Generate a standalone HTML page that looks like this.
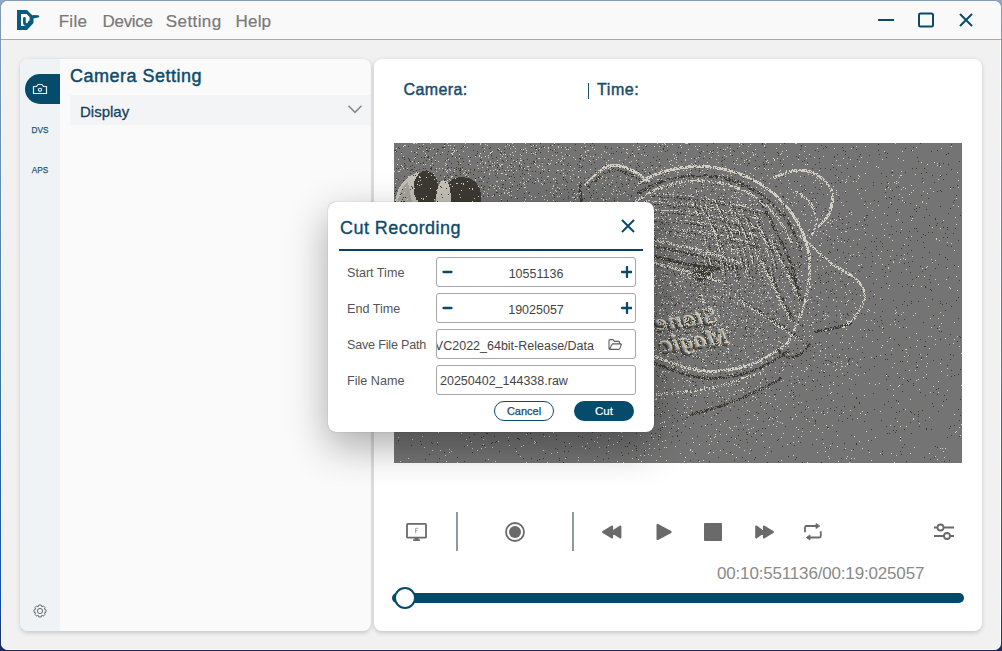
<!DOCTYPE html>
<html><head><meta charset="utf-8">
<style>
*{box-sizing:border-box;margin:0;padding:0}
html,body{width:1002px;height:651px;overflow:hidden;font-family:"Liberation Sans",sans-serif}
body{background:linear-gradient(180deg,#8da8c0 0%,#6d98c0 25%,#3a78b0 60%,#1150c0 92%,#1c2a62 99.5%);position:relative}
.abs{position:absolute}
#win{position:absolute;left:0;top:0;width:1002px;height:651px;border-radius:8px;border:1px solid rgba(30,40,60,.08);background:#f1f1f1;background-clip:padding-box;overflow:hidden;box-shadow:inset 0 0 0 1px rgba(255,255,255,.85)}
#title{position:absolute;left:0;top:0;width:1000px;height:39px;background:#f9f9f9;border-bottom:1px solid #a9a9a9}
.menu{position:absolute;top:11px;font-size:17px;color:#787878;line-height:20px;-webkit-text-stroke:0.2px #787878}
.panel{position:absolute;border-radius:8px;box-shadow:0 1.5px 4px rgba(0,0,0,.17)}
.side{position:absolute;left:0;width:40px;text-align:center;font-size:9.8px;color:#1d5673;line-height:12px;-webkit-text-stroke:0.25px #1d5673;transform:scaleX(0.84)}
.lbl{position:absolute;left:19px;font-size:12.6px;color:#555;line-height:14px}
.inp{position:absolute;left:108px;width:200px;height:30px;border:1px solid #a8a8a8;border-radius:3px;background:#fff;overflow:hidden}
.num{position:absolute;left:0;width:198px;top:9px;text-align:center;font-size:12.5px;color:#444;line-height:15px}
.btn{position:absolute;top:199px;height:20px;border-radius:10px;font-size:11px;line-height:18px;text-align:center}
</style></head><body>
<div id="win">
  <div id="title">
    <svg class="abs" style="left:15px;top:8px" width="26" height="24" viewBox="16 9 26 24">
      <path fill="#0a5a7f" fill-rule="evenodd" d="M17 10H27L33.5 16.5V23L27 30H17Z M21 14H26.6L29.6 17V22L25.8 26H21Z"/>
      <path d="M24.4 18.3V22.2Q24.4 24.7 26.7 24.7Q29 24.7 29.6 21.8" stroke="#0a5a7f" stroke-width="2.7" fill="none" stroke-linecap="round"/>
      <path fill="#0a5a7f" d="M32.3 15L38.5 15.2L39.4 16.4L38.3 17.5L33.2 18.6Z"/>
    </svg>
    <div class="menu" style="left:57.7px;letter-spacing:0.3px">File</div>
    <div class="menu" style="left:101.5px;letter-spacing:-0.3px">Device</div>
    <div class="menu" style="left:164.8px;letter-spacing:0.4px">Setting</div>
    <div class="menu" style="left:234.5px;letter-spacing:0.2px">Help</div>
    <!-- window controls -->
    <svg class="abs" style="left:870px;top:8px" width="110" height="24" viewBox="871 9 110 24">
      <path d="M878 20H894" stroke="#0b4a6a" stroke-width="2"/>
      <rect x="919" y="13.5" width="14" height="13" rx="1.5" fill="none" stroke="#0b4a6a" stroke-width="2"/>
      <path d="M960 14L972 26M972 14L960 26" stroke="#0b4a6a" stroke-width="2"/>
    </svg>
  </div>
  <!-- left panel -->
  <div class="panel" style="left:19px;top:58px;width:351px;height:572px;background:#fafafa;overflow:hidden">
    <div class="abs" style="left:0;top:0;width:40px;height:573px;background:#eff3f6">
      <div class="abs" style="left:5px;top:15px;width:35px;height:30px;background:#054b6b;border-radius:15px 0 0 15px"></div>
      <svg class="abs" style="left:12px;top:24px" width="16" height="12" viewBox="0 0 16 12">
        <path d="M1.5 3.5H4.5L6 1.5H10L11.5 3.5H14.5V10.5H1.5Z" fill="none" stroke="#e6eef2" stroke-width="1.2"/>
        <circle cx="8" cy="6.8" r="1.6" fill="none" stroke="#e6eef2" stroke-width="1.1"/>
      </svg>
      <div class="side" style="top:64.5px">DVS</div>
      <div class="side" style="top:104.5px">APS</div>
      <svg class="abs" style="left:13px;top:545px" width="14" height="14" viewBox="-7 -7 14 14"><path fill="none" stroke="#555" stroke-width="0.85" stroke-linejoin="round" d="M4.36,-1.76 L5.99,-1.16 L5.99,1.16 L4.36,1.76 L4.33,1.84 L5.06,3.41 L3.41,5.06 L1.84,4.33 L1.76,4.36 L1.16,5.99 L-1.16,5.99 L-1.76,4.36 L-1.84,4.33 L-3.41,5.06 L-5.06,3.41 L-4.33,1.84 L-4.36,1.76 L-5.99,1.16 L-5.99,-1.16 L-4.36,-1.76 L-4.33,-1.84 L-5.06,-3.41 L-3.41,-5.06 L-1.84,-4.33 L-1.76,-4.36 L-1.16,-5.99 L1.16,-5.99 L1.76,-4.36 L1.84,-4.33 L3.41,-5.06 L5.06,-3.41 L4.33,-1.84Z"/><circle r="2.6" fill="none" stroke="#555" stroke-width="0.85"/></svg>
    </div>
    <div class="abs" style="left:50px;top:6px;font-size:18px;color:#0f4a6a;line-height:22px;letter-spacing:0.5px;-webkit-text-stroke:0.45px #0f4a6a">Camera Setting</div>
    <div class="abs" style="left:50px;top:36px;width:301px;height:30px;background:#f3f4f6"></div>
    <div class="abs" style="left:60px;top:44px;font-size:15px;color:#15425e;line-height:17px;-webkit-text-stroke:0.3px #15425e">Display</div>
    <svg class="abs" style="left:327px;top:45px" width="16" height="10" viewBox="0 0 16 10"><path d="M1.5 1.8L8 8.4L14.5 1.8" fill="none" stroke="#888" stroke-width="1.5"/></svg>
  </div>
  <!-- right panel -->
  <div class="panel" style="left:373px;top:58px;width:608px;height:572px;background:#fff;overflow:hidden">
    <div class="abs" style="left:29.5px;top:22px;font-size:16px;color:#174d6e;line-height:18px;letter-spacing:0.4px;-webkit-text-stroke:0.45px #174d6e">Camera:</div>
    <div class="abs" style="left:214px;top:24px;width:1.4px;height:16px;background:#1a5274"></div>
    <div class="abs" style="left:223px;top:22px;font-size:16px;color:#174d6e;line-height:18px;letter-spacing:0.6px;-webkit-text-stroke:0.45px #174d6e">Time:</div>
    <div id="cam" class="abs" style="left:20px;top:84px;width:568px;height:320px;background:#737373"><svg width="568" height="320" viewBox="0 0 568 320" shape-rendering="crispEdges" style="display:block"><rect width="568" height="320" fill="#747474"/><path fill="#c2c0b4" d="M1 60C2 46 10 33 25 29L30 60Z"/>
<path fill="#8a8880" d="M3 60C5 50 9 42 14 38L18 60Z" opacity="0.5"/>
<ellipse fill="#3c3a32" cx="32" cy="45" rx="12.5" ry="17"/>
<path fill="#3c3a32" d="M51 60V47C52 38 60 34 68 34C80 34 87 42 87 52V60Z"/>
<path fill="#c4c2b6" d="M42 60C42 46 45 37 50 37C55 37 57 46 57 60Z"/><g font-family="Liberation Serif" font-style="italic" font-weight="bold" font-size="23" transform="translate(323 180) scale(-1.15 1) rotate(9)"><g fill="#3b392f"><text x="1.5" y="1.5">Stone</text><text x="-5.5" y="23.5">Magic</text></g><g fill="#d3d0c3"><text x="-1" y="-1">Stone</text><text x="-8" y="21">Magic</text></g><g fill="#747474" opacity="0.55"><text x="0.3" y="0.3">Stone</text><text x="-6.7" y="22.3">Magic</text></g></g><path fill="#d3d0c3" d="M19 0h2v1h-2zM22 0h1v1h-1zM36 0h1v1h-1zM53 0h1v1h-1zM71 0h1v1h-1zM86 0h1v1h-1zM118 0h1v1h-1zM131 0h1v1h-1zM160 0h1v1h-1zM190 0h1v1h-1zM263 0h1v1h-1zM270 0h1v1h-1zM291 0h3v1h-3zM345 0h1v1h-1zM371 0h1v1h-1zM401 0h2v1h-2zM501 0h1v1h-1zM29 1h1v1h-1zM86 1h1v1h-1zM91 1h1v1h-1zM113 1h1v1h-1zM268 1h1v1h-1zM271 1h1v1h-1zM278 1h1v1h-1zM347 1h1v1h-1zM356 1h1v1h-1zM386 1h1v1h-1zM10 2h2v1h-2zM50 2h1v1h-1zM54 2h1v1h-1zM56 2h1v1h-1zM60 2h1v1h-1zM93 2h1v1h-1zM115 2h1v1h-1zM139 2h1v1h-1zM142 2h1v1h-1zM158 2h1v1h-1zM239 2h1v1h-1zM251 2h1v1h-1zM286 2h1v1h-1zM370 2h1v1h-1zM9 3h1v1h-1zM70 3h1v1h-1zM111 3h1v1h-1zM119 3h1v1h-1zM137 3h1v1h-1zM164 3h1v1h-1zM191 3h1v1h-1zM245 3h1v1h-1zM260 3h1v1h-1zM265 3h1v1h-1zM273 3h1v1h-1zM301 3h1v1h-1zM305 3h1v1h-1zM345 3h1v1h-1zM354 3h1v1h-1zM370 3h1v1h-1zM411 3h1v1h-1zM462 3h1v1h-1zM471 3h1v1h-1zM557 3h1v1h-1zM73 4h1v1h-1zM150 4h1v1h-1zM154 4h1v1h-1zM164 4h1v1h-1zM167 4h1v1h-1zM171 4h1v1h-1zM176 4h1v1h-1zM187 4h1v1h-1zM198 4h1v1h-1zM223 4h1v1h-1zM243 4h1v1h-1zM287 4h1v1h-1zM323 4h1v1h-1zM333 4h1v1h-1zM522 4h1v1h-1zM2 5h1v1h-1zM24 5h1v1h-1zM39 5h1v1h-1zM50 5h1v1h-1zM56 5h1v1h-1zM59 5h1v1h-1zM90 5h1v1h-1zM104 5h1v1h-1zM116 5h1v1h-1zM121 5h1v1h-1zM131 5h1v1h-1zM145 5h1v1h-1zM154 5h1v1h-1zM229 5h1v1h-1zM336 5h1v1h-1zM382 5h1v1h-1zM423 5h1v1h-1zM440 5h1v1h-1zM457 5h1v1h-1zM547 5h1v1h-1zM32 6h1v1h-1zM36 6h1v1h-1zM105 6h1v1h-1zM127 6h1v1h-1zM129 6h1v1h-1zM142 6h1v1h-1zM160 6h1v1h-1zM172 6h1v1h-1zM174 6h1v1h-1zM200 6h1v1h-1zM232 6h2v1h-2zM244 6h2v1h-2zM294 6h1v1h-1zM303 6h1v1h-1zM329 6h1v1h-1zM331 6h1v1h-1zM361 6h1v1h-1zM58 7h1v1h-1zM60 7h1v1h-1zM62 7h1v1h-1zM132 7h1v1h-1zM193 7h2v1h-2zM392 7h1v1h-1zM518 7h1v1h-1zM1 8h1v1h-1zM17 8h1v1h-1zM29 8h1v1h-1zM60 8h1v1h-1zM69 8h1v1h-1zM90 8h1v1h-1zM98 8h1v1h-1zM107 8h1v1h-1zM121 8h1v1h-1zM154 8h1v1h-1zM191 8h1v1h-1zM210 8h1v1h-1zM264 8h1v1h-1zM267 8h1v1h-1zM309 8h1v1h-1zM316 8h1v1h-1zM336 8h1v1h-1zM353 8h1v1h-1zM388 8h1v1h-1zM410 8h1v1h-1zM490 8h1v1h-1zM508 8h1v1h-1zM22 9h1v1h-1zM48 9h1v1h-1zM59 9h1v1h-1zM96 9h2v1h-2zM118 9h1v1h-1zM132 9h1v1h-1zM141 9h1v1h-1zM167 9h1v1h-1zM191 9h1v1h-1zM212 9h1v1h-1zM232 9h1v1h-1zM292 9h1v1h-1zM318 9h1v1h-1zM323 9h1v1h-1zM348 9h1v1h-1zM358 9h1v1h-1zM7 10h1v1h-1zM31 10h1v1h-1zM42 10h1v1h-1zM57 10h2v1h-2zM86 10h1v1h-1zM96 10h1v1h-1zM137 10h1v1h-1zM139 10h1v1h-1zM233 10h1v1h-1zM238 10h1v1h-1zM315 10h1v1h-1zM349 10h1v1h-1zM387 10h1v1h-1zM58 11h1v1h-1zM65 11h1v1h-1zM106 11h1v1h-1zM109 11h1v1h-1zM111 11h1v1h-1zM116 11h1v1h-1zM126 11h1v1h-1zM141 11h1v1h-1zM171 11h1v1h-1zM207 11h1v1h-1zM215 11h1v1h-1zM247 11h1v1h-1zM279 11h1v1h-1zM336 11h1v1h-1zM359 11h1v1h-1zM361 11h1v1h-1zM386 11h1v1h-1zM405 11h1v1h-1zM415 11h1v1h-1zM32 12h1v1h-1zM85 12h1v1h-1zM94 12h1v1h-1zM119 12h1v1h-1zM127 12h1v1h-1zM158 12h1v1h-1zM162 12h1v1h-1zM175 12h1v1h-1zM187 12h1v1h-1zM192 12h1v1h-1zM240 12h1v1h-1zM250 12h1v1h-1zM252 12h1v1h-1zM281 12h1v1h-1zM291 12h1v1h-1zM324 12h1v1h-1zM330 12h1v1h-1zM359 12h1v1h-1zM9 13h1v1h-1zM31 13h1v1h-1zM74 13h1v1h-1zM81 13h1v1h-1zM85 13h1v1h-1zM91 13h1v1h-1zM108 13h1v1h-1zM168 13h1v1h-1zM196 13h1v1h-1zM199 13h1v1h-1zM240 13h1v1h-1zM310 13h1v1h-1zM332 13h1v1h-1zM370 13h1v1h-1zM393 13h1v1h-1zM429 13h1v1h-1zM21 14h1v1h-1zM38 14h1v1h-1zM61 14h1v1h-1zM87 14h1v1h-1zM94 14h1v1h-1zM111 14h1v1h-1zM179 14h1v1h-1zM188 14h1v1h-1zM204 14h1v1h-1zM207 14h1v1h-1zM282 14h1v1h-1zM304 14h1v1h-1zM317 14h1v1h-1zM356 14h1v1h-1zM420 14h1v1h-1zM467 14h1v1h-1zM20 15h1v1h-1zM65 15h1v1h-1zM106 15h1v1h-1zM126 15h1v1h-1zM144 15h2v1h-2zM150 15h1v1h-1zM168 15h1v1h-1zM170 15h1v1h-1zM190 15h1v1h-1zM218 15h1v1h-1zM280 15h1v1h-1zM297 15h1v1h-1zM302 15h1v1h-1zM343 15h1v1h-1zM379 15h1v1h-1zM383 15h1v1h-1zM412 15h1v1h-1zM449 15h1v1h-1zM504 15h1v1h-1zM4 16h1v1h-1zM35 16h1v1h-1zM54 16h1v1h-1zM164 16h1v1h-1zM181 16h1v1h-1zM202 16h1v1h-1zM231 16h1v1h-1zM282 16h1v1h-1zM291 16h1v1h-1zM322 16h1v1h-1zM352 16h1v1h-1zM380 16h1v1h-1zM389 16h1v1h-1zM404 16h1v1h-1zM456 16h1v1h-1zM488 16h1v1h-1zM41 17h1v1h-1zM52 17h1v1h-1zM75 17h1v1h-1zM103 17h1v1h-1zM112 17h1v1h-1zM119 17h1v1h-1zM126 17h2v1h-2zM157 17h1v1h-1zM167 17h1v1h-1zM195 17h1v1h-1zM214 17h1v1h-1zM225 17h1v1h-1zM242 17h1v1h-1zM277 17h1v1h-1zM291 17h1v1h-1zM342 17h1v1h-1zM350 17h1v1h-1zM355 17h1v1h-1zM373 17h1v1h-1zM380 17h1v1h-1zM442 17h1v1h-1zM509 17h1v1h-1zM18 18h1v1h-1zM44 18h1v1h-1zM75 18h1v1h-1zM88 18h1v1h-1zM96 18h1v1h-1zM122 18h1v1h-1zM141 18h1v1h-1zM166 18h1v1h-1zM196 18h1v1h-1zM237 18h1v1h-1zM275 18h1v1h-1zM301 18h1v1h-1zM372 18h1v1h-1zM465 18h1v1h-1zM24 19h1v1h-1zM91 19h1v1h-1zM100 19h1v1h-1zM103 19h1v1h-1zM125 19h1v1h-1zM162 19h1v1h-1zM212 19h1v1h-1zM235 19h1v1h-1zM248 19h1v1h-1zM265 19h1v1h-1zM282 19h1v1h-1zM313 19h1v1h-1zM324 19h1v1h-1zM350 19h1v1h-1zM374 19h1v1h-1zM473 19h1v1h-1zM527 19h1v1h-1zM540 19h1v1h-1zM22 20h1v1h-1zM38 20h1v1h-1zM51 20h1v1h-1zM66 20h1v1h-1zM86 20h1v1h-1zM91 20h1v1h-1zM98 20h1v1h-1zM117 20h1v1h-1zM125 20h1v1h-1zM140 20h1v1h-1zM148 20h1v1h-1zM154 20h1v1h-1zM156 20h1v1h-1zM228 20h1v1h-1zM297 20h1v1h-1zM340 20h1v1h-1zM453 20h1v1h-1zM543 20h1v1h-1zM3 21h1v1h-1zM29 21h1v1h-1zM31 21h1v1h-1zM52 21h1v1h-1zM76 21h1v1h-1zM105 21h1v1h-1zM107 21h2v1h-2zM127 21h1v1h-1zM141 21h1v1h-1zM155 21h1v1h-1zM169 21h1v1h-1zM186 21h1v1h-1zM212 21h1v1h-1zM214 21h1v1h-1zM216 21h10v1h-10zM276 21h1v1h-1zM298 21h1v1h-1zM300 21h1v1h-1zM309 21h1v1h-1zM343 21h1v1h-1zM346 21h1v1h-1zM388 21h1v1h-1zM398 21h1v1h-1zM411 21h1v1h-1zM413 21h1v1h-1zM438 21h1v1h-1zM533 21h1v1h-1zM7 22h1v1h-1zM36 22h1v1h-1zM51 22h1v1h-1zM83 22h1v1h-1zM100 22h1v1h-1zM106 22h1v1h-1zM115 22h1v1h-1zM145 22h1v1h-1zM213 22h5v1h-5zM219 22h1v1h-1zM222 22h2v1h-2zM225 22h3v1h-3zM229 22h1v1h-1zM278 22h1v1h-1zM284 22h1v1h-1zM294 22h3v1h-3zM299 22h1v1h-1zM301 22h2v1h-2zM305 22h1v1h-1zM308 22h8v1h-8zM444 22h1v1h-1zM446 22h1v1h-1zM543 22h1v1h-1zM8 23h1v1h-1zM98 23h1v1h-1zM106 23h1v1h-1zM120 23h1v1h-1zM133 23h2v1h-2zM143 23h1v1h-1zM148 23h1v1h-1zM176 23h1v1h-1zM209 23h2v1h-2zM212 23h3v1h-3zM216 23h17v1h-17zM286 23h3v1h-3zM291 23h11v1h-11zM303 23h4v1h-4zM308 23h2v1h-2zM311 23h6v1h-6zM319 23h4v1h-4zM331 23h1v1h-1zM461 23h1v1h-1zM482 23h1v1h-1zM546 23h1v1h-1zM88 24h1v1h-1zM93 24h1v1h-1zM113 24h1v1h-1zM117 24h1v1h-1zM127 24h1v1h-1zM144 24h1v1h-1zM208 24h5v1h-5zM215 24h2v1h-2zM225 24h2v1h-2zM228 24h6v1h-6zM253 24h1v1h-1zM257 24h1v1h-1zM262 24h1v1h-1zM270 24h1v1h-1zM280 24h3v1h-3zM285 24h3v1h-3zM289 24h1v1h-1zM291 24h2v1h-2zM294 24h6v1h-6zM302 24h8v1h-8zM311 24h4v1h-4zM316 24h2v1h-2zM319 24h1v1h-1zM321 24h1v1h-1zM323 24h4v1h-4zM328 24h1v1h-1zM361 24h1v1h-1zM484 24h1v1h-1zM9 25h1v1h-1zM13 25h1v1h-1zM42 25h1v1h-1zM45 25h1v1h-1zM48 25h1v1h-1zM84 25h1v1h-1zM130 25h1v1h-1zM180 25h1v1h-1zM208 25h2v1h-2zM211 25h2v1h-2zM214 25h1v1h-1zM230 25h1v1h-1zM232 25h3v1h-3zM236 25h1v1h-1zM276 25h2v1h-2zM279 25h2v1h-2zM282 25h3v1h-3zM286 25h8v1h-8zM316 25h1v1h-1zM319 25h1v1h-1zM321 25h3v1h-3zM325 25h8v1h-8zM360 25h1v1h-1zM364 25h1v1h-1zM370 25h1v1h-1zM378 25h1v1h-1zM6 26h1v1h-1zM51 26h1v1h-1zM55 26h1v1h-1zM60 26h1v1h-1zM68 26h1v1h-1zM101 26h1v1h-1zM134 26h1v1h-1zM148 26h1v1h-1zM150 26h1v1h-1zM169 26h1v1h-1zM196 26h1v1h-1zM206 26h2v1h-2zM210 26h1v1h-1zM216 26h1v1h-1zM233 26h2v1h-2zM236 26h4v1h-4zM250 26h1v1h-1zM258 26h1v1h-1zM267 26h1v1h-1zM272 26h14v1h-14zM296 26h1v1h-1zM313 26h1v1h-1zM323 26h6v1h-6zM330 26h3v1h-3zM334 26h2v1h-2zM361 26h1v1h-1zM371 26h1v1h-1zM374 26h1v1h-1zM398 26h1v1h-1zM400 26h3v1h-3zM405 26h2v1h-2zM408 26h5v1h-5zM53 27h1v1h-1zM56 27h1v1h-1zM71 27h1v1h-1zM74 27h1v1h-1zM96 27h1v1h-1zM99 27h1v1h-1zM103 27h1v1h-1zM111 27h1v1h-1zM114 27h1v1h-1zM117 27h1v1h-1zM122 27h1v1h-1zM155 27h1v1h-1zM163 27h2v1h-2zM167 27h1v1h-1zM175 27h1v1h-1zM178 27h1v1h-1zM186 27h1v1h-1zM204 27h5v1h-5zM235 27h3v1h-3zM239 27h2v1h-2zM268 27h1v1h-1zM270 27h5v1h-5zM276 27h5v1h-5zM289 27h1v1h-1zM292 27h1v1h-1zM308 27h1v1h-1zM329 27h4v1h-4zM335 27h4v1h-4zM386 27h1v1h-1zM392 27h1v1h-1zM395 27h1v1h-1zM397 27h4v1h-4zM402 27h1v1h-1zM404 27h7v1h-7zM412 27h1v1h-1zM414 27h3v1h-3zM425 27h1v1h-1zM498 27h1v1h-1zM0 28h1v1h-1zM4 28h2v1h-2zM42 28h1v1h-1zM52 28h1v1h-1zM60 28h1v1h-1zM184 28h1v1h-1zM191 28h1v1h-1zM206 28h1v1h-1zM237 28h6v1h-6zM251 28h1v1h-1zM266 28h2v1h-2zM270 28h6v1h-6zM281 28h1v1h-1zM333 28h6v1h-6zM340 28h1v1h-1zM342 28h1v1h-1zM351 28h1v1h-1zM385 28h1v1h-1zM392 28h1v1h-1zM395 28h3v1h-3zM399 28h5v1h-5zM407 28h7v1h-7zM415 28h1v1h-1zM417 28h1v1h-1zM419 28h1v1h-1zM507 28h1v1h-1zM22 29h1v1h-1zM34 29h1v1h-1zM53 29h1v1h-1zM70 29h1v1h-1zM90 29h1v1h-1zM119 29h1v1h-1zM191 29h1v1h-1zM202 29h1v1h-1zM204 29h1v1h-1zM206 29h1v1h-1zM239 29h6v1h-6zM264 29h3v1h-3zM268 29h2v1h-2zM271 29h1v1h-1zM283 29h2v1h-2zM296 29h1v1h-1zM306 29h1v1h-1zM336 29h1v1h-1zM338 29h3v1h-3zM343 29h3v1h-3zM391 29h2v1h-2zM396 29h2v1h-2zM402 29h1v1h-1zM413 29h4v1h-4zM418 29h2v1h-2zM563 29h1v1h-1zM39 30h1v1h-1zM69 30h1v1h-1zM95 30h1v1h-1zM103 30h1v1h-1zM107 30h2v1h-2zM134 30h1v1h-1zM169 30h1v1h-1zM239 30h1v1h-1zM241 30h3v1h-3zM245 30h1v1h-1zM254 30h1v1h-1zM260 30h3v1h-3zM265 30h3v1h-3zM274 30h1v1h-1zM310 30h1v1h-1zM336 30h1v1h-1zM340 30h3v1h-3zM344 30h5v1h-5zM356 30h1v1h-1zM386 30h2v1h-2zM389 30h1v1h-1zM391 30h1v1h-1zM394 30h1v1h-1zM417 30h1v1h-1zM419 30h5v1h-5zM471 30h1v1h-1zM72 31h1v1h-1zM95 31h1v1h-1zM111 31h2v1h-2zM179 31h1v1h-1zM200 31h3v1h-3zM244 31h4v1h-4zM258 31h8v1h-8zM270 31h1v1h-1zM283 31h1v1h-1zM293 31h1v1h-1zM295 31h1v1h-1zM328 31h1v1h-1zM345 31h3v1h-3zM349 31h2v1h-2zM384 31h2v1h-2zM387 31h3v1h-3zM391 31h1v1h-1zM414 31h1v1h-1zM419 31h2v1h-2zM422 31h1v1h-1zM521 31h1v1h-1zM37 32h1v1h-1zM40 32h1v1h-1zM71 32h1v1h-1zM136 32h1v1h-1zM169 32h1v1h-1zM171 32h1v1h-1zM199 32h3v1h-3zM204 32h1v1h-1zM218 32h1v1h-1zM240 32h1v1h-1zM244 32h1v1h-1zM246 32h2v1h-2zM256 32h2v1h-2zM259 32h1v1h-1zM261 32h2v1h-2zM325 32h1v1h-1zM329 32h1v1h-1zM333 32h1v1h-1zM337 32h1v1h-1zM346 32h2v1h-2zM352 32h2v1h-2zM359 32h1v1h-1zM373 32h1v1h-1zM381 32h8v1h-8zM418 32h1v1h-1zM423 32h3v1h-3zM464 32h1v1h-1zM498 32h1v1h-1zM506 32h2v1h-2zM546 32h1v1h-1zM14 33h1v1h-1zM25 33h1v1h-1zM50 33h1v1h-1zM57 33h2v1h-2zM74 33h1v1h-1zM153 33h2v1h-2zM176 33h1v1h-1zM184 33h1v1h-1zM198 33h3v1h-3zM208 33h1v1h-1zM226 33h1v1h-1zM246 33h1v1h-1zM248 33h2v1h-2zM253 33h5v1h-5zM259 33h1v1h-1zM313 33h1v1h-1zM348 33h6v1h-6zM355 33h1v1h-1zM379 33h1v1h-1zM381 33h2v1h-2zM384 33h2v1h-2zM391 33h1v1h-1zM406 33h1v1h-1zM423 33h5v1h-5zM454 33h1v1h-1zM465 33h1v1h-1zM19 34h1v1h-1zM25 34h2v1h-2zM32 34h1v1h-1zM57 34h1v1h-1zM86 34h1v1h-1zM184 34h1v1h-1zM197 34h2v1h-2zM212 34h1v1h-1zM232 34h1v1h-1zM247 34h3v1h-3zM251 34h3v1h-3zM255 34h3v1h-3zM276 34h1v1h-1zM283 34h1v1h-1zM324 34h1v1h-1zM333 34h1v1h-1zM349 34h1v1h-1zM351 34h5v1h-5zM368 34h1v1h-1zM379 34h1v1h-1zM382 34h1v1h-1zM422 34h1v1h-1zM425 34h2v1h-2zM428 34h1v1h-1zM443 34h1v1h-1zM505 34h1v1h-1zM16 35h1v1h-1zM19 35h1v1h-1zM42 35h1v1h-1zM61 35h1v1h-1zM87 35h1v1h-1zM115 35h1v1h-1zM129 35h1v1h-1zM143 35h1v1h-1zM159 35h1v1h-1zM161 35h1v1h-1zM176 35h1v1h-1zM196 35h3v1h-3zM204 35h1v1h-1zM207 35h1v1h-1zM249 35h1v1h-1zM252 35h4v1h-4zM258 35h1v1h-1zM289 35h1v1h-1zM298 35h1v1h-1zM304 35h1v1h-1zM311 35h1v1h-1zM353 35h5v1h-5zM359 35h1v1h-1zM376 35h1v1h-1zM380 35h2v1h-2zM423 35h1v1h-1zM426 35h2v1h-2zM429 35h1v1h-1zM464 35h1v1h-1zM2 36h1v1h-1zM40 36h1v1h-1zM55 36h1v1h-1zM81 36h1v1h-1zM134 36h1v1h-1zM159 36h1v1h-1zM192 36h1v1h-1zM195 36h2v1h-2zM226 36h1v1h-1zM237 36h1v1h-1zM248 36h6v1h-6zM263 36h2v1h-2zM267 36h1v1h-1zM292 36h1v1h-1zM303 36h2v1h-2zM307 36h2v1h-2zM328 36h1v1h-1zM356 36h2v1h-2zM359 36h1v1h-1zM366 36h1v1h-1zM427 36h1v1h-1zM429 36h2v1h-2zM452 36h1v1h-1zM544 36h1v1h-1zM26 37h1v1h-1zM53 37h1v1h-1zM56 37h1v1h-1zM81 37h1v1h-1zM107 37h1v1h-1zM109 37h1v1h-1zM144 37h1v1h-1zM150 37h1v1h-1zM178 37h1v1h-1zM194 37h2v1h-2zM199 37h1v1h-1zM211 37h1v1h-1zM218 37h1v1h-1zM232 37h1v1h-1zM249 37h7v1h-7zM271 37h1v1h-1zM287 37h1v1h-1zM294 37h1v1h-1zM296 37h7v1h-7zM304 37h2v1h-2zM308 37h3v1h-3zM313 37h1v1h-1zM317 37h1v1h-1zM341 37h1v1h-1zM359 37h4v1h-4zM386 37h1v1h-1zM394 37h1v1h-1zM421 37h1v1h-1zM425 37h1v1h-1zM429 37h1v1h-1zM448 37h1v1h-1zM564 37h1v1h-1zM24 38h1v1h-1zM47 38h3v1h-3zM73 38h1v1h-1zM89 38h1v1h-1zM102 38h2v1h-2zM132 38h1v1h-1zM141 38h1v1h-1zM144 38h1v1h-1zM161 38h1v1h-1zM193 38h1v1h-1zM246 38h4v1h-4zM252 38h1v1h-1zM254 38h2v1h-2zM282 38h2v1h-2zM285 38h1v1h-1zM287 38h1v1h-1zM291 38h1v1h-1zM294 38h1v1h-1zM297 38h2v1h-2zM303 38h4v1h-4zM308 38h1v1h-1zM310 38h1v1h-1zM314 38h2v1h-2zM321 38h1v1h-1zM325 38h2v1h-2zM349 38h1v1h-1zM359 38h6v1h-6zM430 38h3v1h-3zM452 38h1v1h-1zM459 38h1v1h-1zM462 38h1v1h-1zM502 38h1v1h-1zM43 39h1v1h-1zM53 39h1v1h-1zM116 39h1v1h-1zM126 39h1v1h-1zM130 39h1v1h-1zM185 39h1v1h-1zM192 39h3v1h-3zM217 39h1v1h-1zM244 39h1v1h-1zM247 39h1v1h-1zM278 39h1v1h-1zM282 39h1v1h-1zM285 39h1v1h-1zM287 39h2v1h-2zM290 39h1v1h-1zM296 39h1v1h-1zM308 39h1v1h-1zM315 39h1v1h-1zM318 39h1v1h-1zM323 39h4v1h-4zM328 39h2v1h-2zM354 39h1v1h-1zM361 39h3v1h-3zM365 39h2v1h-2zM419 39h1v1h-1zM432 39h2v1h-2zM451 39h1v1h-1zM500 39h1v1h-1zM504 39h1v1h-1zM529 39h1v1h-1zM1 40h1v1h-1zM62 40h2v1h-2zM67 40h1v1h-1zM69 40h1v1h-1zM129 40h1v1h-1zM147 40h1v1h-1zM191 40h1v1h-1zM193 40h1v1h-1zM208 40h1v1h-1zM244 40h3v1h-3zM262 40h1v1h-1zM275 40h1v1h-1zM277 40h2v1h-2zM281 40h1v1h-1zM285 40h2v1h-2zM298 40h1v1h-1zM319 40h1v1h-1zM323 40h1v1h-1zM325 40h2v1h-2zM329 40h1v1h-1zM332 40h1v1h-1zM334 40h1v1h-1zM345 40h2v1h-2zM363 40h5v1h-5zM375 40h1v1h-1zM395 40h1v1h-1zM426 40h1v1h-1zM428 40h1v1h-1zM432 40h1v1h-1zM494 40h1v1h-1zM502 40h1v1h-1zM14 41h1v1h-1zM23 41h1v1h-1zM27 41h1v1h-1zM46 41h1v1h-1zM56 41h1v1h-1zM69 41h1v1h-1zM118 41h1v1h-1zM130 41h1v1h-1zM148 41h1v1h-1zM168 41h1v1h-1zM183 41h1v1h-1zM190 41h2v1h-2zM201 41h1v1h-1zM215 41h1v1h-1zM273 41h1v1h-1zM276 41h2v1h-2zM279 41h1v1h-1zM281 41h1v1h-1zM291 41h1v1h-1zM309 41h1v1h-1zM327 41h3v1h-3zM331 41h1v1h-1zM334 41h2v1h-2zM342 41h1v1h-1zM365 41h3v1h-3zM369 41h1v1h-1zM432 41h3v1h-3zM25 42h1v1h-1zM54 42h1v1h-1zM96 42h1v1h-1zM101 42h1v1h-1zM159 42h1v1h-1zM171 42h1v1h-1zM191 42h1v1h-1zM234 42h1v1h-1zM243 42h1v1h-1zM268 42h2v1h-2zM273 42h1v1h-1zM275 42h1v1h-1zM277 42h1v1h-1zM286 42h1v1h-1zM336 42h3v1h-3zM366 42h4v1h-4zM406 42h1v1h-1zM434 42h2v1h-2zM517 42h1v1h-1zM51 43h1v1h-1zM58 43h1v1h-1zM84 43h1v1h-1zM99 43h1v1h-1zM104 43h1v1h-1zM159 43h1v1h-1zM221 43h1v1h-1zM265 43h2v1h-2zM270 43h1v1h-1zM272 43h1v1h-1zM276 43h1v1h-1zM279 43h1v1h-1zM289 43h1v1h-1zM313 43h1v1h-1zM319 43h1v1h-1zM329 43h1v1h-1zM335 43h4v1h-4zM340 43h3v1h-3zM368 43h3v1h-3zM427 43h1v1h-1zM434 43h2v1h-2zM439 43h1v1h-1zM11 44h1v1h-1zM87 44h1v1h-1zM130 44h2v1h-2zM163 44h1v1h-1zM184 44h1v1h-1zM210 44h1v1h-1zM234 44h1v1h-1zM241 44h1v1h-1zM263 44h1v1h-1zM266 44h3v1h-3zM274 44h1v1h-1zM284 44h1v1h-1zM309 44h1v1h-1zM340 44h1v1h-1zM343 44h3v1h-3zM357 44h1v1h-1zM362 44h1v1h-1zM369 44h1v1h-1zM371 44h3v1h-3zM394 44h1v1h-1zM494 44h1v1h-1zM509 44h1v1h-1zM564 44h1v1h-1zM17 45h1v1h-1zM20 45h1v1h-1zM36 45h1v1h-1zM75 45h1v1h-1zM78 45h1v1h-1zM100 45h1v1h-1zM105 45h1v1h-1zM115 45h1v1h-1zM158 45h1v1h-1zM165 45h1v1h-1zM261 45h5v1h-5zM267 45h2v1h-2zM296 45h1v1h-1zM322 45h1v1h-1zM341 45h5v1h-5zM367 45h1v1h-1zM371 45h1v1h-1zM374 45h1v1h-1zM435 45h1v1h-1zM437 45h1v1h-1zM511 45h1v1h-1zM536 45h1v1h-1zM556 45h1v1h-1zM78 46h1v1h-1zM94 46h1v1h-1zM109 46h1v1h-1zM123 46h1v1h-1zM179 46h1v1h-1zM194 46h1v1h-1zM202 46h1v1h-1zM219 46h1v1h-1zM253 46h1v1h-1zM259 46h4v1h-4zM264 46h1v1h-1zM267 46h1v1h-1zM272 46h1v1h-1zM313 46h1v1h-1zM321 46h1v1h-1zM325 46h1v1h-1zM329 46h2v1h-2zM334 46h1v1h-1zM343 46h3v1h-3zM372 46h2v1h-2zM375 46h2v1h-2zM397 46h1v1h-1zM411 46h1v1h-1zM437 46h2v1h-2zM463 46h1v1h-1zM491 46h1v1h-1zM496 46h1v1h-1zM507 46h1v1h-1zM42 47h1v1h-1zM67 47h1v1h-1zM102 47h1v1h-1zM112 47h1v1h-1zM161 47h1v1h-1zM222 47h1v1h-1zM239 47h1v1h-1zM258 47h1v1h-1zM260 47h1v1h-1zM280 47h1v1h-1zM302 47h1v1h-1zM307 47h1v1h-1zM330 47h1v1h-1zM347 47h5v1h-5zM355 47h1v1h-1zM370 47h1v1h-1zM374 47h3v1h-3zM436 47h3v1h-3zM442 47h1v1h-1zM471 47h1v1h-1zM519 47h1v1h-1zM90 48h1v1h-1zM117 48h1v1h-1zM132 48h1v1h-1zM162 48h1v1h-1zM211 48h1v1h-1zM219 48h1v1h-1zM225 48h1v1h-1zM255 48h1v1h-1zM259 48h2v1h-2zM302 48h1v1h-1zM304 48h1v1h-1zM307 48h1v1h-1zM350 48h1v1h-1zM352 48h2v1h-2zM365 48h1v1h-1zM375 48h4v1h-4zM401 48h3v1h-3zM436 48h1v1h-1zM451 48h1v1h-1zM529 48h1v1h-1zM539 48h1v1h-1zM10 49h1v1h-1zM110 49h1v1h-1zM114 49h2v1h-2zM156 49h1v1h-1zM186 49h1v1h-1zM230 49h1v1h-1zM254 49h3v1h-3zM258 49h1v1h-1zM274 49h1v1h-1zM279 49h1v1h-1zM289 49h1v1h-1zM302 49h1v1h-1zM340 49h1v1h-1zM342 49h1v1h-1zM344 49h1v1h-1zM352 49h1v1h-1zM355 49h2v1h-2zM367 49h1v1h-1zM376 49h3v1h-3zM380 49h1v1h-1zM399 49h1v1h-1zM403 49h1v1h-1zM417 49h1v1h-1zM442 49h1v1h-1zM517 49h1v1h-1zM89 50h1v1h-1zM93 50h1v1h-1zM110 50h1v1h-1zM113 50h1v1h-1zM159 50h1v1h-1zM167 50h1v1h-1zM180 50h1v1h-1zM183 50h1v1h-1zM185 50h1v1h-1zM217 50h1v1h-1zM229 50h1v1h-1zM252 50h5v1h-5zM260 50h2v1h-2zM265 50h1v1h-1zM269 50h1v1h-1zM321 50h1v1h-1zM347 50h1v1h-1zM353 50h3v1h-3zM357 50h1v1h-1zM370 50h1v1h-1zM378 50h4v1h-4zM386 50h1v1h-1zM393 50h1v1h-1zM402 50h1v1h-1zM405 50h3v1h-3zM438 50h2v1h-2zM465 50h1v1h-1zM533 50h1v1h-1zM65 51h1v1h-1zM182 51h1v1h-1zM189 51h1v1h-1zM208 51h1v1h-1zM218 51h1v1h-1zM223 51h1v1h-1zM226 51h1v1h-1zM245 51h1v1h-1zM252 51h1v1h-1zM269 51h1v1h-1zM271 51h2v1h-2zM275 51h2v1h-2zM278 51h2v1h-2zM283 51h1v1h-1zM297 51h1v1h-1zM303 51h1v1h-1zM316 51h1v1h-1zM341 51h1v1h-1zM348 51h1v1h-1zM354 51h1v1h-1zM356 51h3v1h-3zM379 51h4v1h-4zM406 51h1v1h-1zM408 51h1v1h-1zM433 51h1v1h-1zM438 51h1v1h-1zM442 51h1v1h-1zM505 51h1v1h-1zM515 51h1v1h-1zM5 52h2v1h-2zM44 52h1v1h-1zM54 52h1v1h-1zM99 52h1v1h-1zM105 52h1v1h-1zM115 52h1v1h-1zM117 52h1v1h-1zM135 52h1v1h-1zM151 52h1v1h-1zM158 52h1v1h-1zM233 52h1v1h-1zM251 52h1v1h-1zM256 52h1v1h-1zM263 52h1v1h-1zM286 52h2v1h-2zM291 52h1v1h-1zM294 52h1v1h-1zM296 52h1v1h-1zM329 52h1v1h-1zM338 52h1v1h-1zM358 52h3v1h-3zM380 52h4v1h-4zM402 52h1v1h-1zM407 52h2v1h-2zM438 52h1v1h-1zM444 52h1v1h-1zM32 53h1v1h-1zM84 53h1v1h-1zM87 53h1v1h-1zM93 53h1v1h-1zM98 53h1v1h-1zM137 53h1v1h-1zM148 53h1v1h-1zM163 53h1v1h-1zM165 53h1v1h-1zM247 53h1v1h-1zM279 53h1v1h-1zM295 53h1v1h-1zM297 53h3v1h-3zM311 53h1v1h-1zM337 53h1v1h-1zM346 53h1v1h-1zM357 53h1v1h-1zM360 53h1v1h-1zM368 53h1v1h-1zM381 53h4v1h-4zM407 53h2v1h-2zM410 53h1v1h-1zM437 53h3v1h-3zM491 53h1v1h-1zM4 54h1v1h-1zM49 54h1v1h-1zM66 54h1v1h-1zM121 54h1v1h-1zM141 54h1v1h-1zM178 54h3v1h-3zM183 54h1v1h-1zM223 54h1v1h-1zM241 54h1v1h-1zM245 54h1v1h-1zM247 54h4v1h-4zM257 54h1v1h-1zM307 54h1v1h-1zM312 54h1v1h-1zM326 54h1v1h-1zM338 54h1v1h-1zM340 54h1v1h-1zM342 54h1v1h-1zM359 54h1v1h-1zM361 54h3v1h-3zM372 54h1v1h-1zM382 54h1v1h-1zM384 54h1v1h-1zM400 54h1v1h-1zM407 54h1v1h-1zM409 54h1v1h-1zM412 54h1v1h-1zM437 54h1v1h-1zM508 54h1v1h-1zM27 55h1v1h-1zM29 55h1v1h-1zM80 55h1v1h-1zM198 55h1v1h-1zM207 55h1v1h-1zM215 55h1v1h-1zM245 55h1v1h-1zM247 55h2v1h-2zM265 55h1v1h-1zM314 55h1v1h-1zM328 55h1v1h-1zM334 55h1v1h-1zM344 55h1v1h-1zM355 55h1v1h-1zM362 55h1v1h-1zM385 55h2v1h-2zM392 55h1v1h-1zM410 55h1v1h-1zM412 55h1v1h-1zM437 55h3v1h-3zM467 55h1v1h-1zM562 55h1v1h-1zM13 56h1v1h-1zM29 56h1v1h-1zM40 56h1v1h-1zM107 56h1v1h-1zM131 56h1v1h-1zM137 56h1v1h-1zM150 56h1v1h-1zM181 56h1v1h-1zM209 56h1v1h-1zM212 56h1v1h-1zM235 56h1v1h-1zM242 56h1v1h-1zM244 56h3v1h-3zM265 56h1v1h-1zM270 56h1v1h-1zM272 56h1v1h-1zM297 56h1v1h-1zM309 56h1v1h-1zM312 56h1v1h-1zM314 56h2v1h-2zM318 56h2v1h-2zM345 56h1v1h-1zM384 56h3v1h-3zM394 56h1v1h-1zM412 56h2v1h-2zM420 56h1v1h-1zM437 56h3v1h-3zM153 57h1v1h-1zM159 57h1v1h-1zM209 57h1v1h-1zM241 57h1v1h-1zM244 57h1v1h-1zM252 57h1v1h-1zM254 57h2v1h-2zM301 57h1v1h-1zM306 57h1v1h-1zM320 57h2v1h-2zM324 57h1v1h-1zM355 57h2v1h-2zM360 57h1v1h-1zM365 57h2v1h-2zM381 57h1v1h-1zM385 57h3v1h-3zM414 57h2v1h-2zM438 57h2v1h-2zM508 57h1v1h-1zM5 58h1v1h-1zM78 58h1v1h-1zM130 58h1v1h-1zM176 58h1v1h-1zM196 58h1v1h-1zM223 58h1v1h-1zM241 58h3v1h-3zM250 58h1v1h-1zM252 58h1v1h-1zM258 58h1v1h-1zM260 58h3v1h-3zM265 58h2v1h-2zM274 58h1v1h-1zM287 58h1v1h-1zM296 58h1v1h-1zM318 58h1v1h-1zM321 58h1v1h-1zM326 58h4v1h-4zM336 58h1v1h-1zM343 58h1v1h-1zM365 58h1v1h-1zM386 58h2v1h-2zM389 58h1v1h-1zM414 58h1v1h-1zM439 58h1v1h-1zM528 58h1v1h-1zM45 59h1v1h-1zM47 59h1v1h-1zM99 59h1v1h-1zM134 59h1v1h-1zM164 59h1v1h-1zM189 59h1v1h-1zM239 59h1v1h-1zM241 59h1v1h-1zM250 59h1v1h-1zM259 59h1v1h-1zM267 59h2v1h-2zM270 59h1v1h-1zM273 59h1v1h-1zM279 59h1v1h-1zM282 59h1v1h-1zM294 59h1v1h-1zM298 59h1v1h-1zM306 59h1v1h-1zM312 59h1v1h-1zM321 59h1v1h-1zM330 59h1v1h-1zM336 59h1v1h-1zM343 59h1v1h-1zM347 59h1v1h-1zM366 59h1v1h-1zM383 59h1v1h-1zM387 59h2v1h-2zM393 59h1v1h-1zM397 59h1v1h-1zM400 59h1v1h-1zM415 59h1v1h-1zM417 59h1v1h-1zM422 59h1v1h-1zM437 59h3v1h-3zM447 59h1v1h-1zM496 59h1v1h-1zM510 59h1v1h-1zM528 59h1v1h-1zM26 60h1v1h-1zM28 60h1v1h-1zM96 60h1v1h-1zM107 60h1v1h-1zM156 60h1v1h-1zM170 60h1v1h-1zM196 60h1v1h-1zM210 60h1v1h-1zM217 60h1v1h-1zM224 60h1v1h-1zM229 60h1v1h-1zM238 60h3v1h-3zM254 60h1v1h-1zM265 60h1v1h-1zM276 60h1v1h-1zM280 60h1v1h-1zM288 60h1v1h-1zM291 60h1v1h-1zM293 60h1v1h-1zM299 60h1v1h-1zM315 60h1v1h-1zM327 60h1v1h-1zM339 60h1v1h-1zM363 60h1v1h-1zM367 60h2v1h-2zM389 60h1v1h-1zM402 60h1v1h-1zM415 60h1v1h-1zM417 60h1v1h-1zM436 60h2v1h-2zM476 60h1v1h-1zM532 60h1v1h-1zM14 61h1v1h-1zM99 61h1v1h-1zM166 61h1v1h-1zM200 61h1v1h-1zM228 61h1v1h-1zM240 61h1v1h-1zM275 61h1v1h-1zM285 61h1v1h-1zM287 61h1v1h-1zM289 61h1v1h-1zM293 61h1v1h-1zM297 61h3v1h-3zM302 61h1v1h-1zM311 61h1v1h-1zM317 61h2v1h-2zM322 61h1v1h-1zM331 61h1v1h-1zM333 61h1v1h-1zM336 61h1v1h-1zM338 61h1v1h-1zM340 61h1v1h-1zM342 61h1v1h-1zM344 61h2v1h-2zM349 61h1v1h-1zM351 61h2v1h-2zM357 61h1v1h-1zM359 61h1v1h-1zM362 61h1v1h-1zM368 61h2v1h-2zM372 61h1v1h-1zM376 61h1v1h-1zM387 61h1v1h-1zM389 61h1v1h-1zM414 61h1v1h-1zM417 61h2v1h-2zM436 61h3v1h-3zM470 61h1v1h-1zM38 62h1v1h-1zM69 62h1v1h-1zM74 62h1v1h-1zM102 62h1v1h-1zM114 62h1v1h-1zM176 62h1v1h-1zM215 62h1v1h-1zM232 62h1v1h-1zM237 62h1v1h-1zM244 62h1v1h-1zM268 62h1v1h-1zM280 62h1v1h-1zM283 62h1v1h-1zM298 62h2v1h-2zM303 62h1v1h-1zM306 62h1v1h-1zM311 62h1v1h-1zM313 62h1v1h-1zM322 62h2v1h-2zM336 62h1v1h-1zM342 62h2v1h-2zM345 62h4v1h-4zM351 62h1v1h-1zM356 62h1v1h-1zM369 62h2v1h-2zM372 62h2v1h-2zM377 62h1v1h-1zM391 62h2v1h-2zM398 62h1v1h-1zM416 62h1v1h-1zM418 62h1v1h-1zM436 62h3v1h-3zM449 62h1v1h-1zM484 62h1v1h-1zM522 62h1v1h-1zM559 62h1v1h-1zM97 63h1v1h-1zM102 63h1v1h-1zM178 63h1v1h-1zM208 63h1v1h-1zM234 63h1v1h-1zM248 63h1v1h-1zM251 63h1v1h-1zM260 63h1v1h-1zM306 63h2v1h-2zM312 63h1v1h-1zM323 63h1v1h-1zM337 63h1v1h-1zM348 63h4v1h-4zM371 63h2v1h-2zM374 63h1v1h-1zM381 63h1v1h-1zM391 63h3v1h-3zM410 63h1v1h-1zM417 63h1v1h-1zM419 63h1v1h-1zM436 63h3v1h-3zM564 63h1v1h-1zM68 64h1v1h-1zM90 64h1v1h-1zM95 64h1v1h-1zM97 64h1v1h-1zM103 64h1v1h-1zM120 64h1v1h-1zM174 64h1v1h-1zM186 64h1v1h-1zM218 64h1v1h-1zM231 64h1v1h-1zM233 64h1v1h-1zM235 64h1v1h-1zM237 64h1v1h-1zM271 64h1v1h-1zM300 64h1v1h-1zM310 64h1v1h-1zM312 64h1v1h-1zM316 64h4v1h-4zM323 64h1v1h-1zM335 64h1v1h-1zM353 64h2v1h-2zM374 64h1v1h-1zM392 64h3v1h-3zM417 64h2v1h-2zM435 64h4v1h-4zM473 64h1v1h-1zM32 65h1v1h-1zM84 65h1v1h-1zM136 65h1v1h-1zM235 65h1v1h-1zM256 65h1v1h-1zM294 65h1v1h-1zM307 65h1v1h-1zM312 65h1v1h-1zM314 65h1v1h-1zM324 65h1v1h-1zM337 65h1v1h-1zM357 65h1v1h-1zM375 65h1v1h-1zM379 65h1v1h-1zM385 65h1v1h-1zM389 65h1v1h-1zM392 65h4v1h-4zM418 65h1v1h-1zM420 65h1v1h-1zM435 65h3v1h-3zM27 66h1v1h-1zM123 66h1v1h-1zM130 66h1v1h-1zM159 66h1v1h-1zM242 66h2v1h-2zM261 66h2v1h-2zM264 66h1v1h-1zM286 66h1v1h-1zM308 66h1v1h-1zM312 66h1v1h-1zM315 66h1v1h-1zM320 66h2v1h-2zM323 66h2v1h-2zM327 66h1v1h-1zM336 66h1v1h-1zM342 66h1v1h-1zM347 66h1v1h-1zM356 66h1v1h-1zM362 66h2v1h-2zM375 66h2v1h-2zM394 66h3v1h-3zM419 66h1v1h-1zM437 66h1v1h-1zM73 67h1v1h-1zM76 67h1v1h-1zM89 67h1v1h-1zM170 67h1v1h-1zM244 67h1v1h-1zM262 67h1v1h-1zM267 67h8v1h-8zM276 67h3v1h-3zM280 67h4v1h-4zM295 67h1v1h-1zM301 67h1v1h-1zM308 67h2v1h-2zM314 67h1v1h-1zM316 67h2v1h-2zM325 67h1v1h-1zM328 67h2v1h-2zM331 67h1v1h-1zM335 67h2v1h-2zM338 67h1v1h-1zM348 67h1v1h-1zM359 67h1v1h-1zM364 67h3v1h-3zM376 67h1v1h-1zM378 67h1v1h-1zM386 67h1v1h-1zM394 67h1v1h-1zM396 67h1v1h-1zM434 67h1v1h-1zM437 67h1v1h-1zM478 67h1v1h-1zM58 68h1v1h-1zM115 68h1v1h-1zM139 68h1v1h-1zM177 68h1v1h-1zM181 68h1v1h-1zM190 68h1v1h-1zM217 68h1v1h-1zM285 68h1v1h-1zM292 68h1v1h-1zM294 68h2v1h-2zM301 68h2v1h-2zM325 68h2v1h-2zM329 68h1v1h-1zM334 68h1v1h-1zM344 68h2v1h-2zM348 68h1v1h-1zM368 68h1v1h-1zM376 68h3v1h-3zM389 68h1v1h-1zM395 68h1v1h-1zM397 68h1v1h-1zM407 68h1v1h-1zM419 68h1v1h-1zM429 68h1v1h-1zM435 68h2v1h-2zM56 69h1v1h-1zM151 69h1v1h-1zM187 69h1v1h-1zM241 69h1v1h-1zM256 69h1v1h-1zM266 69h2v1h-2zM269 69h1v1h-1zM280 69h1v1h-1zM288 69h1v1h-1zM299 69h2v1h-2zM302 69h2v1h-2zM309 69h1v1h-1zM314 69h1v1h-1zM326 69h1v1h-1zM331 69h2v1h-2zM337 69h2v1h-2zM340 69h2v1h-2zM360 69h1v1h-1zM374 69h1v1h-1zM379 69h1v1h-1zM395 69h4v1h-4zM420 69h1v1h-1zM435 69h1v1h-1zM457 69h1v1h-1zM505 69h1v1h-1zM3 70h1v1h-1zM22 70h1v1h-1zM57 70h1v1h-1zM114 70h1v1h-1zM127 70h1v1h-1zM153 70h1v1h-1zM168 70h1v1h-1zM171 70h1v1h-1zM207 70h1v1h-1zM248 70h1v1h-1zM256 70h1v1h-1zM261 70h1v1h-1zM268 70h1v1h-1zM295 70h1v1h-1zM297 70h1v1h-1zM302 70h1v1h-1zM305 70h3v1h-3zM310 70h1v1h-1zM325 70h1v1h-1zM337 70h1v1h-1zM341 70h1v1h-1zM344 70h1v1h-1zM354 70h1v1h-1zM360 70h1v1h-1zM378 70h2v1h-2zM382 70h1v1h-1zM386 70h1v1h-1zM396 70h4v1h-4zM420 70h2v1h-2zM434 70h3v1h-3zM455 70h1v1h-1zM490 70h1v1h-1zM111 71h1v1h-1zM149 71h1v1h-1zM185 71h1v1h-1zM188 71h1v1h-1zM221 71h1v1h-1zM229 71h1v1h-1zM236 71h1v1h-1zM251 71h1v1h-1zM258 71h1v1h-1zM274 71h1v1h-1zM303 71h2v1h-2zM309 71h1v1h-1zM314 71h1v1h-1zM345 71h2v1h-2zM348 71h2v1h-2zM365 71h1v1h-1zM379 71h1v1h-1zM381 71h1v1h-1zM397 71h3v1h-3zM409 71h1v1h-1zM411 71h1v1h-1zM420 71h1v1h-1zM433 71h3v1h-3zM457 71h1v1h-1zM47 72h1v1h-1zM120 72h1v1h-1zM173 72h1v1h-1zM197 72h1v1h-1zM274 72h1v1h-1zM288 72h1v1h-1zM293 72h1v1h-1zM303 72h1v1h-1zM312 72h1v1h-1zM315 72h1v1h-1zM317 72h2v1h-2zM328 72h1v1h-1zM338 72h1v1h-1zM341 72h1v1h-1zM360 72h2v1h-2zM380 72h1v1h-1zM398 72h3v1h-3zM417 72h1v1h-1zM428 72h1v1h-1zM432 72h2v1h-2zM435 72h1v1h-1zM60 73h1v1h-1zM204 73h1v1h-1zM267 73h1v1h-1zM271 73h1v1h-1zM291 73h1v1h-1zM295 73h1v1h-1zM315 73h1v1h-1zM321 73h1v1h-1zM326 73h1v1h-1zM332 73h1v1h-1zM356 73h1v1h-1zM362 73h1v1h-1zM374 73h1v1h-1zM380 73h1v1h-1zM382 73h2v1h-2zM386 73h1v1h-1zM398 73h3v1h-3zM433 73h2v1h-2zM452 73h1v1h-1zM73 74h1v1h-1zM128 74h2v1h-2zM136 74h1v1h-1zM147 74h1v1h-1zM232 74h1v1h-1zM262 74h1v1h-1zM264 74h1v1h-1zM283 74h1v1h-1zM291 74h1v1h-1zM307 74h1v1h-1zM312 74h3v1h-3zM319 74h1v1h-1zM323 74h2v1h-2zM326 74h2v1h-2zM331 74h2v1h-2zM337 74h1v1h-1zM342 74h1v1h-1zM346 74h1v1h-1zM349 74h1v1h-1zM358 74h4v1h-4zM363 74h1v1h-1zM367 74h1v1h-1zM384 74h1v1h-1zM394 74h1v1h-1zM399 74h3v1h-3zM421 74h1v1h-1zM431 74h3v1h-3zM470 74h1v1h-1zM481 74h1v1h-1zM561 74h1v1h-1zM92 75h1v1h-1zM133 75h1v1h-1zM154 75h1v1h-1zM196 75h1v1h-1zM215 75h2v1h-2zM221 75h1v1h-1zM258 75h4v1h-4zM264 75h1v1h-1zM268 75h1v1h-1zM276 75h1v1h-1zM282 75h1v1h-1zM298 75h1v1h-1zM304 75h1v1h-1zM314 75h1v1h-1zM328 75h2v1h-2zM333 75h1v1h-1zM339 75h1v1h-1zM341 75h1v1h-1zM344 75h1v1h-1zM351 75h1v1h-1zM360 75h2v1h-2zM363 75h2v1h-2zM378 75h1v1h-1zM384 75h2v1h-2zM394 75h1v1h-1zM399 75h2v1h-2zM402 75h1v1h-1zM404 75h1v1h-1zM423 75h1v1h-1zM430 75h4v1h-4zM446 75h1v1h-1zM518 75h1v1h-1zM93 76h1v1h-1zM105 76h1v1h-1zM159 76h1v1h-1zM168 76h1v1h-1zM196 76h1v1h-1zM200 76h1v1h-1zM223 76h1v1h-1zM225 76h2v1h-2zM258 76h1v1h-1zM269 76h1v1h-1zM275 76h2v1h-2zM282 76h1v1h-1zM307 76h1v1h-1zM314 76h3v1h-3zM328 76h1v1h-1zM334 76h1v1h-1zM342 76h2v1h-2zM352 76h1v1h-1zM366 76h1v1h-1zM383 76h1v1h-1zM400 76h4v1h-4zM422 76h2v1h-2zM426 76h1v1h-1zM430 76h1v1h-1zM432 76h1v1h-1zM440 76h1v1h-1zM504 76h1v1h-1zM16 77h1v1h-1zM163 77h1v1h-1zM204 77h1v1h-1zM286 77h2v1h-2zM291 77h3v1h-3zM304 77h1v1h-1zM320 77h1v1h-1zM333 77h1v1h-1zM337 77h2v1h-2zM341 77h1v1h-1zM344 77h1v1h-1zM376 77h1v1h-1zM384 77h1v1h-1zM401 77h1v1h-1zM403 77h1v1h-1zM411 77h1v1h-1zM417 77h1v1h-1zM421 77h1v1h-1zM423 77h1v1h-1zM428 77h1v1h-1zM430 77h2v1h-2zM436 77h1v1h-1zM442 77h1v1h-1zM502 77h1v1h-1zM517 77h1v1h-1zM549 77h1v1h-1zM11 78h1v1h-1zM97 78h1v1h-1zM228 78h1v1h-1zM271 78h1v1h-1zM282 78h1v1h-1zM296 78h1v1h-1zM298 78h2v1h-2zM303 78h1v1h-1zM311 78h1v1h-1zM315 78h1v1h-1zM318 78h1v1h-1zM332 78h1v1h-1zM338 78h2v1h-2zM342 78h1v1h-1zM344 78h1v1h-1zM352 78h1v1h-1zM362 78h2v1h-2zM368 78h1v1h-1zM375 78h1v1h-1zM396 78h1v1h-1zM401 78h4v1h-4zM428 78h3v1h-3zM438 78h1v1h-1zM465 78h1v1h-1zM41 79h1v1h-1zM46 79h1v1h-1zM86 79h1v1h-1zM95 79h1v1h-1zM159 79h1v1h-1zM197 79h1v1h-1zM200 79h1v1h-1zM235 79h1v1h-1zM241 79h1v1h-1zM277 79h1v1h-1zM303 79h3v1h-3zM307 79h3v1h-3zM324 79h1v1h-1zM344 79h1v1h-1zM353 79h1v1h-1zM356 79h1v1h-1zM375 79h1v1h-1zM385 79h3v1h-3zM402 79h2v1h-2zM405 79h1v1h-1zM416 79h1v1h-1zM427 79h1v1h-1zM429 79h1v1h-1zM433 79h2v1h-2zM122 80h1v1h-1zM125 80h1v1h-1zM130 80h1v1h-1zM160 80h1v1h-1zM189 80h1v1h-1zM239 80h1v1h-1zM287 80h1v1h-1zM295 80h1v1h-1zM305 80h1v1h-1zM310 80h1v1h-1zM312 80h1v1h-1zM314 80h1v1h-1zM316 80h1v1h-1zM339 80h1v1h-1zM344 80h1v1h-1zM346 80h1v1h-1zM349 80h2v1h-2zM353 80h1v1h-1zM357 80h1v1h-1zM386 80h1v1h-1zM388 80h1v1h-1zM403 80h1v1h-1zM405 80h1v1h-1zM422 80h1v1h-1zM426 80h3v1h-3zM436 80h1v1h-1zM493 80h1v1h-1zM13 81h1v1h-1zM154 81h1v1h-1zM166 81h2v1h-2zM207 81h1v1h-1zM222 81h1v1h-1zM242 81h1v1h-1zM250 81h1v1h-1zM253 81h1v1h-1zM260 81h1v1h-1zM306 81h2v1h-2zM311 81h1v1h-1zM316 81h1v1h-1zM318 81h1v1h-1zM321 81h1v1h-1zM332 81h1v1h-1zM352 81h1v1h-1zM357 81h1v1h-1zM363 81h1v1h-1zM369 81h1v1h-1zM382 81h1v1h-1zM386 81h1v1h-1zM388 81h1v1h-1zM399 81h1v1h-1zM403 81h3v1h-3zM421 81h2v1h-2zM425 81h1v1h-1zM427 81h1v1h-1zM452 81h1v1h-1zM487 81h1v1h-1zM562 81h1v1h-1zM30 82h1v1h-1zM66 82h1v1h-1zM163 82h1v1h-1zM182 82h1v1h-1zM234 82h1v1h-1zM252 82h1v1h-1zM282 82h1v1h-1zM298 82h1v1h-1zM301 82h1v1h-1zM317 82h1v1h-1zM320 82h1v1h-1zM322 82h1v1h-1zM326 82h1v1h-1zM328 82h1v1h-1zM333 82h1v1h-1zM346 82h1v1h-1zM354 82h1v1h-1zM358 82h1v1h-1zM363 82h1v1h-1zM387 82h1v1h-1zM389 82h1v1h-1zM400 82h1v1h-1zM403 82h3v1h-3zM420 82h1v1h-1zM424 82h3v1h-3zM431 82h1v1h-1zM468 82h1v1h-1zM91 83h1v1h-1zM138 83h1v1h-1zM174 83h1v1h-1zM178 83h1v1h-1zM221 83h1v1h-1zM245 83h1v1h-1zM253 83h1v1h-1zM263 83h1v1h-1zM279 83h1v1h-1zM284 83h1v1h-1zM306 83h1v1h-1zM317 83h1v1h-1zM324 83h1v1h-1zM326 83h2v1h-2zM330 83h1v1h-1zM338 83h1v1h-1zM354 83h1v1h-1zM357 83h3v1h-3zM364 83h1v1h-1zM366 83h1v1h-1zM388 83h1v1h-1zM390 83h1v1h-1zM405 83h2v1h-2zM421 83h1v1h-1zM424 83h2v1h-2zM437 83h1v1h-1zM49 84h1v1h-1zM144 84h1v1h-1zM163 84h1v1h-1zM253 84h1v1h-1zM258 84h3v1h-3zM263 84h2v1h-2zM275 84h1v1h-1zM294 84h1v1h-1zM298 84h1v1h-1zM301 84h1v1h-1zM307 84h1v1h-1zM310 84h1v1h-1zM317 84h2v1h-2zM329 84h2v1h-2zM334 84h2v1h-2zM343 84h1v1h-1zM347 84h1v1h-1zM360 84h3v1h-3zM365 84h1v1h-1zM389 84h1v1h-1zM391 84h1v1h-1zM398 84h1v1h-1zM405 84h1v1h-1zM424 84h1v1h-1zM538 84h1v1h-1zM58 85h1v1h-1zM116 85h1v1h-1zM142 85h1v1h-1zM147 85h1v1h-1zM151 85h1v1h-1zM166 85h1v1h-1zM171 85h1v1h-1zM196 85h1v1h-1zM218 85h1v1h-1zM221 85h1v1h-1zM248 85h1v1h-1zM258 85h1v1h-1zM270 85h1v1h-1zM278 85h1v1h-1zM280 85h2v1h-2zM295 85h1v1h-1zM319 85h1v1h-1zM325 85h1v1h-1zM336 85h1v1h-1zM348 85h1v1h-1zM355 85h1v1h-1zM358 85h1v1h-1zM364 85h2v1h-2zM375 85h1v1h-1zM391 85h1v1h-1zM398 85h1v1h-1zM405 85h3v1h-3zM420 85h2v1h-2zM442 85h1v1h-1zM470 85h1v1h-1zM546 85h1v1h-1zM128 86h1v1h-1zM186 86h1v1h-1zM211 86h1v1h-1zM250 86h1v1h-1zM284 86h1v1h-1zM288 86h1v1h-1zM290 86h1v1h-1zM293 86h1v1h-1zM317 86h1v1h-1zM319 86h1v1h-1zM323 86h1v1h-1zM331 86h1v1h-1zM335 86h1v1h-1zM337 86h1v1h-1zM339 86h2v1h-2zM343 86h1v1h-1zM348 86h2v1h-2zM355 86h1v1h-1zM366 86h1v1h-1zM383 86h1v1h-1zM390 86h1v1h-1zM406 86h3v1h-3zM415 86h1v1h-1zM419 86h2v1h-2zM461 86h1v1h-1zM463 86h1v1h-1zM490 86h1v1h-1zM507 86h1v1h-1zM81 87h1v1h-1zM118 87h1v1h-1zM202 87h1v1h-1zM267 87h1v1h-1zM286 87h1v1h-1zM289 87h1v1h-1zM293 87h1v1h-1zM295 87h1v1h-1zM299 87h2v1h-2zM303 87h1v1h-1zM307 87h1v1h-1zM312 87h1v1h-1zM316 87h1v1h-1zM319 87h2v1h-2zM323 87h1v1h-1zM331 87h2v1h-2zM338 87h1v1h-1zM341 87h4v1h-4zM348 87h1v1h-1zM367 87h1v1h-1zM392 87h1v1h-1zM406 87h2v1h-2zM414 87h1v1h-1zM432 87h1v1h-1zM82 88h1v1h-1zM189 88h1v1h-1zM210 88h1v1h-1zM260 88h1v1h-1zM273 88h1v1h-1zM289 88h1v1h-1zM291 88h1v1h-1zM305 88h2v1h-2zM308 88h1v1h-1zM314 88h1v1h-1zM318 88h4v1h-4zM336 88h1v1h-1zM345 88h1v1h-1zM367 88h2v1h-2zM388 88h1v1h-1zM392 88h1v1h-1zM403 88h1v1h-1zM407 88h3v1h-3zM420 88h1v1h-1zM423 88h1v1h-1zM426 88h1v1h-1zM451 88h2v1h-2zM42 89h1v1h-1zM90 89h1v1h-1zM113 89h1v1h-1zM148 89h1v1h-1zM175 89h1v1h-1zM181 89h1v1h-1zM204 89h1v1h-1zM226 89h1v1h-1zM242 89h1v1h-1zM272 89h1v1h-1zM274 89h1v1h-1zM281 89h1v1h-1zM292 89h1v1h-1zM305 89h2v1h-2zM310 89h2v1h-2zM320 89h1v1h-1zM332 89h1v1h-1zM336 89h2v1h-2zM341 89h1v1h-1zM345 89h1v1h-1zM348 89h3v1h-3zM355 89h2v1h-2zM358 89h1v1h-1zM365 89h1v1h-1zM367 89h2v1h-2zM391 89h1v1h-1zM407 89h3v1h-3zM418 89h2v1h-2zM447 89h1v1h-1zM115 90h1v1h-1zM147 90h1v1h-1zM161 90h1v1h-1zM173 90h1v1h-1zM220 90h1v1h-1zM252 90h1v1h-1zM257 90h1v1h-1zM265 90h1v1h-1zM272 90h1v1h-1zM280 90h1v1h-1zM287 90h1v1h-1zM289 90h2v1h-2zM304 90h1v1h-1zM308 90h1v1h-1zM314 90h3v1h-3zM320 90h2v1h-2zM337 90h1v1h-1zM345 90h1v1h-1zM350 90h1v1h-1zM353 90h1v1h-1zM355 90h3v1h-3zM365 90h1v1h-1zM368 90h2v1h-2zM386 90h1v1h-1zM407 90h1v1h-1zM409 90h2v1h-2zM417 90h3v1h-3zM429 90h1v1h-1zM121 91h1v1h-1zM165 91h1v1h-1zM229 91h1v1h-1zM268 91h1v1h-1zM281 91h1v1h-1zM297 91h1v1h-1zM309 91h1v1h-1zM311 91h1v1h-1zM318 91h1v1h-1zM321 91h3v1h-3zM327 91h1v1h-1zM338 91h1v1h-1zM345 91h1v1h-1zM350 91h1v1h-1zM355 91h1v1h-1zM357 91h1v1h-1zM359 91h2v1h-2zM366 91h1v1h-1zM378 91h1v1h-1zM393 91h1v1h-1zM397 91h1v1h-1zM408 91h3v1h-3zM417 91h2v1h-2zM432 91h1v1h-1zM471 91h1v1h-1zM76 92h1v1h-1zM212 92h1v1h-1zM225 92h1v1h-1zM260 92h1v1h-1zM283 92h1v1h-1zM285 92h2v1h-2zM293 92h1v1h-1zM298 92h1v1h-1zM300 92h1v1h-1zM314 92h1v1h-1zM320 92h1v1h-1zM322 92h1v1h-1zM326 92h4v1h-4zM333 92h2v1h-2zM338 92h1v1h-1zM351 92h1v1h-1zM357 92h1v1h-1zM360 92h3v1h-3zM367 92h1v1h-1zM369 92h1v1h-1zM375 92h1v1h-1zM377 92h1v1h-1zM393 92h1v1h-1zM396 92h1v1h-1zM403 92h1v1h-1zM406 92h1v1h-1zM408 92h3v1h-3zM413 92h1v1h-1zM418 92h1v1h-1zM422 92h1v1h-1zM478 92h1v1h-1zM490 92h1v1h-1zM61 93h1v1h-1zM69 93h1v1h-1zM161 93h1v1h-1zM213 93h1v1h-1zM246 93h1v1h-1zM255 93h1v1h-1zM271 93h1v1h-1zM279 93h1v1h-1zM289 93h1v1h-1zM292 93h1v1h-1zM295 93h1v1h-1zM316 93h1v1h-1zM321 93h1v1h-1zM333 93h1v1h-1zM336 93h1v1h-1zM338 93h1v1h-1zM351 93h1v1h-1zM357 93h1v1h-1zM366 93h1v1h-1zM370 93h1v1h-1zM394 93h1v1h-1zM405 93h2v1h-2zM408 93h1v1h-1zM410 93h2v1h-2zM435 93h1v1h-1zM443 93h1v1h-1zM517 93h1v1h-1zM29 94h1v1h-1zM181 94h1v1h-1zM196 94h1v1h-1zM201 94h1v1h-1zM209 94h1v1h-1zM227 94h1v1h-1zM239 94h1v1h-1zM245 94h1v1h-1zM285 94h1v1h-1zM298 94h1v1h-1zM310 94h1v1h-1zM314 94h1v1h-1zM322 94h1v1h-1zM333 94h2v1h-2zM351 94h1v1h-1zM354 94h1v1h-1zM358 94h1v1h-1zM363 94h1v1h-1zM368 94h1v1h-1zM377 94h1v1h-1zM379 94h1v1h-1zM394 94h1v1h-1zM406 94h1v1h-1zM409 94h3v1h-3zM415 94h1v1h-1zM495 94h1v1h-1zM66 95h1v1h-1zM141 95h1v1h-1zM166 95h1v1h-1zM178 95h1v1h-1zM188 95h1v1h-1zM202 95h1v1h-1zM206 95h1v1h-1zM239 95h1v1h-1zM242 95h1v1h-1zM264 95h1v1h-1zM266 95h1v1h-1zM268 95h2v1h-2zM271 95h2v1h-2zM292 95h1v1h-1zM302 95h1v1h-1zM320 95h1v1h-1zM322 95h1v1h-1zM333 95h1v1h-1zM339 95h1v1h-1zM341 95h2v1h-2zM345 95h1v1h-1zM352 95h1v1h-1zM358 95h1v1h-1zM369 95h2v1h-2zM391 95h1v1h-1zM393 95h4v1h-4zM407 95h1v1h-1zM409 95h3v1h-3zM416 95h1v1h-1zM427 95h1v1h-1zM443 95h1v1h-1zM512 95h1v1h-1zM542 95h1v1h-1zM151 96h1v1h-1zM174 96h1v1h-1zM190 96h1v1h-1zM217 96h1v1h-1zM242 96h2v1h-2zM251 96h1v1h-1zM263 96h1v1h-1zM306 96h1v1h-1zM310 96h2v1h-2zM318 96h1v1h-1zM325 96h1v1h-1zM330 96h1v1h-1zM337 96h1v1h-1zM339 96h2v1h-2zM342 96h3v1h-3zM346 96h1v1h-1zM356 96h1v1h-1zM369 96h2v1h-2zM375 96h1v1h-1zM395 96h1v1h-1zM397 96h1v1h-1zM409 96h3v1h-3zM465 96h1v1h-1zM542 96h1v1h-1zM35 97h1v1h-1zM58 97h1v1h-1zM90 97h1v1h-1zM139 97h1v1h-1zM141 97h1v1h-1zM224 97h1v1h-1zM247 97h1v1h-1zM260 97h1v1h-1zM263 97h2v1h-2zM266 97h1v1h-1zM269 97h1v1h-1zM296 97h1v1h-1zM322 97h1v1h-1zM324 97h1v1h-1zM346 97h3v1h-3zM351 97h1v1h-1zM363 97h1v1h-1zM370 97h2v1h-2zM375 97h1v1h-1zM378 97h1v1h-1zM382 97h1v1h-1zM395 97h1v1h-1zM409 97h4v1h-4zM459 97h1v1h-1zM498 97h1v1h-1zM545 97h1v1h-1zM12 98h1v1h-1zM40 98h1v1h-1zM134 98h1v1h-1zM180 98h1v1h-1zM249 98h1v1h-1zM261 98h2v1h-2zM264 98h2v1h-2zM267 98h3v1h-3zM272 98h3v1h-3zM288 98h1v1h-1zM311 98h1v1h-1zM313 98h1v1h-1zM326 98h1v1h-1zM344 98h1v1h-1zM351 98h3v1h-3zM355 98h1v1h-1zM371 98h2v1h-2zM376 98h1v1h-1zM378 98h1v1h-1zM396 98h2v1h-2zM410 98h4v1h-4zM444 98h1v1h-1zM447 98h1v1h-1zM23 99h1v1h-1zM36 99h1v1h-1zM88 99h1v1h-1zM127 99h1v1h-1zM149 99h1v1h-1zM246 99h1v1h-1zM265 99h3v1h-3zM270 99h1v1h-1zM275 99h1v1h-1zM277 99h1v1h-1zM311 99h1v1h-1zM323 99h1v1h-1zM334 99h1v1h-1zM353 99h1v1h-1zM359 99h1v1h-1zM371 99h1v1h-1zM373 99h1v1h-1zM378 99h1v1h-1zM396 99h3v1h-3zM402 99h1v1h-1zM412 99h3v1h-3zM450 99h1v1h-1zM553 99h1v1h-1zM121 100h1v1h-1zM214 100h1v1h-1zM232 100h1v1h-1zM259 100h1v1h-1zM268 100h2v1h-2zM273 100h1v1h-1zM276 100h2v1h-2zM290 100h1v1h-1zM308 100h1v1h-1zM311 100h1v1h-1zM323 100h1v1h-1zM352 100h1v1h-1zM358 100h1v1h-1zM360 100h1v1h-1zM369 100h1v1h-1zM371 100h1v1h-1zM376 100h1v1h-1zM379 100h1v1h-1zM381 100h1v1h-1zM403 100h1v1h-1zM411 100h3v1h-3zM415 100h2v1h-2zM427 100h1v1h-1zM439 100h1v1h-1zM557 100h1v1h-1zM27 101h1v1h-1zM146 101h2v1h-2zM188 101h1v1h-1zM197 101h1v1h-1zM216 101h1v1h-1zM233 101h1v1h-1zM274 101h2v1h-2zM277 101h1v1h-1zM279 101h2v1h-2zM282 101h2v1h-2zM303 101h1v1h-1zM310 101h1v1h-1zM318 101h1v1h-1zM321 101h3v1h-3zM328 101h1v1h-1zM335 101h1v1h-1zM337 101h1v1h-1zM339 101h1v1h-1zM345 101h1v1h-1zM348 101h1v1h-1zM359 101h2v1h-2zM364 101h1v1h-1zM372 101h1v1h-1zM378 101h1v1h-1zM383 101h1v1h-1zM411 101h3v1h-3zM415 101h1v1h-1zM510 101h1v1h-1zM40 102h1v1h-1zM105 102h1v1h-1zM112 102h1v1h-1zM114 102h1v1h-1zM128 102h1v1h-1zM169 102h1v1h-1zM202 102h1v1h-1zM206 102h1v1h-1zM211 102h1v1h-1zM246 102h1v1h-1zM248 102h1v1h-1zM257 102h1v1h-1zM261 102h2v1h-2zM266 102h1v1h-1zM279 102h2v1h-2zM284 102h1v1h-1zM288 102h2v1h-2zM291 102h1v1h-1zM309 102h1v1h-1zM323 102h2v1h-2zM326 102h1v1h-1zM333 102h1v1h-1zM336 102h1v1h-1zM341 102h1v1h-1zM353 102h2v1h-2zM365 102h1v1h-1zM373 102h2v1h-2zM376 102h2v1h-2zM385 102h1v1h-1zM403 102h1v1h-1zM411 102h3v1h-3zM416 102h3v1h-3zM425 102h2v1h-2zM133 103h1v1h-1zM222 103h1v1h-1zM241 103h1v1h-1zM283 103h2v1h-2zM286 103h2v1h-2zM292 103h2v1h-2zM295 103h1v1h-1zM301 103h1v1h-1zM326 103h1v1h-1zM374 103h1v1h-1zM379 103h2v1h-2zM397 103h1v1h-1zM412 103h1v1h-1zM414 103h1v1h-1zM416 103h1v1h-1zM419 103h1v1h-1zM456 103h1v1h-1zM81 104h1v1h-1zM149 104h1v1h-1zM200 104h1v1h-1zM216 104h1v1h-1zM234 104h1v1h-1zM285 104h1v1h-1zM287 104h1v1h-1zM290 104h1v1h-1zM292 104h2v1h-2zM295 104h2v1h-2zM298 104h1v1h-1zM302 104h1v1h-1zM312 104h1v1h-1zM324 104h1v1h-1zM334 104h1v1h-1zM350 104h2v1h-2zM354 104h1v1h-1zM379 104h1v1h-1zM381 104h1v1h-1zM408 104h1v1h-1zM412 104h3v1h-3zM418 104h3v1h-3zM439 104h1v1h-1zM65 105h1v1h-1zM176 105h1v1h-1zM180 105h1v1h-1zM183 105h1v1h-1zM213 105h1v1h-1zM215 105h1v1h-1zM230 105h1v1h-1zM273 105h1v1h-1zM282 105h1v1h-1zM295 105h1v1h-1zM297 105h3v1h-3zM301 105h3v1h-3zM324 105h1v1h-1zM327 105h2v1h-2zM332 105h1v1h-1zM337 105h1v1h-1zM343 105h2v1h-2zM348 105h1v1h-1zM355 105h1v1h-1zM360 105h1v1h-1zM366 105h1v1h-1zM371 105h2v1h-2zM377 105h1v1h-1zM379 105h1v1h-1zM402 105h1v1h-1zM407 105h1v1h-1zM413 105h2v1h-2zM420 105h2v1h-2zM219 106h1v1h-1zM245 106h1v1h-1zM267 106h1v1h-1zM269 106h1v1h-1zM276 106h1v1h-1zM282 106h2v1h-2zM296 106h1v1h-1zM298 106h1v1h-1zM301 106h2v1h-2zM304 106h4v1h-4zM313 106h1v1h-1zM323 106h1v1h-1zM325 106h1v1h-1zM327 106h1v1h-1zM333 106h1v1h-1zM337 106h4v1h-4zM342 106h1v1h-1zM349 106h1v1h-1zM351 106h1v1h-1zM355 106h1v1h-1zM358 106h1v1h-1zM361 106h1v1h-1zM373 106h1v1h-1zM391 106h1v1h-1zM407 106h1v1h-1zM412 106h3v1h-3zM419 106h1v1h-1zM421 106h1v1h-1zM28 107h1v1h-1zM132 107h1v1h-1zM142 107h1v1h-1zM156 107h1v1h-1zM213 107h1v1h-1zM231 107h1v1h-1zM250 107h1v1h-1zM256 107h1v1h-1zM258 107h1v1h-1zM273 107h1v1h-1zM290 107h1v1h-1zM301 107h1v1h-1zM304 107h1v1h-1zM309 107h1v1h-1zM312 107h1v1h-1zM314 107h1v1h-1zM325 107h1v1h-1zM337 107h1v1h-1zM343 107h1v1h-1zM345 107h1v1h-1zM347 107h1v1h-1zM361 107h1v1h-1zM365 107h1v1h-1zM372 107h1v1h-1zM376 107h1v1h-1zM380 107h1v1h-1zM382 107h1v1h-1zM391 107h1v1h-1zM413 107h3v1h-3zM422 107h2v1h-2zM498 107h1v1h-1zM560 107h1v1h-1zM3 108h1v1h-1zM82 108h1v1h-1zM166 108h1v1h-1zM211 108h1v1h-1zM215 108h1v1h-1zM255 108h1v1h-1zM262 108h1v1h-1zM275 108h1v1h-1zM293 108h1v1h-1zM305 108h1v1h-1zM307 108h1v1h-1zM313 108h1v1h-1zM320 108h2v1h-2zM325 108h1v1h-1zM329 108h1v1h-1zM337 108h1v1h-1zM341 108h1v1h-1zM349 108h1v1h-1zM364 108h1v1h-1zM371 108h1v1h-1zM373 108h1v1h-1zM382 108h2v1h-2zM413 108h3v1h-3zM422 108h1v1h-1zM426 108h1v1h-1zM487 108h1v1h-1zM5 109h1v1h-1zM18 109h1v1h-1zM66 109h1v1h-1zM258 109h1v1h-1zM267 109h1v1h-1zM280 109h1v1h-1zM282 109h1v1h-1zM293 109h1v1h-1zM299 109h1v1h-1zM306 109h1v1h-1zM309 109h1v1h-1zM311 109h6v1h-6zM318 109h1v1h-1zM328 109h1v1h-1zM330 109h1v1h-1zM343 109h2v1h-2zM349 109h1v1h-1zM355 109h1v1h-1zM361 109h1v1h-1zM373 109h1v1h-1zM381 109h1v1h-1zM383 109h1v1h-1zM413 109h3v1h-3zM423 109h2v1h-2zM464 109h1v1h-1zM73 110h1v1h-1zM150 110h1v1h-1zM160 110h1v1h-1zM179 110h1v1h-1zM203 110h1v1h-1zM219 110h1v1h-1zM259 110h1v1h-1zM262 110h1v1h-1zM284 110h1v1h-1zM303 110h3v1h-3zM312 110h1v1h-1zM316 110h1v1h-1zM320 110h1v1h-1zM329 110h1v1h-1zM337 110h1v1h-1zM339 110h2v1h-2zM343 110h1v1h-1zM361 110h1v1h-1zM365 110h1v1h-1zM377 110h1v1h-1zM389 110h1v1h-1zM413 110h2v1h-2zM416 110h1v1h-1zM424 110h4v1h-4zM17 111h1v1h-1zM133 111h1v1h-1zM162 111h1v1h-1zM174 111h1v1h-1zM210 111h1v1h-1zM214 111h1v1h-1zM216 111h1v1h-1zM226 111h1v1h-1zM241 111h1v1h-1zM271 111h1v1h-1zM274 111h1v1h-1zM280 111h1v1h-1zM295 111h1v1h-1zM309 111h1v1h-1zM311 111h2v1h-2zM314 111h3v1h-3zM318 111h2v1h-2zM321 111h2v1h-2zM324 111h1v1h-1zM328 111h1v1h-1zM350 111h1v1h-1zM369 111h1v1h-1zM374 111h1v1h-1zM384 111h1v1h-1zM416 111h1v1h-1zM426 111h1v1h-1zM459 111h1v1h-1zM510 111h1v1h-1zM1 112h1v1h-1zM35 112h1v1h-1zM51 112h1v1h-1zM198 112h1v1h-1zM218 112h1v1h-1zM228 112h1v1h-1zM238 112h1v1h-1zM294 112h1v1h-1zM309 112h1v1h-1zM317 112h1v1h-1zM320 112h1v1h-1zM322 112h1v1h-1zM324 112h4v1h-4zM343 112h1v1h-1zM350 112h1v1h-1zM356 112h1v1h-1zM362 112h1v1h-1zM364 112h1v1h-1zM374 112h1v1h-1zM377 112h1v1h-1zM382 112h2v1h-2zM385 112h1v1h-1zM414 112h1v1h-1zM426 112h1v1h-1zM428 112h1v1h-1zM456 112h1v1h-1zM465 112h1v1h-1zM484 112h1v1h-1zM82 113h1v1h-1zM200 113h2v1h-2zM217 113h1v1h-1zM225 113h1v1h-1zM238 113h1v1h-1zM242 113h1v1h-1zM244 113h1v1h-1zM270 113h1v1h-1zM272 113h1v1h-1zM284 113h1v1h-1zM300 113h1v1h-1zM303 113h1v1h-1zM311 113h1v1h-1zM322 113h1v1h-1zM324 113h1v1h-1zM328 113h2v1h-2zM345 113h1v1h-1zM356 113h3v1h-3zM360 113h1v1h-1zM364 113h1v1h-1zM371 113h1v1h-1zM374 113h1v1h-1zM379 113h1v1h-1zM385 113h1v1h-1zM404 113h1v1h-1zM411 113h1v1h-1zM416 113h1v1h-1zM425 113h1v1h-1zM430 113h1v1h-1zM496 113h1v1h-1zM518 113h1v1h-1zM1 114h1v1h-1zM95 114h1v1h-1zM171 114h1v1h-1zM208 114h1v1h-1zM233 114h2v1h-2zM238 114h1v1h-1zM245 114h1v1h-1zM256 114h1v1h-1zM261 114h1v1h-1zM286 114h1v1h-1zM303 114h1v1h-1zM310 114h1v1h-1zM314 114h1v1h-1zM326 114h1v1h-1zM328 114h1v1h-1zM330 114h1v1h-1zM334 114h2v1h-2zM357 114h1v1h-1zM363 114h1v1h-1zM399 114h1v1h-1zM414 114h3v1h-3zM428 114h2v1h-2zM431 114h1v1h-1zM445 114h1v1h-1zM131 115h1v1h-1zM232 115h1v1h-1zM236 115h1v1h-1zM247 115h1v1h-1zM267 115h1v1h-1zM291 115h1v1h-1zM315 115h1v1h-1zM326 115h1v1h-1zM330 115h2v1h-2zM338 115h1v1h-1zM346 115h1v1h-1zM358 115h1v1h-1zM363 115h1v1h-1zM378 115h1v1h-1zM385 115h1v1h-1zM395 115h1v1h-1zM414 115h3v1h-3zM431 115h3v1h-3zM486 115h1v1h-1zM509 115h1v1h-1zM6 116h1v1h-1zM27 116h1v1h-1zM100 116h1v1h-1zM115 116h1v1h-1zM138 116h1v1h-1zM212 116h2v1h-2zM228 116h1v1h-1zM238 116h1v1h-1zM253 116h1v1h-1zM257 116h1v1h-1zM269 116h1v1h-1zM281 116h1v1h-1zM284 116h1v1h-1zM286 116h1v1h-1zM290 116h1v1h-1zM303 116h1v1h-1zM315 116h1v1h-1zM325 116h1v1h-1zM332 116h1v1h-1zM335 116h1v1h-1zM337 116h3v1h-3zM346 116h1v1h-1zM351 116h2v1h-2zM363 116h1v1h-1zM368 116h1v1h-1zM377 116h2v1h-2zM384 116h2v1h-2zM414 116h2v1h-2zM423 116h1v1h-1zM432 116h1v1h-1zM441 116h1v1h-1zM455 116h1v1h-1zM506 116h1v1h-1zM511 116h1v1h-1zM537 116h1v1h-1zM25 117h1v1h-1zM50 117h1v1h-1zM64 117h1v1h-1zM212 117h1v1h-1zM233 117h2v1h-2zM246 117h1v1h-1zM252 117h1v1h-1zM259 117h1v1h-1zM261 117h1v1h-1zM304 117h1v1h-1zM308 117h1v1h-1zM310 117h1v1h-1zM315 117h1v1h-1zM327 117h1v1h-1zM329 117h1v1h-1zM332 117h1v1h-1zM335 117h1v1h-1zM338 117h2v1h-2zM341 117h2v1h-2zM349 117h1v1h-1zM351 117h1v1h-1zM357 117h2v1h-2zM366 117h1v1h-1zM373 117h1v1h-1zM379 117h1v1h-1zM386 117h2v1h-2zM412 117h1v1h-1zM416 117h1v1h-1zM426 117h1v1h-1zM434 117h2v1h-2zM541 117h1v1h-1zM18 118h1v1h-1zM26 118h1v1h-1zM38 118h1v1h-1zM68 118h1v1h-1zM206 118h1v1h-1zM235 118h1v1h-1zM247 118h1v1h-1zM289 118h1v1h-1zM310 118h1v1h-1zM315 118h1v1h-1zM321 118h1v1h-1zM326 118h1v1h-1zM335 118h1v1h-1zM338 118h1v1h-1zM343 118h1v1h-1zM346 118h1v1h-1zM358 118h1v1h-1zM365 118h1v1h-1zM367 118h1v1h-1zM377 118h1v1h-1zM385 118h1v1h-1zM387 118h1v1h-1zM415 118h1v1h-1zM434 118h1v1h-1zM499 118h1v1h-1zM159 119h1v1h-1zM207 119h1v1h-1zM218 119h1v1h-1zM225 119h1v1h-1zM260 119h3v1h-3zM268 119h1v1h-1zM276 119h1v1h-1zM316 119h1v1h-1zM322 119h1v1h-1zM342 119h3v1h-3zM346 119h2v1h-2zM351 119h1v1h-1zM358 119h1v1h-1zM369 119h1v1h-1zM379 119h1v1h-1zM387 119h2v1h-2zM435 119h3v1h-3zM450 119h1v1h-1zM499 119h1v1h-1zM505 119h1v1h-1zM538 119h1v1h-1zM108 120h1v1h-1zM186 120h2v1h-2zM210 120h1v1h-1zM220 120h2v1h-2zM260 120h1v1h-1zM262 120h3v1h-3zM266 120h1v1h-1zM274 120h2v1h-2zM279 120h1v1h-1zM283 120h1v1h-1zM288 120h1v1h-1zM303 120h1v1h-1zM312 120h1v1h-1zM316 120h1v1h-1zM326 120h1v1h-1zM328 120h1v1h-1zM332 120h1v1h-1zM340 120h1v1h-1zM344 120h2v1h-2zM358 120h1v1h-1zM366 120h4v1h-4zM383 120h1v1h-1zM388 120h1v1h-1zM394 120h2v1h-2zM410 120h1v1h-1zM414 120h3v1h-3zM436 120h3v1h-3zM452 120h1v1h-1zM481 120h1v1h-1zM48 121h1v1h-1zM187 121h1v1h-1zM201 121h1v1h-1zM223 121h1v1h-1zM262 121h1v1h-1zM264 121h1v1h-1zM267 121h4v1h-4zM277 121h1v1h-1zM282 121h1v1h-1zM295 121h1v1h-1zM311 121h1v1h-1zM316 121h1v1h-1zM324 121h1v1h-1zM333 121h1v1h-1zM342 121h1v1h-1zM347 121h1v1h-1zM364 121h1v1h-1zM369 121h1v1h-1zM371 121h1v1h-1zM380 121h1v1h-1zM389 121h1v1h-1zM405 121h1v1h-1zM415 121h1v1h-1zM437 121h1v1h-1zM441 121h1v1h-1zM467 121h1v1h-1zM488 121h1v1h-1zM25 122h1v1h-1zM110 122h1v1h-1zM130 122h1v1h-1zM151 122h1v1h-1zM154 122h1v1h-1zM231 122h1v1h-1zM240 122h1v1h-1zM266 122h3v1h-3zM273 122h2v1h-2zM278 122h1v1h-1zM287 122h1v1h-1zM318 122h1v1h-1zM326 122h1v1h-1zM329 122h1v1h-1zM335 122h2v1h-2zM351 122h2v1h-2zM355 122h1v1h-1zM365 122h1v1h-1zM368 122h1v1h-1zM380 122h1v1h-1zM387 122h1v1h-1zM390 122h1v1h-1zM402 122h1v1h-1zM414 122h1v1h-1zM416 122h1v1h-1zM436 122h1v1h-1zM438 122h3v1h-3zM464 122h2v1h-2zM100 123h1v1h-1zM267 123h2v1h-2zM270 123h1v1h-1zM273 123h1v1h-1zM275 123h2v1h-2zM331 123h1v1h-1zM340 123h1v1h-1zM348 123h1v1h-1zM352 123h1v1h-1zM360 123h1v1h-1zM364 123h1v1h-1zM369 123h2v1h-2zM375 123h1v1h-1zM390 123h1v1h-1zM399 123h1v1h-1zM414 123h3v1h-3zM423 123h1v1h-1zM428 123h1v1h-1zM432 123h1v1h-1zM440 123h1v1h-1zM442 123h3v1h-3zM533 123h1v1h-1zM564 123h1v1h-1zM5 124h1v1h-1zM99 124h1v1h-1zM133 124h1v1h-1zM144 124h1v1h-1zM185 124h1v1h-1zM193 124h1v1h-1zM217 124h1v1h-1zM224 124h1v1h-1zM236 124h2v1h-2zM270 124h2v1h-2zM275 124h2v1h-2zM278 124h1v1h-1zM281 124h2v1h-2zM296 124h1v1h-1zM302 124h1v1h-1zM340 124h1v1h-1zM369 124h2v1h-2zM376 124h1v1h-1zM388 124h2v1h-2zM414 124h2v1h-2zM441 124h2v1h-2zM444 124h1v1h-1zM446 124h1v1h-1zM494 124h1v1h-1zM532 124h1v1h-1zM235 125h1v1h-1zM245 125h1v1h-1zM251 125h2v1h-2zM277 125h3v1h-3zM281 125h1v1h-1zM283 125h1v1h-1zM285 125h1v1h-1zM289 125h1v1h-1zM303 125h1v1h-1zM306 125h1v1h-1zM329 125h1v1h-1zM333 125h1v1h-1zM337 125h1v1h-1zM352 125h1v1h-1zM354 125h1v1h-1zM368 125h1v1h-1zM387 125h1v1h-1zM392 125h1v1h-1zM414 125h2v1h-2zM429 125h1v1h-1zM444 125h4v1h-4zM452 125h1v1h-1zM494 125h1v1h-1zM528 125h1v1h-1zM553 125h1v1h-1zM124 126h1v1h-1zM171 126h1v1h-1zM199 126h1v1h-1zM207 126h1v1h-1zM222 126h1v1h-1zM224 126h1v1h-1zM241 126h1v1h-1zM248 126h1v1h-1zM280 126h3v1h-3zM284 126h1v1h-1zM286 126h1v1h-1zM288 126h2v1h-2zM302 126h1v1h-1zM315 126h1v1h-1zM327 126h1v1h-1zM333 126h1v1h-1zM340 126h1v1h-1zM352 126h1v1h-1zM364 126h1v1h-1zM370 126h1v1h-1zM376 126h1v1h-1zM381 126h1v1h-1zM414 126h1v1h-1zM416 126h1v1h-1zM423 126h1v1h-1zM444 126h2v1h-2zM448 126h2v1h-2zM512 126h1v1h-1zM44 127h1v1h-1zM82 127h1v1h-1zM209 127h1v1h-1zM229 127h2v1h-2zM263 127h1v1h-1zM267 127h1v1h-1zM283 127h3v1h-3zM288 127h1v1h-1zM290 127h1v1h-1zM292 127h3v1h-3zM300 127h1v1h-1zM308 127h1v1h-1zM328 127h2v1h-2zM341 127h1v1h-1zM351 127h1v1h-1zM353 127h1v1h-1zM372 127h1v1h-1zM404 127h1v1h-1zM416 127h1v1h-1zM447 127h3v1h-3zM0 128h1v1h-1zM133 128h1v1h-1zM153 128h1v1h-1zM251 128h1v1h-1zM255 128h1v1h-1zM270 128h1v1h-1zM287 128h1v1h-1zM289 128h1v1h-1zM291 128h3v1h-3zM295 128h1v1h-1zM312 128h1v1h-1zM325 128h1v1h-1zM334 128h1v1h-1zM339 128h1v1h-1zM351 128h1v1h-1zM353 128h1v1h-1zM367 128h2v1h-2zM370 128h3v1h-3zM381 128h1v1h-1zM390 128h1v1h-1zM393 128h1v1h-1zM407 128h1v1h-1zM415 128h2v1h-2zM421 128h1v1h-1zM448 128h2v1h-2zM451 128h2v1h-2zM66 129h1v1h-1zM173 129h1v1h-1zM178 129h1v1h-1zM182 129h1v1h-1zM223 129h1v1h-1zM229 129h1v1h-1zM238 129h1v1h-1zM276 129h1v1h-1zM287 129h1v1h-1zM296 129h1v1h-1zM298 129h1v1h-1zM310 129h1v1h-1zM319 129h1v1h-1zM328 129h2v1h-2zM351 129h1v1h-1zM365 129h1v1h-1zM377 129h1v1h-1zM394 129h1v1h-1zM415 129h1v1h-1zM447 129h1v1h-1zM451 129h2v1h-2zM454 129h1v1h-1zM478 129h1v1h-1zM66 130h1v1h-1zM68 130h1v1h-1zM71 130h1v1h-1zM137 130h1v1h-1zM140 130h1v1h-1zM221 130h1v1h-1zM229 130h1v1h-1zM287 130h1v1h-1zM289 130h2v1h-2zM294 130h4v1h-4zM302 130h1v1h-1zM304 130h1v1h-1zM317 130h1v1h-1zM320 130h1v1h-1zM336 130h2v1h-2zM349 130h1v1h-1zM371 130h1v1h-1zM373 130h1v1h-1zM388 130h1v1h-1zM403 130h1v1h-1zM414 130h3v1h-3zM440 130h1v1h-1zM451 130h2v1h-2zM455 130h2v1h-2zM461 130h1v1h-1zM55 131h1v1h-1zM165 131h1v1h-1zM185 131h1v1h-1zM212 131h1v1h-1zM218 131h2v1h-2zM223 131h1v1h-1zM253 131h1v1h-1zM267 131h1v1h-1zM286 131h1v1h-1zM293 131h1v1h-1zM300 131h1v1h-1zM302 131h1v1h-1zM305 131h2v1h-2zM317 131h1v1h-1zM328 131h1v1h-1zM341 131h1v1h-1zM352 131h1v1h-1zM365 131h1v1h-1zM373 131h2v1h-2zM377 131h1v1h-1zM392 131h2v1h-2zM414 131h1v1h-1zM416 131h1v1h-1zM447 131h1v1h-1zM453 131h5v1h-5zM132 132h1v1h-1zM255 132h1v1h-1zM261 132h1v1h-1zM272 132h1v1h-1zM284 132h1v1h-1zM293 132h1v1h-1zM303 132h1v1h-1zM310 132h1v1h-1zM317 132h1v1h-1zM341 132h1v1h-1zM353 132h1v1h-1zM368 132h1v1h-1zM372 132h2v1h-2zM394 132h2v1h-2zM407 132h2v1h-2zM414 132h1v1h-1zM454 132h5v1h-5zM42 133h1v1h-1zM64 133h1v1h-1zM259 133h3v1h-3zM268 133h1v1h-1zM270 133h1v1h-1zM273 133h1v1h-1zM289 133h1v1h-1zM296 133h1v1h-1zM300 133h1v1h-1zM306 133h1v1h-1zM313 133h1v1h-1zM315 133h1v1h-1zM317 133h1v1h-1zM337 133h1v1h-1zM341 133h1v1h-1zM343 133h1v1h-1zM350 133h1v1h-1zM367 133h1v1h-1zM373 133h3v1h-3zM377 133h1v1h-1zM387 133h1v1h-1zM392 133h4v1h-4zM398 133h1v1h-1zM403 133h1v1h-1zM416 133h1v1h-1zM457 133h2v1h-2zM493 133h1v1h-1zM524 133h1v1h-1zM530 133h1v1h-1zM562 133h1v1h-1zM135 134h1v1h-1zM148 134h1v1h-1zM167 134h1v1h-1zM183 134h1v1h-1zM200 134h2v1h-2zM227 134h1v1h-1zM254 134h1v1h-1zM257 134h1v1h-1zM275 134h1v1h-1zM287 134h1v1h-1zM294 134h1v1h-1zM305 134h1v1h-1zM307 134h1v1h-1zM309 134h1v1h-1zM311 134h1v1h-1zM313 134h3v1h-3zM317 134h1v1h-1zM322 134h1v1h-1zM328 134h1v1h-1zM330 134h1v1h-1zM334 134h1v1h-1zM351 134h1v1h-1zM356 134h1v1h-1zM370 134h1v1h-1zM375 134h2v1h-2zM378 134h1v1h-1zM395 134h1v1h-1zM402 134h1v1h-1zM415 134h1v1h-1zM437 134h1v1h-1zM459 134h2v1h-2zM472 134h1v1h-1zM184 135h1v1h-1zM193 135h1v1h-1zM228 135h1v1h-1zM238 135h1v1h-1zM250 135h1v1h-1zM257 135h1v1h-1zM260 135h1v1h-1zM282 135h2v1h-2zM291 135h1v1h-1zM295 135h2v1h-2zM299 135h1v1h-1zM313 135h2v1h-2zM316 135h1v1h-1zM318 135h1v1h-1zM320 135h1v1h-1zM354 135h1v1h-1zM357 135h1v1h-1zM374 135h1v1h-1zM376 135h1v1h-1zM388 135h1v1h-1zM394 135h1v1h-1zM414 135h1v1h-1zM416 135h1v1h-1zM446 135h1v1h-1zM460 135h1v1h-1zM462 135h1v1h-1zM93 136h1v1h-1zM159 136h1v1h-1zM189 136h1v1h-1zM240 136h1v1h-1zM266 136h1v1h-1zM289 136h1v1h-1zM300 136h1v1h-1zM315 136h1v1h-1zM318 136h2v1h-2zM324 136h1v1h-1zM330 136h1v1h-1zM360 136h1v1h-1zM366 136h1v1h-1zM375 136h1v1h-1zM378 136h1v1h-1zM383 136h1v1h-1zM395 136h1v1h-1zM397 136h1v1h-1zM404 136h1v1h-1zM413 136h4v1h-4zM461 136h3v1h-3zM482 136h1v1h-1zM541 136h1v1h-1zM552 136h1v1h-1zM93 137h1v1h-1zM153 137h1v1h-1zM176 137h1v1h-1zM189 137h1v1h-1zM198 137h2v1h-2zM246 137h1v1h-1zM262 137h1v1h-1zM266 137h1v1h-1zM268 137h1v1h-1zM309 137h1v1h-1zM318 137h5v1h-5zM324 137h3v1h-3zM340 137h1v1h-1zM342 137h2v1h-2zM368 137h1v1h-1zM371 137h1v1h-1zM376 137h1v1h-1zM378 137h1v1h-1zM396 137h1v1h-1zM398 137h1v1h-1zM405 137h1v1h-1zM411 137h1v1h-1zM414 137h1v1h-1zM440 137h1v1h-1zM464 137h1v1h-1zM128 138h1v1h-1zM216 138h1v1h-1zM225 138h1v1h-1zM238 138h1v1h-1zM256 138h1v1h-1zM262 138h1v1h-1zM276 138h1v1h-1zM285 138h2v1h-2zM288 138h1v1h-1zM301 138h2v1h-2zM321 138h2v1h-2zM324 138h1v1h-1zM326 138h1v1h-1zM328 138h1v1h-1zM342 138h1v1h-1zM345 138h1v1h-1zM354 138h1v1h-1zM356 138h1v1h-1zM360 138h1v1h-1zM377 138h2v1h-2zM383 138h1v1h-1zM395 138h1v1h-1zM408 138h1v1h-1zM413 138h2v1h-2zM421 138h1v1h-1zM463 138h3v1h-3zM115 139h1v1h-1zM118 139h1v1h-1zM135 139h1v1h-1zM165 139h1v1h-1zM196 139h1v1h-1zM208 139h1v1h-1zM215 139h1v1h-1zM218 139h2v1h-2zM245 139h1v1h-1zM276 139h1v1h-1zM282 139h2v1h-2zM306 139h1v1h-1zM309 139h1v1h-1zM313 139h1v1h-1zM325 139h1v1h-1zM376 139h1v1h-1zM381 139h1v1h-1zM388 139h1v1h-1zM391 139h1v1h-1zM403 139h1v1h-1zM415 139h1v1h-1zM459 139h1v1h-1zM463 139h1v1h-1zM465 139h2v1h-2zM73 140h1v1h-1zM155 140h1v1h-1zM187 140h1v1h-1zM262 140h1v1h-1zM269 140h1v1h-1zM275 140h2v1h-2zM298 140h1v1h-1zM315 140h1v1h-1zM344 140h1v1h-1zM364 140h1v1h-1zM370 140h1v1h-1zM373 140h1v1h-1zM378 140h2v1h-2zM396 140h2v1h-2zM413 140h1v1h-1zM415 140h1v1h-1zM429 140h1v1h-1zM454 140h1v1h-1zM465 140h2v1h-2zM162 141h1v1h-1zM181 141h1v1h-1zM191 141h1v1h-1zM196 141h1v1h-1zM203 141h1v1h-1zM231 141h1v1h-1zM243 141h1v1h-1zM253 141h1v1h-1zM283 141h1v1h-1zM303 141h1v1h-1zM329 141h3v1h-3zM337 141h2v1h-2zM351 141h1v1h-1zM353 141h1v1h-1zM374 141h1v1h-1zM377 141h1v1h-1zM379 141h1v1h-1zM398 141h1v1h-1zM413 141h1v1h-1zM415 141h1v1h-1zM418 141h1v1h-1zM441 141h1v1h-1zM453 141h1v1h-1zM465 141h3v1h-3zM544 141h1v1h-1zM12 142h1v1h-1zM156 142h1v1h-1zM166 142h1v1h-1zM212 142h1v1h-1zM248 142h1v1h-1zM260 142h1v1h-1zM264 142h3v1h-3zM276 142h2v1h-2zM286 142h1v1h-1zM309 142h1v1h-1zM335 142h1v1h-1zM346 142h1v1h-1zM377 142h2v1h-2zM398 142h2v1h-2zM466 142h2v1h-2zM495 142h1v1h-1zM519 142h1v1h-1zM216 143h1v1h-1zM243 143h1v1h-1zM260 143h1v1h-1zM286 143h1v1h-1zM290 143h1v1h-1zM320 143h1v1h-1zM357 143h1v1h-1zM379 143h1v1h-1zM384 143h1v1h-1zM390 143h1v1h-1zM400 143h1v1h-1zM406 143h1v1h-1zM412 143h1v1h-1zM415 143h2v1h-2zM467 143h1v1h-1zM527 143h1v1h-1zM62 144h1v1h-1zM102 144h1v1h-1zM196 144h1v1h-1zM234 144h1v1h-1zM236 144h1v1h-1zM258 144h1v1h-1zM267 144h1v1h-1zM280 144h1v1h-1zM291 144h1v1h-1zM299 144h1v1h-1zM306 144h1v1h-1zM328 144h1v1h-1zM332 144h1v1h-1zM353 144h1v1h-1zM366 144h1v1h-1zM377 144h1v1h-1zM379 144h2v1h-2zM399 144h3v1h-3zM415 144h2v1h-2zM447 144h1v1h-1zM468 144h2v1h-2zM555 144h1v1h-1zM202 145h1v1h-1zM242 145h1v1h-1zM264 145h1v1h-1zM287 145h1v1h-1zM313 145h1v1h-1zM335 145h1v1h-1zM348 145h1v1h-1zM368 145h1v1h-1zM371 145h1v1h-1zM379 145h1v1h-1zM381 145h1v1h-1zM399 145h2v1h-2zM412 145h1v1h-1zM420 145h1v1h-1zM469 145h1v1h-1zM494 145h1v1h-1zM556 145h1v1h-1zM107 146h1v1h-1zM184 146h1v1h-1zM253 146h1v1h-1zM282 146h1v1h-1zM307 146h1v1h-1zM322 146h1v1h-1zM326 146h1v1h-1zM328 146h2v1h-2zM336 146h1v1h-1zM344 146h1v1h-1zM346 146h1v1h-1zM351 146h1v1h-1zM365 146h1v1h-1zM376 146h1v1h-1zM380 146h1v1h-1zM387 146h1v1h-1zM389 146h1v1h-1zM398 146h1v1h-1zM402 146h1v1h-1zM413 146h1v1h-1zM468 146h3v1h-3zM149 147h1v1h-1zM216 147h1v1h-1zM252 147h1v1h-1zM273 147h1v1h-1zM279 147h1v1h-1zM313 147h1v1h-1zM343 147h1v1h-1zM360 147h1v1h-1zM381 147h1v1h-1zM400 147h3v1h-3zM407 147h1v1h-1zM412 147h1v1h-1zM414 147h1v1h-1zM442 147h1v1h-1zM455 147h1v1h-1zM469 147h2v1h-2zM563 147h1v1h-1zM109 148h1v1h-1zM276 148h1v1h-1zM290 148h1v1h-1zM302 148h1v1h-1zM323 148h1v1h-1zM326 148h1v1h-1zM332 148h1v1h-1zM343 148h1v1h-1zM365 148h1v1h-1zM382 148h1v1h-1zM390 148h1v1h-1zM413 148h1v1h-1zM432 148h1v1h-1zM469 148h2v1h-2zM101 149h1v1h-1zM199 149h1v1h-1zM234 149h1v1h-1zM256 149h1v1h-1zM265 149h1v1h-1zM267 149h1v1h-1zM335 149h1v1h-1zM355 149h1v1h-1zM357 149h1v1h-1zM360 149h1v1h-1zM371 149h1v1h-1zM373 149h2v1h-2zM381 149h3v1h-3zM399 149h1v1h-1zM414 149h1v1h-1zM437 149h1v1h-1zM451 149h1v1h-1zM456 149h1v1h-1zM469 149h1v1h-1zM22 150h1v1h-1zM41 150h1v1h-1zM187 150h1v1h-1zM204 150h1v1h-1zM214 150h1v1h-1zM224 150h2v1h-2zM237 150h1v1h-1zM254 150h1v1h-1zM259 150h1v1h-1zM261 150h1v1h-1zM266 150h1v1h-1zM291 150h1v1h-1zM296 150h1v1h-1zM304 150h1v1h-1zM335 150h1v1h-1zM341 150h1v1h-1zM346 150h1v1h-1zM359 150h1v1h-1zM374 150h1v1h-1zM385 150h1v1h-1zM393 150h1v1h-1zM411 150h2v1h-2zM470 150h1v1h-1zM212 151h1v1h-1zM218 151h1v1h-1zM227 151h1v1h-1zM253 151h2v1h-2zM294 151h1v1h-1zM307 151h1v1h-1zM313 151h1v1h-1zM329 151h1v1h-1zM332 151h1v1h-1zM335 151h1v1h-1zM341 151h1v1h-1zM363 151h1v1h-1zM367 151h1v1h-1zM400 151h1v1h-1zM412 151h2v1h-2zM452 151h1v1h-1zM470 151h1v1h-1zM480 151h1v1h-1zM16 152h1v1h-1zM94 152h1v1h-1zM155 152h1v1h-1zM186 152h1v1h-1zM220 152h1v1h-1zM232 152h2v1h-2zM254 152h1v1h-1zM284 152h1v1h-1zM305 152h4v1h-4zM319 152h1v1h-1zM332 152h1v1h-1zM341 152h1v1h-1zM347 152h1v1h-1zM373 152h1v1h-1zM382 152h1v1h-1zM384 152h2v1h-2zM402 152h2v1h-2zM410 152h2v1h-2zM466 152h1v1h-1zM469 152h1v1h-1zM471 152h1v1h-1zM117 153h1v1h-1zM152 153h1v1h-1zM169 153h1v1h-1zM186 153h1v1h-1zM198 153h1v1h-1zM213 153h1v1h-1zM259 153h1v1h-1zM280 153h1v1h-1zM308 153h1v1h-1zM311 153h1v1h-1zM316 153h1v1h-1zM320 153h2v1h-2zM323 153h1v1h-1zM326 153h1v1h-1zM340 153h1v1h-1zM353 153h1v1h-1zM364 153h1v1h-1zM382 153h2v1h-2zM392 153h1v1h-1zM394 153h1v1h-1zM403 153h1v1h-1zM405 153h1v1h-1zM413 153h1v1h-1zM422 153h2v1h-2zM470 153h1v1h-1zM74 154h1v1h-1zM163 154h1v1h-1zM189 154h1v1h-1zM205 154h1v1h-1zM220 154h1v1h-1zM228 154h1v1h-1zM250 154h1v1h-1zM278 154h1v1h-1zM282 154h1v1h-1zM292 154h2v1h-2zM302 154h1v1h-1zM319 154h1v1h-1zM324 154h1v1h-1zM334 154h1v1h-1zM341 154h1v1h-1zM344 154h1v1h-1zM348 154h1v1h-1zM357 154h1v1h-1zM366 154h1v1h-1zM371 154h2v1h-2zM375 154h1v1h-1zM377 154h1v1h-1zM383 154h3v1h-3zM395 154h1v1h-1zM404 154h1v1h-1zM471 154h1v1h-1zM138 155h1v1h-1zM177 155h1v1h-1zM210 155h1v1h-1zM243 155h1v1h-1zM250 155h1v1h-1zM259 155h1v1h-1zM285 155h1v1h-1zM304 155h1v1h-1zM308 155h1v1h-1zM320 155h1v1h-1zM325 155h1v1h-1zM329 155h1v1h-1zM349 155h1v1h-1zM376 155h1v1h-1zM385 155h1v1h-1zM404 155h1v1h-1zM410 155h1v1h-1zM425 155h1v1h-1zM470 155h1v1h-1zM486 155h1v1h-1zM531 155h1v1h-1zM92 156h1v1h-1zM107 156h1v1h-1zM114 156h1v1h-1zM125 156h1v1h-1zM150 156h1v1h-1zM220 156h1v1h-1zM226 156h1v1h-1zM246 156h1v1h-1zM250 156h1v1h-1zM268 156h1v1h-1zM278 156h1v1h-1zM306 156h1v1h-1zM308 156h2v1h-2zM321 156h1v1h-1zM337 156h1v1h-1zM346 156h1v1h-1zM369 156h1v1h-1zM391 156h1v1h-1zM410 156h2v1h-2zM414 156h1v1h-1zM416 156h1v1h-1zM428 156h1v1h-1zM439 156h1v1h-1zM470 156h2v1h-2zM219 157h2v1h-2zM233 157h1v1h-1zM239 157h1v1h-1zM241 157h1v1h-1zM247 157h1v1h-1zM257 157h1v1h-1zM268 157h1v1h-1zM283 157h1v1h-1zM310 157h1v1h-1zM329 157h1v1h-1zM339 157h1v1h-1zM344 157h2v1h-2zM348 157h1v1h-1zM367 157h1v1h-1zM384 157h4v1h-4zM391 157h1v1h-1zM406 157h1v1h-1zM410 157h2v1h-2zM413 157h1v1h-1zM439 157h1v1h-1zM454 157h1v1h-1zM469 157h2v1h-2zM181 158h1v1h-1zM237 158h1v1h-1zM259 158h1v1h-1zM274 158h1v1h-1zM304 158h1v1h-1zM306 158h1v1h-1zM308 158h2v1h-2zM314 158h1v1h-1zM319 158h1v1h-1zM322 158h1v1h-1zM331 158h1v1h-1zM348 158h1v1h-1zM354 158h1v1h-1zM358 158h1v1h-1zM363 158h1v1h-1zM388 158h1v1h-1zM397 158h1v1h-1zM410 158h3v1h-3zM442 158h1v1h-1zM447 158h1v1h-1zM453 158h1v1h-1zM468 158h1v1h-1zM27 159h1v1h-1zM123 159h1v1h-1zM142 159h1v1h-1zM176 159h1v1h-1zM212 159h1v1h-1zM267 159h1v1h-1zM270 159h1v1h-1zM277 159h1v1h-1zM288 159h1v1h-1zM296 159h2v1h-2zM308 159h4v1h-4zM328 159h1v1h-1zM340 159h1v1h-1zM343 159h1v1h-1zM348 159h1v1h-1zM350 159h1v1h-1zM359 159h1v1h-1zM365 159h1v1h-1zM379 159h1v1h-1zM386 159h1v1h-1zM395 159h1v1h-1zM404 159h1v1h-1zM410 159h2v1h-2zM417 159h1v1h-1zM468 159h1v1h-1zM60 160h1v1h-1zM92 160h1v1h-1zM174 160h1v1h-1zM184 160h1v1h-1zM203 160h1v1h-1zM221 160h1v1h-1zM226 160h1v1h-1zM238 160h1v1h-1zM249 160h1v1h-1zM269 160h1v1h-1zM272 160h2v1h-2zM278 160h1v1h-1zM283 160h1v1h-1zM289 160h1v1h-1zM336 160h1v1h-1zM343 160h1v1h-1zM347 160h1v1h-1zM349 160h1v1h-1zM352 160h1v1h-1zM368 160h1v1h-1zM386 160h1v1h-1zM410 160h1v1h-1zM460 160h1v1h-1zM469 160h1v1h-1zM176 161h1v1h-1zM298 161h1v1h-1zM301 161h1v1h-1zM309 161h1v1h-1zM343 161h1v1h-1zM349 161h2v1h-2zM384 161h1v1h-1zM386 161h2v1h-2zM389 161h1v1h-1zM405 161h1v1h-1zM409 161h2v1h-2zM424 161h1v1h-1zM452 161h1v1h-1zM469 161h1v1h-1zM18 162h1v1h-1zM59 162h1v1h-1zM225 162h1v1h-1zM227 162h1v1h-1zM245 162h1v1h-1zM288 162h1v1h-1zM294 162h1v1h-1zM350 162h1v1h-1zM356 162h1v1h-1zM385 162h1v1h-1zM388 162h1v1h-1zM400 162h1v1h-1zM409 162h1v1h-1zM425 162h1v1h-1zM466 162h1v1h-1zM53 163h1v1h-1zM169 163h1v1h-1zM225 163h1v1h-1zM230 163h1v1h-1zM260 163h1v1h-1zM264 163h1v1h-1zM277 163h1v1h-1zM288 163h1v1h-1zM292 163h1v1h-1zM314 163h2v1h-2zM320 163h2v1h-2zM337 163h1v1h-1zM350 163h1v1h-1zM353 163h1v1h-1zM355 163h1v1h-1zM388 163h1v1h-1zM390 163h1v1h-1zM396 163h1v1h-1zM408 163h2v1h-2zM466 163h1v1h-1zM468 163h1v1h-1zM534 163h1v1h-1zM78 164h1v1h-1zM155 164h1v1h-1zM192 164h1v1h-1zM231 164h1v1h-1zM253 164h1v1h-1zM259 164h1v1h-1zM296 164h1v1h-1zM317 164h1v1h-1zM328 164h1v1h-1zM333 164h1v1h-1zM355 164h1v1h-1zM364 164h1v1h-1zM388 164h1v1h-1zM390 164h2v1h-2zM410 164h1v1h-1zM419 164h1v1h-1zM461 164h1v1h-1zM468 164h1v1h-1zM21 165h1v1h-1zM180 165h1v1h-1zM230 165h1v1h-1zM268 165h1v1h-1zM278 165h1v1h-1zM302 165h1v1h-1zM340 165h1v1h-1zM342 165h1v1h-1zM357 165h2v1h-2zM370 165h1v1h-1zM376 165h1v1h-1zM385 165h1v1h-1zM389 165h1v1h-1zM405 165h1v1h-1zM408 165h1v1h-1zM415 165h1v1h-1zM465 165h1v1h-1zM71 166h1v1h-1zM88 166h1v1h-1zM173 166h1v1h-1zM187 166h1v1h-1zM231 166h1v1h-1zM240 166h1v1h-1zM256 166h2v1h-2zM259 166h1v1h-1zM266 166h1v1h-1zM304 166h1v1h-1zM308 166h1v1h-1zM323 166h1v1h-1zM335 166h1v1h-1zM357 166h3v1h-3zM383 166h1v1h-1zM391 166h1v1h-1zM409 166h1v1h-1zM462 166h1v1h-1zM466 166h1v1h-1zM474 166h1v1h-1zM35 167h1v1h-1zM156 167h1v1h-1zM217 167h1v1h-1zM246 167h2v1h-2zM265 167h2v1h-2zM269 167h1v1h-1zM285 167h1v1h-1zM292 167h1v1h-1zM301 167h1v1h-1zM312 167h1v1h-1zM314 167h1v1h-1zM316 167h1v1h-1zM320 167h1v1h-1zM329 167h1v1h-1zM360 167h2v1h-2zM363 167h1v1h-1zM378 167h1v1h-1zM390 167h2v1h-2zM399 167h2v1h-2zM408 167h1v1h-1zM441 167h1v1h-1zM445 167h1v1h-1zM464 167h2v1h-2zM475 167h1v1h-1zM501 167h1v1h-1zM43 168h1v1h-1zM58 168h1v1h-1zM101 168h1v1h-1zM185 168h1v1h-1zM193 168h1v1h-1zM205 168h1v1h-1zM213 168h1v1h-1zM246 168h1v1h-1zM248 168h1v1h-1zM260 168h1v1h-1zM280 168h1v1h-1zM282 168h1v1h-1zM284 168h1v1h-1zM314 168h1v1h-1zM323 168h1v1h-1zM348 168h1v1h-1zM363 168h1v1h-1zM377 168h1v1h-1zM380 168h1v1h-1zM407 168h2v1h-2zM424 168h1v1h-1zM465 168h1v1h-1zM473 168h1v1h-1zM45 169h1v1h-1zM56 169h1v1h-1zM69 169h1v1h-1zM186 169h1v1h-1zM227 169h1v1h-1zM240 169h1v1h-1zM246 169h1v1h-1zM249 169h1v1h-1zM278 169h1v1h-1zM284 169h1v1h-1zM286 169h1v1h-1zM319 169h1v1h-1zM337 169h1v1h-1zM359 169h1v1h-1zM362 169h1v1h-1zM364 169h1v1h-1zM366 169h1v1h-1zM369 169h1v1h-1zM393 169h1v1h-1zM399 169h1v1h-1zM407 169h2v1h-2zM415 169h1v1h-1zM463 169h1v1h-1zM480 169h1v1h-1zM502 169h1v1h-1zM509 169h1v1h-1zM546 169h1v1h-1zM23 170h1v1h-1zM59 170h1v1h-1zM67 170h1v1h-1zM186 170h1v1h-1zM197 170h1v1h-1zM265 170h2v1h-2zM278 170h1v1h-1zM282 170h1v1h-1zM297 170h1v1h-1zM306 170h1v1h-1zM310 170h1v1h-1zM316 170h1v1h-1zM319 170h1v1h-1zM323 170h1v1h-1zM333 170h1v1h-1zM364 170h2v1h-2zM392 170h1v1h-1zM394 170h1v1h-1zM405 170h1v1h-1zM431 170h1v1h-1zM446 170h1v1h-1zM462 170h3v1h-3zM501 170h1v1h-1zM521 170h1v1h-1zM122 171h1v1h-1zM236 171h1v1h-1zM269 171h1v1h-1zM277 171h1v1h-1zM299 171h1v1h-1zM301 171h2v1h-2zM311 171h1v1h-1zM329 171h1v1h-1zM339 171h1v1h-1zM347 171h1v1h-1zM361 171h1v1h-1zM366 171h3v1h-3zM393 171h1v1h-1zM405 171h1v1h-1zM407 171h2v1h-2zM459 171h1v1h-1zM461 171h1v1h-1zM507 171h1v1h-1zM35 172h1v1h-1zM68 172h1v1h-1zM135 172h1v1h-1zM168 172h1v1h-1zM241 172h1v1h-1zM274 172h1v1h-1zM278 172h1v1h-1zM280 172h1v1h-1zM305 172h1v1h-1zM321 172h1v1h-1zM324 172h2v1h-2zM337 172h1v1h-1zM342 172h1v1h-1zM353 172h1v1h-1zM366 172h1v1h-1zM368 172h1v1h-1zM371 172h1v1h-1zM376 172h1v1h-1zM381 172h1v1h-1zM392 172h1v1h-1zM400 172h2v1h-2zM405 172h1v1h-1zM407 172h1v1h-1zM429 172h1v1h-1zM431 172h1v1h-1zM433 172h1v1h-1zM447 172h1v1h-1zM460 172h1v1h-1zM519 172h1v1h-1zM549 172h1v1h-1zM87 173h1v1h-1zM201 173h1v1h-1zM227 173h1v1h-1zM253 173h1v1h-1zM275 173h2v1h-2zM314 173h1v1h-1zM324 173h1v1h-1zM329 173h1v1h-1zM394 173h1v1h-1zM402 173h1v1h-1zM404 173h1v1h-1zM406 173h1v1h-1zM417 173h1v1h-1zM434 173h1v1h-1zM461 173h2v1h-2zM29 174h1v1h-1zM159 174h1v1h-1zM163 174h1v1h-1zM196 174h1v1h-1zM267 174h1v1h-1zM290 174h1v1h-1zM301 174h1v1h-1zM306 174h1v1h-1zM309 174h1v1h-1zM320 174h1v1h-1zM325 174h1v1h-1zM336 174h1v1h-1zM369 174h1v1h-1zM374 174h1v1h-1zM394 174h1v1h-1zM404 174h4v1h-4zM446 174h1v1h-1zM459 174h2v1h-2zM187 175h1v1h-1zM217 175h1v1h-1zM256 175h1v1h-1zM277 175h2v1h-2zM285 175h1v1h-1zM292 175h1v1h-1zM294 175h1v1h-1zM308 175h1v1h-1zM312 175h2v1h-2zM315 175h1v1h-1zM345 175h1v1h-1zM355 175h1v1h-1zM371 175h1v1h-1zM383 175h1v1h-1zM385 175h1v1h-1zM394 175h1v1h-1zM431 175h1v1h-1zM460 175h2v1h-2zM536 175h1v1h-1zM544 175h1v1h-1zM10 176h1v1h-1zM112 176h1v1h-1zM188 176h1v1h-1zM246 176h1v1h-1zM254 176h1v1h-1zM256 176h1v1h-1zM260 176h1v1h-1zM277 176h1v1h-1zM281 176h1v1h-1zM283 176h1v1h-1zM285 176h1v1h-1zM294 176h1v1h-1zM306 176h1v1h-1zM315 176h1v1h-1zM335 176h1v1h-1zM352 176h1v1h-1zM361 176h1v1h-1zM374 176h1v1h-1zM382 176h1v1h-1zM394 176h2v1h-2zM404 176h1v1h-1zM420 176h1v1h-1zM423 176h1v1h-1zM430 176h1v1h-1zM447 176h1v1h-1zM458 176h1v1h-1zM460 176h1v1h-1zM19 177h1v1h-1zM148 177h1v1h-1zM196 177h1v1h-1zM198 177h2v1h-2zM223 177h1v1h-1zM239 177h1v1h-1zM250 177h1v1h-1zM256 177h1v1h-1zM258 177h1v1h-1zM264 177h1v1h-1zM267 177h1v1h-1zM286 177h1v1h-1zM293 177h2v1h-2zM301 177h1v1h-1zM340 177h1v1h-1zM347 177h1v1h-1zM349 177h1v1h-1zM352 177h1v1h-1zM376 177h1v1h-1zM378 177h1v1h-1zM380 177h1v1h-1zM385 177h1v1h-1zM397 177h1v1h-1zM404 177h1v1h-1zM409 177h1v1h-1zM413 177h1v1h-1zM452 177h1v1h-1zM457 177h1v1h-1zM472 177h1v1h-1zM477 177h1v1h-1zM34 178h1v1h-1zM48 178h1v1h-1zM74 178h1v1h-1zM168 178h1v1h-1zM202 178h1v1h-1zM225 178h1v1h-1zM236 178h1v1h-1zM245 178h1v1h-1zM255 178h1v1h-1zM257 178h1v1h-1zM263 178h1v1h-1zM270 178h1v1h-1zM278 178h1v1h-1zM284 178h1v1h-1zM298 178h1v1h-1zM308 178h1v1h-1zM316 178h3v1h-3zM320 178h1v1h-1zM331 178h1v1h-1zM338 178h1v1h-1zM341 178h1v1h-1zM352 178h1v1h-1zM369 178h1v1h-1zM376 178h3v1h-3zM396 178h1v1h-1zM453 178h5v1h-5zM500 178h1v1h-1zM138 179h1v1h-1zM218 179h1v1h-1zM247 179h1v1h-1zM249 179h1v1h-1zM251 179h1v1h-1zM266 179h1v1h-1zM277 179h1v1h-1zM279 179h1v1h-1zM290 179h1v1h-1zM296 179h1v1h-1zM313 179h1v1h-1zM322 179h1v1h-1zM348 179h1v1h-1zM360 179h1v1h-1zM366 179h1v1h-1zM368 179h1v1h-1zM372 179h1v1h-1zM381 179h1v1h-1zM400 179h1v1h-1zM418 179h2v1h-2zM453 179h1v1h-1zM456 179h1v1h-1zM560 179h1v1h-1zM6 180h1v1h-1zM181 180h1v1h-1zM216 180h1v1h-1zM242 180h1v1h-1zM269 180h1v1h-1zM273 180h1v1h-1zM281 180h1v1h-1zM286 180h1v1h-1zM308 180h1v1h-1zM314 180h1v1h-1zM328 180h1v1h-1zM337 180h1v1h-1zM340 180h1v1h-1zM379 180h1v1h-1zM381 180h1v1h-1zM384 180h1v1h-1zM402 180h1v1h-1zM453 180h3v1h-3zM480 180h1v1h-1zM547 180h1v1h-1zM1 181h1v1h-1zM67 181h1v1h-1zM114 181h1v1h-1zM120 181h1v1h-1zM170 181h1v1h-1zM220 181h1v1h-1zM226 181h1v1h-1zM266 181h1v1h-1zM269 181h1v1h-1zM285 181h1v1h-1zM290 181h1v1h-1zM294 181h1v1h-1zM298 181h1v1h-1zM301 181h1v1h-1zM318 181h1v1h-1zM321 181h1v1h-1zM324 181h1v1h-1zM327 181h1v1h-1zM343 181h1v1h-1zM358 181h1v1h-1zM380 181h1v1h-1zM393 181h1v1h-1zM403 181h2v1h-2zM410 181h1v1h-1zM417 181h1v1h-1zM449 181h1v1h-1zM452 181h1v1h-1zM454 181h1v1h-1zM496 181h1v1h-1zM501 181h1v1h-1zM98 182h1v1h-1zM133 182h1v1h-1zM177 182h1v1h-1zM228 182h1v1h-1zM239 182h1v1h-1zM275 182h1v1h-1zM284 182h1v1h-1zM288 182h1v1h-1zM290 182h1v1h-1zM294 182h1v1h-1zM307 182h1v1h-1zM320 182h2v1h-2zM326 182h1v1h-1zM340 182h1v1h-1zM352 182h1v1h-1zM367 182h1v1h-1zM381 182h1v1h-1zM384 182h1v1h-1zM401 182h2v1h-2zM415 182h1v1h-1zM417 182h1v1h-1zM116 183h1v1h-1zM136 183h1v1h-1zM154 183h1v1h-1zM185 183h1v1h-1zM210 183h1v1h-1zM247 183h1v1h-1zM257 183h1v1h-1zM270 183h1v1h-1zM288 183h1v1h-1zM304 183h1v1h-1zM316 183h1v1h-1zM332 183h2v1h-2zM383 183h2v1h-2zM387 183h2v1h-2zM392 183h1v1h-1zM400 183h1v1h-1zM431 183h1v1h-1zM449 183h2v1h-2zM452 183h1v1h-1zM545 183h1v1h-1zM134 184h1v1h-1zM215 184h1v1h-1zM226 184h1v1h-1zM292 184h1v1h-1zM306 184h1v1h-1zM309 184h1v1h-1zM315 184h2v1h-2zM323 184h1v1h-1zM332 184h1v1h-1zM334 184h1v1h-1zM343 184h1v1h-1zM347 184h1v1h-1zM361 184h1v1h-1zM365 184h1v1h-1zM384 184h2v1h-2zM387 184h2v1h-2zM391 184h1v1h-1zM401 184h1v1h-1zM448 184h3v1h-3zM488 184h1v1h-1zM505 184h1v1h-1zM512 184h1v1h-1zM537 184h1v1h-1zM7 185h1v1h-1zM127 185h1v1h-1zM147 185h1v1h-1zM169 185h1v1h-1zM197 185h1v1h-1zM207 185h1v1h-1zM250 185h1v1h-1zM257 185h1v1h-1zM260 185h1v1h-1zM263 185h2v1h-2zM266 185h1v1h-1zM269 185h1v1h-1zM288 185h1v1h-1zM308 185h1v1h-1zM354 185h1v1h-1zM363 185h1v1h-1zM387 185h1v1h-1zM389 185h2v1h-2zM400 185h2v1h-2zM419 185h1v1h-1zM19 186h1v1h-1zM50 186h1v1h-1zM123 186h1v1h-1zM206 186h1v1h-1zM251 186h1v1h-1zM273 186h1v1h-1zM283 186h1v1h-1zM289 186h1v1h-1zM299 186h1v1h-1zM308 186h1v1h-1zM315 186h1v1h-1zM317 186h1v1h-1zM330 186h1v1h-1zM363 186h1v1h-1zM388 186h1v1h-1zM399 186h2v1h-2zM409 186h1v1h-1zM437 186h1v1h-1zM452 186h1v1h-1zM466 186h1v1h-1zM470 186h1v1h-1zM545 186h1v1h-1zM60 187h1v1h-1zM123 187h1v1h-1zM188 187h1v1h-1zM251 187h1v1h-1zM262 187h1v1h-1zM276 187h1v1h-1zM283 187h1v1h-1zM291 187h1v1h-1zM295 187h1v1h-1zM301 187h1v1h-1zM332 187h2v1h-2zM353 187h1v1h-1zM362 187h1v1h-1zM381 187h1v1h-1zM391 187h1v1h-1zM399 187h3v1h-3zM431 187h2v1h-2zM65 188h1v1h-1zM169 188h1v1h-1zM252 188h1v1h-1zM268 188h1v1h-1zM274 188h1v1h-1zM278 188h1v1h-1zM282 188h1v1h-1zM285 188h1v1h-1zM290 188h1v1h-1zM298 188h1v1h-1zM309 188h1v1h-1zM315 188h1v1h-1zM336 188h1v1h-1zM361 188h1v1h-1zM365 188h1v1h-1zM373 188h1v1h-1zM410 188h1v1h-1zM415 188h1v1h-1zM139 189h1v1h-1zM167 189h1v1h-1zM209 189h1v1h-1zM226 189h1v1h-1zM268 189h1v1h-1zM276 189h1v1h-1zM303 189h1v1h-1zM308 189h1v1h-1zM320 189h1v1h-1zM333 189h1v1h-1zM335 189h1v1h-1zM341 189h1v1h-1zM392 189h1v1h-1zM394 189h2v1h-2zM488 189h1v1h-1zM84 190h1v1h-1zM184 190h1v1h-1zM203 190h1v1h-1zM234 190h1v1h-1zM262 190h1v1h-1zM277 190h2v1h-2zM311 190h1v1h-1zM320 190h1v1h-1zM331 190h1v1h-1zM355 190h1v1h-1zM360 190h1v1h-1zM369 190h1v1h-1zM394 190h1v1h-1zM435 190h1v1h-1zM522 190h1v1h-1zM108 191h1v1h-1zM162 191h1v1h-1zM166 191h1v1h-1zM231 191h2v1h-2zM242 191h1v1h-1zM264 191h1v1h-1zM267 191h1v1h-1zM288 191h1v1h-1zM290 191h1v1h-1zM294 191h1v1h-1zM296 191h1v1h-1zM321 191h1v1h-1zM340 191h1v1h-1zM352 191h1v1h-1zM395 191h1v1h-1zM397 191h2v1h-2zM472 191h1v1h-1zM24 192h1v1h-1zM185 192h1v1h-1zM230 192h2v1h-2zM233 192h1v1h-1zM265 192h1v1h-1zM270 192h1v1h-1zM275 192h1v1h-1zM280 192h2v1h-2zM284 192h1v1h-1zM296 192h1v1h-1zM303 192h1v1h-1zM324 192h1v1h-1zM363 192h1v1h-1zM396 192h1v1h-1zM398 192h1v1h-1zM416 192h1v1h-1zM448 192h1v1h-1zM113 193h1v1h-1zM135 193h1v1h-1zM156 193h1v1h-1zM217 193h1v1h-1zM226 193h1v1h-1zM231 193h1v1h-1zM234 193h1v1h-1zM293 193h1v1h-1zM297 193h2v1h-2zM324 193h1v1h-1zM326 193h2v1h-2zM335 193h1v1h-1zM396 193h2v1h-2zM399 193h1v1h-1zM402 193h1v1h-1zM410 193h1v1h-1zM415 193h1v1h-1zM418 193h1v1h-1zM458 193h1v1h-1zM472 193h1v1h-1zM534 193h1v1h-1zM537 193h1v1h-1zM563 193h1v1h-1zM177 194h1v1h-1zM216 194h1v1h-1zM233 194h1v1h-1zM246 194h1v1h-1zM251 194h1v1h-1zM259 194h1v1h-1zM288 194h1v1h-1zM301 194h1v1h-1zM311 194h1v1h-1zM314 194h1v1h-1zM364 194h1v1h-1zM384 194h1v1h-1zM401 194h1v1h-1zM404 194h1v1h-1zM515 194h1v1h-1zM43 195h1v1h-1zM180 195h1v1h-1zM184 195h1v1h-1zM206 195h1v1h-1zM224 195h1v1h-1zM234 195h2v1h-2zM237 195h1v1h-1zM261 195h1v1h-1zM274 195h2v1h-2zM284 195h1v1h-1zM287 195h1v1h-1zM313 195h1v1h-1zM339 195h1v1h-1zM346 195h1v1h-1zM348 195h1v1h-1zM352 195h1v1h-1zM394 195h3v1h-3zM401 195h1v1h-1zM418 195h1v1h-1zM496 195h1v1h-1zM551 195h1v1h-1zM114 196h2v1h-2zM117 196h1v1h-1zM213 196h1v1h-1zM234 196h5v1h-5zM258 196h2v1h-2zM266 196h1v1h-1zM285 196h1v1h-1zM289 196h1v1h-1zM300 196h1v1h-1zM308 196h1v1h-1zM318 196h1v1h-1zM324 196h1v1h-1zM358 196h1v1h-1zM371 196h2v1h-2zM380 196h1v1h-1zM394 196h1v1h-1zM396 196h1v1h-1zM409 196h1v1h-1zM541 196h1v1h-1zM560 196h1v1h-1zM184 197h1v1h-1zM191 197h1v1h-1zM209 197h1v1h-1zM212 197h1v1h-1zM236 197h1v1h-1zM238 197h1v1h-1zM262 197h1v1h-1zM273 197h1v1h-1zM278 197h1v1h-1zM296 197h1v1h-1zM300 197h1v1h-1zM304 197h1v1h-1zM310 197h2v1h-2zM323 197h1v1h-1zM351 197h1v1h-1zM367 197h1v1h-1zM394 197h1v1h-1zM396 197h1v1h-1zM400 197h1v1h-1zM404 197h1v1h-1zM406 197h2v1h-2zM523 197h1v1h-1zM137 198h1v1h-1zM161 198h1v1h-1zM183 198h1v1h-1zM194 198h1v1h-1zM233 198h1v1h-1zM237 198h1v1h-1zM239 198h2v1h-2zM242 198h1v1h-1zM253 198h1v1h-1zM257 198h1v1h-1zM266 198h1v1h-1zM293 198h3v1h-3zM298 198h1v1h-1zM303 198h1v1h-1zM306 198h1v1h-1zM322 198h1v1h-1zM333 198h1v1h-1zM361 198h1v1h-1zM365 198h1v1h-1zM384 198h2v1h-2zM393 198h2v1h-2zM432 198h1v1h-1zM460 198h1v1h-1zM478 198h1v1h-1zM493 198h1v1h-1zM135 199h1v1h-1zM210 199h1v1h-1zM234 199h1v1h-1zM239 199h3v1h-3zM281 199h1v1h-1zM324 199h1v1h-1zM330 199h2v1h-2zM358 199h1v1h-1zM386 199h1v1h-1zM392 199h2v1h-2zM395 199h1v1h-1zM446 199h1v1h-1zM448 199h1v1h-1zM113 200h1v1h-1zM189 200h1v1h-1zM192 200h1v1h-1zM208 200h1v1h-1zM237 200h1v1h-1zM239 200h1v1h-1zM241 200h3v1h-3zM265 200h2v1h-2zM276 200h1v1h-1zM279 200h1v1h-1zM285 200h1v1h-1zM289 200h1v1h-1zM292 200h1v1h-1zM300 200h1v1h-1zM312 200h1v1h-1zM323 200h1v1h-1zM326 200h1v1h-1zM335 200h1v1h-1zM388 200h1v1h-1zM391 200h4v1h-4zM455 200h1v1h-1zM559 200h1v1h-1zM63 201h1v1h-1zM69 201h1v1h-1zM173 201h1v1h-1zM178 201h1v1h-1zM220 201h1v1h-1zM224 201h1v1h-1zM242 201h2v1h-2zM279 201h1v1h-1zM281 201h1v1h-1zM283 201h1v1h-1zM294 201h1v1h-1zM310 201h1v1h-1zM325 201h1v1h-1zM334 201h1v1h-1zM338 201h1v1h-1zM376 201h1v1h-1zM391 201h1v1h-1zM393 201h1v1h-1zM423 201h1v1h-1zM426 201h1v1h-1zM541 201h1v1h-1zM39 202h1v1h-1zM128 202h1v1h-1zM184 202h1v1h-1zM196 202h1v1h-1zM242 202h1v1h-1zM244 202h1v1h-1zM250 202h1v1h-1zM254 202h1v1h-1zM276 202h1v1h-1zM281 202h1v1h-1zM283 202h1v1h-1zM292 202h1v1h-1zM324 202h2v1h-2zM327 202h1v1h-1zM350 202h1v1h-1zM359 202h1v1h-1zM373 202h1v1h-1zM378 202h1v1h-1zM383 202h1v1h-1zM389 202h1v1h-1zM409 202h1v1h-1zM411 202h1v1h-1zM488 202h1v1h-1zM12 203h1v1h-1zM205 203h1v1h-1zM219 203h1v1h-1zM221 203h1v1h-1zM233 203h1v1h-1zM243 203h4v1h-4zM260 203h1v1h-1zM266 203h1v1h-1zM282 203h1v1h-1zM286 203h1v1h-1zM288 203h1v1h-1zM316 203h1v1h-1zM387 203h3v1h-3zM391 203h1v1h-1zM394 203h1v1h-1zM522 203h1v1h-1zM565 203h1v1h-1zM43 204h1v1h-1zM48 204h1v1h-1zM140 204h1v1h-1zM247 204h2v1h-2zM253 204h1v1h-1zM315 204h1v1h-1zM349 204h1v1h-1zM368 204h1v1h-1zM386 204h1v1h-1zM420 204h1v1h-1zM457 204h1v1h-1zM468 204h1v1h-1zM487 204h1v1h-1zM84 205h1v1h-1zM99 205h1v1h-1zM166 205h1v1h-1zM196 205h1v1h-1zM211 205h1v1h-1zM246 205h3v1h-3zM333 205h2v1h-2zM345 205h1v1h-1zM350 205h1v1h-1zM365 205h1v1h-1zM384 205h1v1h-1zM386 205h3v1h-3zM431 205h1v1h-1zM498 205h1v1h-1zM535 205h1v1h-1zM144 206h1v1h-1zM207 206h1v1h-1zM211 206h1v1h-1zM247 206h3v1h-3zM262 206h1v1h-1zM274 206h1v1h-1zM317 206h1v1h-1zM334 206h1v1h-1zM361 206h1v1h-1zM373 206h1v1h-1zM382 206h1v1h-1zM388 206h1v1h-1zM441 206h1v1h-1zM463 206h1v1h-1zM511 206h2v1h-2zM190 207h1v1h-1zM249 207h1v1h-1zM251 207h1v1h-1zM253 207h1v1h-1zM260 207h1v1h-1zM265 207h1v1h-1zM305 207h1v1h-1zM314 207h1v1h-1zM317 207h1v1h-1zM320 207h1v1h-1zM381 207h1v1h-1zM406 207h1v1h-1zM426 207h1v1h-1zM497 207h1v1h-1zM32 208h1v1h-1zM107 208h1v1h-1zM113 208h1v1h-1zM209 208h1v1h-1zM235 208h1v1h-1zM250 208h1v1h-1zM252 208h3v1h-3zM282 208h1v1h-1zM291 208h1v1h-1zM302 208h1v1h-1zM312 208h1v1h-1zM326 208h1v1h-1zM332 208h1v1h-1zM334 208h1v1h-1zM363 208h2v1h-2zM379 208h1v1h-1zM381 208h1v1h-1zM383 208h1v1h-1zM426 208h1v1h-1zM122 209h1v1h-1zM157 209h1v1h-1zM180 209h1v1h-1zM252 209h6v1h-6zM266 209h2v1h-2zM284 209h1v1h-1zM298 209h1v1h-1zM307 209h1v1h-1zM334 209h1v1h-1zM351 209h1v1h-1zM379 209h4v1h-4zM512 209h1v1h-1zM53 210h1v1h-1zM181 210h1v1h-1zM207 210h1v1h-1zM253 210h2v1h-2zM257 210h1v1h-1zM265 210h1v1h-1zM274 210h1v1h-1zM278 210h1v1h-1zM287 210h1v1h-1zM294 210h2v1h-2zM301 210h1v1h-1zM329 210h2v1h-2zM368 210h1v1h-1zM376 210h2v1h-2zM379 210h1v1h-1zM393 210h1v1h-1zM398 210h1v1h-1zM567 210h1v1h-1zM83 211h1v1h-1zM110 211h1v1h-1zM183 211h1v1h-1zM196 211h1v1h-1zM256 211h2v1h-2zM259 211h1v1h-1zM273 211h1v1h-1zM280 211h1v1h-1zM311 211h1v1h-1zM341 211h1v1h-1zM343 211h1v1h-1zM351 211h1v1h-1zM374 211h3v1h-3zM378 211h1v1h-1zM394 211h1v1h-1zM431 211h1v1h-1zM436 211h1v1h-1zM445 211h1v1h-1zM526 211h1v1h-1zM172 212h1v1h-1zM233 212h1v1h-1zM256 212h1v1h-1zM258 212h2v1h-2zM261 212h2v1h-2zM266 212h1v1h-1zM290 212h1v1h-1zM298 212h1v1h-1zM329 212h1v1h-1zM373 212h4v1h-4zM419 212h1v1h-1zM425 212h1v1h-1zM451 212h1v1h-1zM486 212h1v1h-1zM514 212h1v1h-1zM127 213h1v1h-1zM142 213h1v1h-1zM189 213h1v1h-1zM259 213h2v1h-2zM263 213h2v1h-2zM273 213h2v1h-2zM299 213h1v1h-1zM302 213h1v1h-1zM312 213h1v1h-1zM314 213h1v1h-1zM354 213h1v1h-1zM371 213h3v1h-3zM375 213h1v1h-1zM510 213h1v1h-1zM532 213h1v1h-1zM20 214h1v1h-1zM176 214h1v1h-1zM243 214h1v1h-1zM249 214h1v1h-1zM256 214h1v1h-1zM261 214h4v1h-4zM266 214h2v1h-2zM305 214h1v1h-1zM353 214h1v1h-1zM362 214h1v1h-1zM364 214h1v1h-1zM369 214h5v1h-5zM378 214h1v1h-1zM431 214h1v1h-1zM452 214h1v1h-1zM477 214h1v1h-1zM8 215h1v1h-1zM33 215h1v1h-1zM92 215h1v1h-1zM96 215h1v1h-1zM150 215h1v1h-1zM198 215h1v1h-1zM243 215h1v1h-1zM246 215h1v1h-1zM262 215h2v1h-2zM267 215h2v1h-2zM336 215h1v1h-1zM367 215h2v1h-2zM371 215h1v1h-1zM378 215h1v1h-1zM90 216h1v1h-1zM144 216h1v1h-1zM193 216h1v1h-1zM196 216h1v1h-1zM224 216h1v1h-1zM260 216h1v1h-1zM265 216h3v1h-3zM269 216h1v1h-1zM271 216h2v1h-2zM308 216h2v1h-2zM348 216h1v1h-1zM356 216h1v1h-1zM358 216h1v1h-1zM365 216h1v1h-1zM367 216h2v1h-2zM399 216h1v1h-1zM466 216h1v1h-1zM527 216h1v1h-1zM20 217h1v1h-1zM42 217h2v1h-2zM141 217h1v1h-1zM149 217h1v1h-1zM195 217h1v1h-1zM267 217h2v1h-2zM270 217h4v1h-4zM322 217h2v1h-2zM343 217h1v1h-1zM364 217h1v1h-1zM366 217h2v1h-2zM420 217h1v1h-1zM18 218h1v1h-1zM58 218h1v1h-1zM108 218h1v1h-1zM270 218h4v1h-4zM276 218h2v1h-2zM283 218h1v1h-1zM308 218h1v1h-1zM317 218h1v1h-1zM326 218h1v1h-1zM329 218h1v1h-1zM331 218h1v1h-1zM340 218h1v1h-1zM361 218h1v1h-1zM363 218h1v1h-1zM365 218h3v1h-3zM372 218h1v1h-1zM378 218h1v1h-1zM389 218h1v1h-1zM447 218h1v1h-1zM458 218h1v1h-1zM513 218h1v1h-1zM78 219h1v1h-1zM181 219h1v1h-1zM194 219h1v1h-1zM211 219h1v1h-1zM274 219h2v1h-2zM278 219h1v1h-1zM280 219h1v1h-1zM286 219h1v1h-1zM310 219h1v1h-1zM326 219h1v1h-1zM331 219h1v1h-1zM358 219h2v1h-2zM362 219h3v1h-3zM368 219h1v1h-1zM440 219h1v1h-1zM443 219h1v1h-1zM149 220h1v1h-1zM201 220h1v1h-1zM275 220h1v1h-1zM278 220h2v1h-2zM281 220h3v1h-3zM320 220h1v1h-1zM355 220h1v1h-1zM357 220h1v1h-1zM359 220h4v1h-4zM367 220h1v1h-1zM390 220h1v1h-1zM447 220h1v1h-1zM453 220h1v1h-1zM500 220h1v1h-1zM533 220h1v1h-1zM546 220h1v1h-1zM36 221h1v1h-1zM75 221h1v1h-1zM194 221h1v1h-1zM239 221h1v1h-1zM278 221h1v1h-1zM280 221h1v1h-1zM282 221h1v1h-1zM284 221h1v1h-1zM286 221h1v1h-1zM336 221h1v1h-1zM349 221h1v1h-1zM353 221h3v1h-3zM357 221h1v1h-1zM396 221h1v1h-1zM431 221h1v1h-1zM433 221h2v1h-2zM442 221h1v1h-1zM453 221h1v1h-1zM462 221h1v1h-1zM174 222h1v1h-1zM234 222h1v1h-1zM257 222h1v1h-1zM277 222h1v1h-1zM282 222h1v1h-1zM284 222h1v1h-1zM287 222h2v1h-2zM295 222h1v1h-1zM311 222h2v1h-2zM334 222h1v1h-1zM345 222h2v1h-2zM349 222h4v1h-4zM354 222h2v1h-2zM357 222h2v1h-2zM375 222h1v1h-1zM415 222h1v1h-1zM463 222h1v1h-1zM523 222h1v1h-1zM70 223h1v1h-1zM102 223h1v1h-1zM260 223h1v1h-1zM273 223h1v1h-1zM279 223h1v1h-1zM286 223h2v1h-2zM289 223h2v1h-2zM292 223h1v1h-1zM344 223h1v1h-1zM347 223h1v1h-1zM349 223h3v1h-3zM372 223h1v1h-1zM439 223h1v1h-1zM447 223h2v1h-2zM451 223h1v1h-1zM532 223h1v1h-1zM278 224h1v1h-1zM287 224h2v1h-2zM290 224h2v1h-2zM294 224h3v1h-3zM300 224h1v1h-1zM302 224h1v1h-1zM338 224h2v1h-2zM341 224h2v1h-2zM345 224h4v1h-4zM350 224h3v1h-3zM356 224h2v1h-2zM381 224h1v1h-1zM388 224h1v1h-1zM403 224h1v1h-1zM412 224h1v1h-1zM498 224h1v1h-1zM88 225h1v1h-1zM199 225h1v1h-1zM223 225h1v1h-1zM254 225h1v1h-1zM290 225h2v1h-2zM293 225h2v1h-2zM296 225h1v1h-1zM298 225h2v1h-2zM301 225h2v1h-2zM332 225h1v1h-1zM334 225h1v1h-1zM336 225h4v1h-4zM341 225h7v1h-7zM368 225h1v1h-1zM413 225h1v1h-1zM553 225h1v1h-1zM152 226h1v1h-1zM200 226h1v1h-1zM227 226h1v1h-1zM243 226h1v1h-1zM252 226h1v1h-1zM283 226h1v1h-1zM288 226h1v1h-1zM294 226h3v1h-3zM299 226h1v1h-1zM301 226h5v1h-5zM309 226h2v1h-2zM324 226h1v1h-1zM326 226h2v1h-2zM329 226h2v1h-2zM332 226h5v1h-5zM338 226h6v1h-6zM345 226h1v1h-1zM368 226h2v1h-2zM389 226h1v1h-1zM412 226h1v1h-1zM442 226h1v1h-1zM446 226h1v1h-1zM63 227h1v1h-1zM248 227h1v1h-1zM289 227h1v1h-1zM292 227h1v1h-1zM299 227h3v1h-3zM303 227h1v1h-1zM306 227h6v1h-6zM313 227h3v1h-3zM317 227h6v1h-6zM324 227h2v1h-2zM327 227h2v1h-2zM330 227h2v1h-2zM334 227h5v1h-5zM347 227h1v1h-1zM388 227h1v1h-1zM407 227h1v1h-1zM427 227h1v1h-1zM441 227h1v1h-1zM515 227h1v1h-1zM521 227h1v1h-1zM27 228h1v1h-1zM37 228h1v1h-1zM85 228h1v1h-1zM189 228h1v1h-1zM198 228h1v1h-1zM240 228h1v1h-1zM268 228h2v1h-2zM271 228h1v1h-1zM275 228h1v1h-1zM303 228h5v1h-5zM309 228h3v1h-3zM313 228h6v1h-6zM321 228h2v1h-2zM324 228h2v1h-2zM332 228h1v1h-1zM334 228h1v1h-1zM369 228h1v1h-1zM410 228h1v1h-1zM430 228h1v1h-1zM547 228h1v1h-1zM89 229h1v1h-1zM115 229h1v1h-1zM268 229h1v1h-1zM274 229h1v1h-1zM294 229h1v1h-1zM304 229h1v1h-1zM312 229h2v1h-2zM315 229h3v1h-3zM319 229h4v1h-4zM365 229h2v1h-2zM381 229h1v1h-1zM398 229h1v1h-1zM32 230h1v1h-1zM142 230h1v1h-1zM144 230h1v1h-1zM175 230h1v1h-1zM207 230h1v1h-1zM258 230h1v1h-1zM291 230h1v1h-1zM309 230h1v1h-1zM338 230h1v1h-1zM361 230h1v1h-1zM364 230h1v1h-1zM366 230h1v1h-1zM385 230h1v1h-1zM448 230h1v1h-1zM470 230h1v1h-1zM503 230h1v1h-1zM254 231h1v1h-1zM267 231h1v1h-1zM312 231h1v1h-1zM318 231h1v1h-1zM335 231h1v1h-1zM338 231h1v1h-1zM359 231h2v1h-2zM366 231h1v1h-1zM371 231h1v1h-1zM461 231h1v1h-1zM532 231h1v1h-1zM17 232h1v1h-1zM91 232h1v1h-1zM94 232h1v1h-1zM166 232h1v1h-1zM186 232h1v1h-1zM339 232h1v1h-1zM354 232h1v1h-1zM356 232h1v1h-1zM359 232h2v1h-2zM464 232h1v1h-1zM492 232h1v1h-1zM553 232h1v1h-1zM104 233h1v1h-1zM120 233h1v1h-1zM128 233h1v1h-1zM196 233h1v1h-1zM242 233h1v1h-1zM266 233h1v1h-1zM309 233h1v1h-1zM352 233h2v1h-2zM356 233h1v1h-1zM397 233h1v1h-1zM403 233h1v1h-1zM120 234h1v1h-1zM172 234h1v1h-1zM200 234h1v1h-1zM248 234h1v1h-1zM347 234h5v1h-5zM356 234h1v1h-1zM529 234h1v1h-1zM85 235h1v1h-1zM173 235h1v1h-1zM210 235h1v1h-1zM239 235h1v1h-1zM279 235h1v1h-1zM288 235h1v1h-1zM296 235h1v1h-1zM314 235h1v1h-1zM324 235h1v1h-1zM347 235h3v1h-3zM353 235h1v1h-1zM455 235h1v1h-1zM509 235h1v1h-1zM66 236h1v1h-1zM78 236h1v1h-1zM199 236h1v1h-1zM238 236h1v1h-1zM307 236h1v1h-1zM344 236h1v1h-1zM368 236h1v1h-1zM419 236h1v1h-1zM457 236h1v1h-1zM524 236h1v1h-1zM68 237h1v1h-1zM225 237h1v1h-1zM235 237h1v1h-1zM270 237h1v1h-1zM284 237h1v1h-1zM292 237h2v1h-2zM313 237h1v1h-1zM339 237h1v1h-1zM342 237h1v1h-1zM373 237h1v1h-1zM380 237h1v1h-1zM389 237h1v1h-1zM404 237h1v1h-1zM522 237h1v1h-1zM45 238h1v1h-1zM59 238h1v1h-1zM62 238h1v1h-1zM100 238h1v1h-1zM132 238h1v1h-1zM155 238h1v1h-1zM192 238h1v1h-1zM225 238h1v1h-1zM290 238h1v1h-1zM295 238h1v1h-1zM336 238h1v1h-1zM338 238h1v1h-1zM340 238h1v1h-1zM342 238h1v1h-1zM344 238h2v1h-2zM387 238h1v1h-1zM544 238h1v1h-1zM26 239h1v1h-1zM205 239h1v1h-1zM221 239h1v1h-1zM225 239h1v1h-1zM254 239h1v1h-1zM271 239h1v1h-1zM279 239h1v1h-1zM296 239h1v1h-1zM318 239h1v1h-1zM332 239h1v1h-1zM338 239h1v1h-1zM352 239h1v1h-1zM366 239h1v1h-1zM405 239h1v1h-1zM411 239h1v1h-1zM439 239h1v1h-1zM159 240h1v1h-1zM240 240h1v1h-1zM330 240h1v1h-1zM334 240h1v1h-1zM337 240h1v1h-1zM352 240h1v1h-1zM366 240h1v1h-1zM397 240h1v1h-1zM448 240h1v1h-1zM475 240h1v1h-1zM485 240h1v1h-1zM94 241h1v1h-1zM132 241h1v1h-1zM204 241h1v1h-1zM213 241h1v1h-1zM327 241h1v1h-1zM329 241h1v1h-1zM332 241h1v1h-1zM335 241h1v1h-1zM340 241h1v1h-1zM343 241h1v1h-1zM439 241h1v1h-1zM481 241h1v1h-1zM19 242h1v1h-1zM117 242h1v1h-1zM248 242h1v1h-1zM254 242h1v1h-1zM262 242h1v1h-1zM295 242h1v1h-1zM299 242h1v1h-1zM323 242h1v1h-1zM330 242h1v1h-1zM337 242h1v1h-1zM435 242h1v1h-1zM496 242h1v1h-1zM505 242h1v1h-1zM567 242h1v1h-1zM197 243h1v1h-1zM221 243h1v1h-1zM249 243h1v1h-1zM263 243h1v1h-1zM289 243h1v1h-1zM310 243h1v1h-1zM318 243h2v1h-2zM321 243h1v1h-1zM324 243h1v1h-1zM327 243h1v1h-1zM334 243h1v1h-1zM363 243h1v1h-1zM366 243h1v1h-1zM399 243h1v1h-1zM428 243h1v1h-1zM504 243h1v1h-1zM539 243h1v1h-1zM118 244h1v1h-1zM137 244h1v1h-1zM270 244h1v1h-1zM310 244h1v1h-1zM312 244h2v1h-2zM315 244h1v1h-1zM319 244h1v1h-1zM322 244h1v1h-1zM354 244h1v1h-1zM72 245h1v1h-1zM280 245h1v1h-1zM301 245h1v1h-1zM306 245h1v1h-1zM310 245h1v1h-1zM315 245h1v1h-1zM318 245h3v1h-3zM348 245h1v1h-1zM361 245h1v1h-1zM372 245h1v1h-1zM375 245h1v1h-1zM435 245h1v1h-1zM63 246h1v1h-1zM159 246h1v1h-1zM191 246h1v1h-1zM209 246h1v1h-1zM306 246h3v1h-3zM310 246h1v1h-1zM315 246h1v1h-1zM349 246h1v1h-1zM366 246h1v1h-1zM412 246h1v1h-1zM499 246h1v1h-1zM525 246h1v1h-1zM44 247h1v1h-1zM49 247h1v1h-1zM146 247h1v1h-1zM162 247h1v1h-1zM200 247h1v1h-1zM291 247h3v1h-3zM296 247h1v1h-1zM301 247h1v1h-1zM303 247h1v1h-1zM306 247h2v1h-2zM311 247h1v1h-1zM333 247h1v1h-1zM344 247h1v1h-1zM346 247h2v1h-2zM386 247h1v1h-1zM553 247h1v1h-1zM3 248h1v1h-1zM157 248h1v1h-1zM207 248h1v1h-1zM216 248h1v1h-1zM231 248h1v1h-1zM264 248h1v1h-1zM283 248h2v1h-2zM286 248h1v1h-1zM289 248h1v1h-1zM291 248h3v1h-3zM296 248h1v1h-1zM300 248h3v1h-3zM319 248h1v1h-1zM325 248h1v1h-1zM341 248h1v1h-1zM355 248h1v1h-1zM168 249h1v1h-1zM212 249h1v1h-1zM270 249h1v1h-1zM272 249h2v1h-2zM278 249h1v1h-1zM281 249h1v1h-1zM290 249h1v1h-1zM292 249h1v1h-1zM296 249h2v1h-2zM349 249h1v1h-1zM371 249h1v1h-1zM395 249h1v1h-1zM437 249h1v1h-1zM536 249h1v1h-1zM544 249h1v1h-1zM20 250h1v1h-1zM254 250h1v1h-1zM258 250h1v1h-1zM262 250h1v1h-1zM264 250h1v1h-1zM266 250h1v1h-1zM268 250h1v1h-1zM270 250h1v1h-1zM277 250h1v1h-1zM283 250h2v1h-2zM288 250h1v1h-1zM306 250h1v1h-1zM314 250h1v1h-1zM322 250h1v1h-1zM335 250h1v1h-1zM357 250h1v1h-1zM436 250h1v1h-1zM458 250h1v1h-1zM55 251h1v1h-1zM81 251h1v1h-1zM216 251h1v1h-1zM246 251h2v1h-2zM250 251h1v1h-1zM253 251h1v1h-1zM256 251h2v1h-2zM259 251h1v1h-1zM262 251h1v1h-1zM267 251h1v1h-1zM272 251h2v1h-2zM278 251h1v1h-1zM339 251h2v1h-2zM115 252h1v1h-1zM177 252h1v1h-1zM194 252h1v1h-1zM226 252h1v1h-1zM248 252h3v1h-3zM252 252h4v1h-4zM262 252h1v1h-1zM264 252h2v1h-2zM267 252h1v1h-1zM300 252h1v1h-1zM302 252h1v1h-1zM322 252h1v1h-1zM335 252h1v1h-1zM371 252h1v1h-1zM470 252h1v1h-1zM499 252h1v1h-1zM99 253h1v1h-1zM127 253h1v1h-1zM156 253h1v1h-1zM167 253h1v1h-1zM180 253h1v1h-1zM246 253h1v1h-1zM248 253h2v1h-2zM252 253h2v1h-2zM313 253h1v1h-1zM358 253h2v1h-2zM375 253h1v1h-1zM380 253h1v1h-1zM391 253h1v1h-1zM398 253h1v1h-1zM48 254h1v1h-1zM83 254h1v1h-1zM187 254h1v1h-1zM258 254h1v1h-1zM284 254h1v1h-1zM325 254h1v1h-1zM328 254h1v1h-1zM361 254h1v1h-1zM56 255h1v1h-1zM95 255h1v1h-1zM262 255h1v1h-1zM267 255h1v1h-1zM270 255h1v1h-1zM334 255h1v1h-1zM34 256h1v1h-1zM49 256h1v1h-1zM147 256h1v1h-1zM261 256h2v1h-2zM289 256h1v1h-1zM293 256h1v1h-1zM362 256h1v1h-1zM381 256h1v1h-1zM516 256h1v1h-1zM12 257h1v1h-1zM47 257h1v1h-1zM223 257h1v1h-1zM332 257h1v1h-1zM358 257h1v1h-1zM439 257h1v1h-1zM18 258h1v1h-1zM193 258h1v1h-1zM198 258h1v1h-1zM241 258h1v1h-1zM256 258h1v1h-1zM301 258h1v1h-1zM324 258h1v1h-1zM46 259h1v1h-1zM243 259h1v1h-1zM252 259h1v1h-1zM339 259h1v1h-1zM352 259h1v1h-1zM372 259h1v1h-1zM404 259h1v1h-1zM407 259h1v1h-1zM118 260h1v1h-1zM188 260h1v1h-1zM199 260h1v1h-1zM208 260h1v1h-1zM229 260h1v1h-1zM291 260h1v1h-1zM313 260h1v1h-1zM376 260h1v1h-1zM504 260h1v1h-1zM111 261h1v1h-1zM140 261h1v1h-1zM148 261h1v1h-1zM167 261h1v1h-1zM215 261h1v1h-1zM392 261h1v1h-1zM399 261h1v1h-1zM57 262h1v1h-1zM71 262h1v1h-1zM109 262h1v1h-1zM290 262h1v1h-1zM548 262h1v1h-1zM1 263h1v1h-1zM179 263h1v1h-1zM298 263h1v1h-1zM317 263h1v1h-1zM333 263h1v1h-1zM348 263h1v1h-1zM367 263h1v1h-1zM383 263h1v1h-1zM412 263h1v1h-1zM2 264h1v1h-1zM123 264h1v1h-1zM249 264h1v1h-1zM264 264h1v1h-1zM293 264h1v1h-1zM314 264h1v1h-1zM336 264h1v1h-1zM414 264h1v1h-1zM424 264h1v1h-1zM84 265h1v1h-1zM124 265h1v1h-1zM433 265h1v1h-1zM116 266h1v1h-1zM121 266h1v1h-1zM151 266h1v1h-1zM254 266h1v1h-1zM370 266h1v1h-1zM386 266h1v1h-1zM511 266h1v1h-1zM274 267h1v1h-1zM283 267h1v1h-1zM297 267h1v1h-1zM319 267h1v1h-1zM353 267h1v1h-1zM456 267h1v1h-1zM12 268h1v1h-1zM72 268h1v1h-1zM101 268h1v1h-1zM107 268h1v1h-1zM256 268h1v1h-1zM355 268h1v1h-1zM468 268h1v1h-1zM486 268h1v1h-1zM193 269h1v1h-1zM202 269h1v1h-1zM218 269h1v1h-1zM290 269h1v1h-1zM292 269h1v1h-1zM422 269h1v1h-1zM427 269h1v1h-1zM433 269h1v1h-1zM449 269h1v1h-1zM11 270h1v1h-1zM58 270h1v1h-1zM72 270h1v1h-1zM74 270h1v1h-1zM267 270h1v1h-1zM310 270h1v1h-1zM466 270h1v1h-1zM94 271h1v1h-1zM131 271h1v1h-1zM256 271h1v1h-1zM322 271h1v1h-1zM401 271h1v1h-1zM430 271h1v1h-1zM471 271h1v1h-1zM560 271h1v1h-1zM6 272h1v1h-1zM122 272h1v1h-1zM287 272h1v1h-1zM294 272h1v1h-1zM360 272h1v1h-1zM445 272h1v1h-1zM383 273h1v1h-1zM402 273h1v1h-1zM22 274h1v1h-1zM68 274h1v1h-1zM71 274h1v1h-1zM185 274h1v1h-1zM237 274h1v1h-1zM257 274h1v1h-1zM275 274h1v1h-1zM317 274h1v1h-1zM363 274h1v1h-1zM376 274h1v1h-1zM382 274h1v1h-1zM418 274h1v1h-1zM535 274h1v1h-1zM378 275h1v1h-1zM398 275h1v1h-1zM463 275h1v1h-1zM519 275h1v1h-1zM101 276h1v1h-1zM256 276h1v1h-1zM258 276h1v1h-1zM353 276h1v1h-1zM355 276h1v1h-1zM363 276h1v1h-1zM375 276h1v1h-1zM398 276h1v1h-1zM412 276h1v1h-1zM519 276h1v1h-1zM145 277h1v1h-1zM291 277h1v1h-1zM321 277h1v1h-1zM83 278h1v1h-1zM87 278h1v1h-1zM140 278h1v1h-1zM240 278h1v1h-1zM242 278h1v1h-1zM247 278h1v1h-1zM259 278h1v1h-1zM270 278h1v1h-1zM330 278h1v1h-1zM383 278h1v1h-1zM415 278h1v1h-1zM503 278h1v1h-1zM22 279h1v1h-1zM72 279h1v1h-1zM217 279h1v1h-1zM219 279h1v1h-1zM268 279h1v1h-1zM270 279h1v1h-1zM386 279h1v1h-1zM2 280h1v1h-1zM137 280h1v1h-1zM154 280h1v1h-1zM236 280h1v1h-1zM256 280h1v1h-1zM266 280h1v1h-1zM289 280h1v1h-1zM388 280h1v1h-1zM525 280h1v1h-1zM13 281h1v1h-1zM100 281h1v1h-1zM240 281h1v1h-1zM326 281h1v1h-1zM353 281h1v1h-1zM379 281h1v1h-1zM567 281h1v1h-1zM103 282h1v1h-1zM189 282h1v1h-1zM212 282h1v1h-1zM279 282h1v1h-1zM311 282h1v1h-1zM349 282h1v1h-1zM374 282h1v1h-1zM420 282h1v1h-1zM432 282h1v1h-1zM438 282h1v1h-1zM496 282h1v1h-1zM79 283h1v1h-1zM88 283h1v1h-1zM204 283h1v1h-1zM233 283h1v1h-1zM269 283h1v1h-1zM271 283h1v1h-1zM340 283h1v1h-1zM342 283h1v1h-1zM382 283h1v1h-1zM506 283h1v1h-1zM512 283h1v1h-1zM1 284h1v1h-1zM296 284h1v1h-1zM335 284h1v1h-1zM359 284h1v1h-1zM402 284h1v1h-1zM565 284h1v1h-1zM220 285h1v1h-1zM284 285h1v1h-1zM336 285h1v1h-1zM357 285h1v1h-1zM424 285h1v1h-1zM434 285h1v1h-1zM134 286h1v1h-1zM187 286h1v1h-1zM226 286h1v1h-1zM236 286h1v1h-1zM322 286h1v1h-1zM354 286h1v1h-1zM404 286h1v1h-1zM56 287h1v1h-1zM141 287h1v1h-1zM338 287h1v1h-1zM408 288h1v1h-1zM416 288h1v1h-1zM472 288h1v1h-1zM562 288h1v1h-1zM44 289h1v1h-1zM159 289h1v1h-1zM227 289h1v1h-1zM275 289h1v1h-1zM355 289h1v1h-1zM428 289h1v1h-1zM561 289h1v1h-1zM67 290h1v1h-1zM361 290h1v1h-1zM368 290h1v1h-1zM389 290h1v1h-1zM132 291h1v1h-1zM321 291h1v1h-1zM326 291h1v1h-1zM332 291h1v1h-1zM377 291h1v1h-1zM224 292h1v1h-1zM246 292h1v1h-1zM257 292h1v1h-1zM265 292h1v1h-1zM314 292h1v1h-1zM443 292h1v1h-1zM566 292h1v1h-1zM28 293h1v1h-1zM150 293h1v1h-1zM155 293h1v1h-1zM228 293h1v1h-1zM321 293h1v1h-1zM399 293h1v1h-1zM407 293h1v1h-1zM460 293h1v1h-1zM4 294h1v1h-1zM114 294h1v1h-1zM203 294h1v1h-1zM320 294h1v1h-1zM387 294h1v1h-1zM481 294h1v1h-1zM506 294h1v1h-1zM215 295h1v1h-1zM259 295h1v1h-1zM298 295h1v1h-1zM316 295h1v1h-1zM341 295h1v1h-1zM18 296h1v1h-1zM72 296h1v1h-1zM89 296h1v1h-1zM422 296h1v1h-1zM271 297h1v1h-1zM474 297h1v1h-1zM506 297h1v1h-1zM104 298h1v1h-1zM140 298h1v1h-1zM200 298h1v1h-1zM268 298h1v1h-1zM317 298h1v1h-1zM362 298h1v1h-1zM369 298h1v1h-1zM404 298h1v1h-1zM465 298h1v1h-1zM43 299h1v1h-1zM77 299h1v1h-1zM141 299h1v1h-1zM203 299h1v1h-1zM223 299h1v1h-1zM299 299h1v1h-1zM323 299h1v1h-1zM399 299h1v1h-1zM140 300h1v1h-1zM175 300h1v1h-1zM193 300h1v1h-1zM249 300h1v1h-1zM429 300h1v1h-1zM89 301h1v1h-1zM219 301h1v1h-1zM255 301h1v1h-1zM264 301h1v1h-1zM305 301h1v1h-1zM315 301h1v1h-1zM340 301h1v1h-1zM393 301h1v1h-1zM73 302h1v1h-1zM115 302h1v1h-1zM129 302h1v1h-1zM214 302h1v1h-1zM342 302h1v1h-1zM436 302h1v1h-1zM127 303h1v1h-1zM188 303h1v1h-1zM281 303h1v1h-1zM443 303h1v1h-1zM30 304h1v1h-1zM91 304h1v1h-1zM98 304h1v1h-1zM205 304h1v1h-1zM270 304h1v1h-1zM272 304h1v1h-1zM345 304h1v1h-1zM375 304h1v1h-1zM431 304h1v1h-1zM520 304h1v1h-1zM78 305h1v1h-1zM87 305h1v1h-1zM191 305h1v1h-1zM255 305h1v1h-1zM260 305h1v1h-1zM435 305h1v1h-1zM451 305h1v1h-1zM468 305h1v1h-1zM546 305h1v1h-1zM548 305h1v1h-1zM551 305h1v1h-1zM55 306h1v1h-1zM296 306h1v1h-1zM356 306h1v1h-1zM38 307h1v1h-1zM46 307h1v1h-1zM83 307h1v1h-1zM149 307h1v1h-1zM238 307h1v1h-1zM251 307h1v1h-1zM296 307h1v1h-1zM326 307h1v1h-1zM350 307h1v1h-1zM457 307h1v1h-1zM57 308h1v1h-1zM122 308h1v1h-1zM214 308h1v1h-1zM298 308h1v1h-1zM431 308h1v1h-1zM549 308h1v1h-1zM55 309h1v1h-1zM163 309h1v1h-1zM315 309h1v1h-1zM319 309h1v1h-1zM373 309h1v1h-1zM423 309h1v1h-1zM475 309h1v1h-1zM157 310h1v1h-1zM286 310h1v1h-1zM314 310h1v1h-1zM332 310h1v1h-1zM355 310h1v1h-1zM486 310h1v1h-1zM497 310h1v1h-1zM516 310h1v1h-1zM535 310h1v1h-1zM254 311h1v1h-1zM338 311h1v1h-1zM51 312h1v1h-1zM246 312h1v1h-1zM250 312h1v1h-1zM257 312h1v1h-1zM371 312h1v1h-1zM399 312h1v1h-1zM502 312h1v1h-1zM126 313h1v1h-1zM266 313h1v1h-1zM434 313h1v1h-1zM453 313h1v1h-1zM541 313h1v1h-1zM184 314h1v1h-1zM291 314h1v1h-1zM342 314h1v1h-1zM550 314h1v1h-1zM14 315h1v1h-1zM171 315h1v1h-1zM238 315h1v1h-1zM435 315h1v1h-1zM452 315h1v1h-1zM457 315h1v1h-1zM460 315h1v1h-1zM94 316h1v1h-1zM244 316h1v1h-1zM543 316h1v1h-1zM184 317h1v1h-1zM200 317h1v1h-1zM262 317h1v1h-1zM272 317h1v1h-1zM309 317h1v1h-1zM387 317h1v1h-1zM477 317h1v1h-1zM6 318h1v1h-1zM52 318h1v1h-1zM101 318h1v1h-1zM223 318h1v1h-1zM247 318h1v1h-1zM290 318h1v1h-1zM305 318h1v1h-1zM354 318h1v1h-1zM444 318h1v1h-1zM63 319h1v1h-1zM132 319h1v1h-1zM153 319h1v1h-1zM229 319h1v1h-1zM413 319h1v1h-1zM455 319h1v1h-1zM500 319h1v1h-1z"/><path fill="#3b392f" d="M146 0h1v1h-1zM198 0h1v1h-1zM243 0h1v1h-1zM319 0h1v1h-1zM368 0h1v1h-1zM390 0h1v1h-1zM526 0h1v1h-1zM50 1h1v1h-1zM79 1h1v1h-1zM112 1h1v1h-1zM136 1h1v1h-1zM160 1h1v1h-1zM164 1h1v1h-1zM181 1h1v1h-1zM295 1h1v1h-1zM349 1h1v1h-1zM368 1h1v1h-1zM484 1h1v1h-1zM557 1h1v1h-1zM116 2h1v1h-1zM140 2h1v1h-1zM156 2h1v1h-1zM196 2h1v1h-1zM200 2h1v1h-1zM266 2h1v1h-1zM313 2h1v1h-1zM335 2h1v1h-1zM407 2h1v1h-1zM427 2h1v1h-1zM14 3h1v1h-1zM25 3h1v1h-1zM28 3h1v1h-1zM69 3h1v1h-1zM149 3h1v1h-1zM211 3h1v1h-1zM252 3h1v1h-1zM270 3h1v1h-1zM407 3h1v1h-1zM431 3h1v1h-1zM4 4h1v1h-1zM32 4h1v1h-1zM48 4h3v1h-3zM60 4h1v1h-1zM88 4h1v1h-1zM96 4h1v1h-1zM137 4h1v1h-1zM147 4h1v1h-1zM168 4h1v1h-1zM173 4h1v1h-1zM211 4h1v1h-1zM225 4h1v1h-1zM284 4h1v1h-1zM305 4h1v1h-1zM371 4h1v1h-1zM432 4h1v1h-1zM448 4h1v1h-1zM459 4h1v1h-1zM519 4h1v1h-1zM5 5h1v1h-1zM35 5h1v1h-1zM67 5h1v1h-1zM95 5h1v1h-1zM115 5h1v1h-1zM141 5h2v1h-2zM190 5h1v1h-1zM213 5h1v1h-1zM217 5h1v1h-1zM269 5h1v1h-1zM343 5h1v1h-1zM429 5h1v1h-1zM511 5h1v1h-1zM23 6h1v1h-1zM40 6h1v1h-1zM43 6h2v1h-2zM103 6h1v1h-1zM110 6h1v1h-1zM126 6h1v1h-1zM156 6h1v1h-1zM161 6h1v1h-1zM249 6h1v1h-1zM269 6h1v1h-1zM326 6h1v1h-1zM406 6h1v1h-1zM462 6h1v1h-1zM0 7h2v1h-2zM32 7h2v1h-2zM79 7h1v1h-1zM104 7h1v1h-1zM144 7h1v1h-1zM158 7h1v1h-1zM181 7h1v1h-1zM273 7h1v1h-1zM319 7h1v1h-1zM329 7h1v1h-1zM339 7h1v1h-1zM421 7h1v1h-1zM449 7h1v1h-1zM484 7h1v1h-1zM517 7h1v1h-1zM543 7h1v1h-1zM2 8h1v1h-1zM34 8h1v1h-1zM43 8h1v1h-1zM54 8h1v1h-1zM58 8h1v1h-1zM63 8h1v1h-1zM83 8h1v1h-1zM89 8h1v1h-1zM96 8h1v1h-1zM129 8h1v1h-1zM222 8h1v1h-1zM238 8h1v1h-1zM271 8h1v1h-1zM307 8h1v1h-1zM313 8h1v1h-1zM317 8h1v1h-1zM340 8h1v1h-1zM352 8h1v1h-1zM359 8h1v1h-1zM424 8h1v1h-1zM451 8h1v1h-1zM537 8h1v1h-1zM7 9h1v1h-1zM20 9h1v1h-1zM106 9h1v1h-1zM110 9h1v1h-1zM137 9h1v1h-1zM146 9h1v1h-1zM161 9h1v1h-1zM163 9h1v1h-1zM227 9h1v1h-1zM250 9h1v1h-1zM283 9h1v1h-1zM286 9h1v1h-1zM305 9h1v1h-1zM370 9h1v1h-1zM383 9h1v1h-1zM491 9h1v1h-1zM83 10h1v1h-1zM97 10h1v1h-1zM107 10h1v1h-1zM142 10h1v1h-1zM194 10h1v1h-1zM217 10h1v1h-1zM219 10h1v1h-1zM244 10h1v1h-1zM286 10h1v1h-1zM306 10h1v1h-1zM318 10h1v1h-1zM384 10h1v1h-1zM493 10h1v1h-1zM554 10h1v1h-1zM23 11h1v1h-1zM46 11h1v1h-1zM53 11h1v1h-1zM127 11h1v1h-1zM138 11h1v1h-1zM172 11h1v1h-1zM186 11h1v1h-1zM201 11h1v1h-1zM238 11h1v1h-1zM284 11h1v1h-1zM443 11h1v1h-1zM451 11h1v1h-1zM466 11h1v1h-1zM485 11h1v1h-1zM552 11h1v1h-1zM31 12h1v1h-1zM40 12h1v1h-1zM81 12h2v1h-2zM97 12h1v1h-1zM173 12h1v1h-1zM236 12h1v1h-1zM253 12h1v1h-1zM338 12h1v1h-1zM384 12h1v1h-1zM475 12h1v1h-1zM21 13h1v1h-1zM34 13h1v1h-1zM58 13h1v1h-1zM65 13h1v1h-1zM113 13h1v1h-1zM191 13h1v1h-1zM263 13h1v1h-1zM305 13h1v1h-1zM363 13h1v1h-1zM402 13h1v1h-1zM416 13h1v1h-1zM440 13h1v1h-1zM465 13h1v1h-1zM8 14h1v1h-1zM10 14h1v1h-1zM27 14h1v1h-1zM30 14h1v1h-1zM33 14h2v1h-2zM62 14h1v1h-1zM76 14h1v1h-1zM102 14h1v1h-1zM234 14h1v1h-1zM259 14h1v1h-1zM328 14h1v1h-1zM404 14h1v1h-1zM440 14h1v1h-1zM454 14h1v1h-1zM492 14h1v1h-1zM523 14h1v1h-1zM14 15h1v1h-1zM21 15h1v1h-1zM53 15h1v1h-1zM66 15h1v1h-1zM68 15h1v1h-1zM98 15h1v1h-1zM117 15h1v1h-1zM142 15h1v1h-1zM185 15h2v1h-2zM283 15h1v1h-1zM300 15h1v1h-1zM309 15h1v1h-1zM315 15h1v1h-1zM347 15h1v1h-1zM425 15h1v1h-1zM10 16h1v1h-1zM15 16h1v1h-1zM37 16h1v1h-1zM86 16h1v1h-1zM123 16h1v1h-1zM133 16h1v1h-1zM154 16h1v1h-1zM186 16h1v1h-1zM199 16h1v1h-1zM210 16h1v1h-1zM244 16h1v1h-1zM265 16h1v1h-1zM273 16h1v1h-1zM330 16h1v1h-1zM371 16h1v1h-1zM463 16h1v1h-1zM15 17h1v1h-1zM32 17h1v1h-1zM51 17h1v1h-1zM87 17h1v1h-1zM108 17h1v1h-1zM113 17h1v1h-1zM129 17h1v1h-1zM169 17h1v1h-1zM189 17h1v1h-1zM262 17h1v1h-1zM328 17h1v1h-1zM353 17h1v1h-1zM361 17h1v1h-1zM386 17h1v1h-1zM410 17h1v1h-1zM16 18h1v1h-1zM20 18h1v1h-1zM24 18h1v1h-1zM37 18h1v1h-1zM41 18h1v1h-1zM55 18h1v1h-1zM63 18h1v1h-1zM69 18h1v1h-1zM94 18h1v1h-1zM103 18h1v1h-1zM109 18h1v1h-1zM120 18h1v1h-1zM139 18h2v1h-2zM143 18h1v1h-1zM185 18h1v1h-1zM195 18h1v1h-1zM287 18h1v1h-1zM304 18h1v1h-1zM327 18h1v1h-1zM339 18h1v1h-1zM408 18h1v1h-1zM524 18h1v1h-1zM565 18h1v1h-1zM29 19h1v1h-1zM64 19h1v1h-1zM83 19h1v1h-1zM99 19h1v1h-1zM140 19h1v1h-1zM148 19h1v1h-1zM164 19h1v1h-1zM200 19h1v1h-1zM229 19h1v1h-1zM256 19h1v1h-1zM369 19h1v1h-1zM413 19h1v1h-1zM425 19h1v1h-1zM10 20h1v1h-1zM26 20h1v1h-1zM29 20h1v1h-1zM57 20h1v1h-1zM130 20h1v1h-1zM137 20h1v1h-1zM139 20h1v1h-1zM174 20h1v1h-1zM243 20h1v1h-1zM301 20h1v1h-1zM350 20h1v1h-1zM354 20h2v1h-2zM386 20h1v1h-1zM438 20h1v1h-1zM545 20h1v1h-1zM549 20h1v1h-1zM64 21h1v1h-1zM66 21h1v1h-1zM74 21h1v1h-1zM89 21h1v1h-1zM103 21h1v1h-1zM116 21h2v1h-2zM153 21h1v1h-1zM161 21h1v1h-1zM167 21h1v1h-1zM183 21h1v1h-1zM197 21h1v1h-1zM299 21h1v1h-1zM308 21h1v1h-1zM328 21h1v1h-1zM369 21h2v1h-2zM372 21h1v1h-1zM377 21h1v1h-1zM389 21h1v1h-1zM421 21h1v1h-1zM554 21h1v1h-1zM11 22h1v1h-1zM18 22h1v1h-1zM39 22h1v1h-1zM53 22h1v1h-1zM95 22h2v1h-2zM101 22h1v1h-1zM104 22h1v1h-1zM125 22h1v1h-1zM173 22h1v1h-1zM176 22h1v1h-1zM185 22h1v1h-1zM211 22h1v1h-1zM236 22h1v1h-1zM244 22h1v1h-1zM257 22h2v1h-2zM266 22h1v1h-1zM353 22h1v1h-1zM545 22h1v1h-1zM6 23h1v1h-1zM10 23h1v1h-1zM16 23h1v1h-1zM108 23h1v1h-1zM119 23h1v1h-1zM125 23h1v1h-1zM188 23h1v1h-1zM208 23h1v1h-1zM245 23h1v1h-1zM265 23h1v1h-1zM290 23h1v1h-1zM328 23h1v1h-1zM361 23h1v1h-1zM365 23h1v1h-1zM370 23h1v1h-1zM388 23h1v1h-1zM459 23h1v1h-1zM20 24h1v1h-1zM37 24h1v1h-1zM54 24h1v1h-1zM57 24h1v1h-1zM62 24h1v1h-1zM68 24h1v1h-1zM103 24h1v1h-1zM126 24h1v1h-1zM129 24h1v1h-1zM136 24h1v1h-1zM185 24h1v1h-1zM187 24h1v1h-1zM217 24h1v1h-1zM224 24h1v1h-1zM242 24h1v1h-1zM252 24h1v1h-1zM300 24h1v1h-1zM310 24h1v1h-1zM439 24h1v1h-1zM2 25h1v1h-1zM4 25h1v1h-1zM11 25h1v1h-1zM29 25h1v1h-1zM31 25h1v1h-1zM36 25h2v1h-2zM53 25h1v1h-1zM60 25h1v1h-1zM64 25h1v1h-1zM66 25h1v1h-1zM108 25h1v1h-1zM117 25h1v1h-1zM129 25h1v1h-1zM201 25h1v1h-1zM219 25h1v1h-1zM231 25h1v1h-1zM305 25h1v1h-1zM340 25h1v1h-1zM362 25h1v1h-1zM418 25h1v1h-1zM426 25h1v1h-1zM431 25h1v1h-1zM453 25h1v1h-1zM518 25h1v1h-1zM522 25h1v1h-1zM530 25h1v1h-1zM13 26h1v1h-1zM17 26h2v1h-2zM25 26h1v1h-1zM37 26h1v1h-1zM41 26h1v1h-1zM62 26h1v1h-1zM66 26h1v1h-1zM71 26h1v1h-1zM76 26h1v1h-1zM80 26h1v1h-1zM94 26h1v1h-1zM105 26h1v1h-1zM125 26h1v1h-1zM154 26h1v1h-1zM218 26h1v1h-1zM221 26h1v1h-1zM224 26h1v1h-1zM235 26h1v1h-1zM242 26h1v1h-1zM301 26h1v1h-1zM336 26h1v1h-1zM370 26h1v1h-1zM436 26h1v1h-1zM442 26h1v1h-1zM557 26h1v1h-1zM16 27h1v1h-1zM22 27h1v1h-1zM32 27h1v1h-1zM49 27h1v1h-1zM65 27h2v1h-2zM80 27h1v1h-1zM92 27h1v1h-1zM120 27h1v1h-1zM128 27h1v1h-1zM132 27h2v1h-2zM171 27h1v1h-1zM184 27h1v1h-1zM214 27h2v1h-2zM223 27h2v1h-2zM226 27h2v1h-2zM238 27h1v1h-1zM248 27h1v1h-1zM261 27h1v1h-1zM297 27h1v1h-1zM305 27h1v1h-1zM313 27h1v1h-1zM19 28h1v1h-1zM28 28h2v1h-2zM84 28h1v1h-1zM87 28h1v1h-1zM101 28h1v1h-1zM110 28h1v1h-1zM115 28h1v1h-1zM119 28h1v1h-1zM138 28h1v1h-1zM141 28h1v1h-1zM149 28h1v1h-1zM154 28h1v1h-1zM175 28h1v1h-1zM192 28h1v1h-1zM201 28h1v1h-1zM215 28h1v1h-1zM218 28h1v1h-1zM220 28h1v1h-1zM226 28h1v1h-1zM228 28h2v1h-2zM231 28h2v1h-2zM244 28h1v1h-1zM305 28h1v1h-1zM23 29h1v1h-1zM59 29h1v1h-1zM66 29h1v1h-1zM72 29h1v1h-1zM76 29h1v1h-1zM146 29h1v1h-1zM162 29h1v1h-1zM209 29h1v1h-1zM213 29h1v1h-1zM215 29h1v1h-1zM228 29h1v1h-1zM231 29h2v1h-2zM255 29h1v1h-1zM267 29h1v1h-1zM273 29h1v1h-1zM320 29h1v1h-1zM342 29h1v1h-1zM350 29h1v1h-1zM447 29h1v1h-1zM497 29h2v1h-2zM511 29h1v1h-1zM532 29h1v1h-1zM16 30h1v1h-1zM74 30h1v1h-1zM102 30h1v1h-1zM128 30h1v1h-1zM146 30h1v1h-1zM166 30h1v1h-1zM173 30h1v1h-1zM210 30h2v1h-2zM230 30h2v1h-2zM235 30h2v1h-2zM250 30h1v1h-1zM255 30h2v1h-2zM367 30h1v1h-1zM380 30h1v1h-1zM487 30h1v1h-1zM527 30h1v1h-1zM30 31h1v1h-1zM56 31h1v1h-1zM66 31h1v1h-1zM79 31h1v1h-1zM119 31h1v1h-1zM130 31h1v1h-1zM197 31h1v1h-1zM231 31h1v1h-1zM233 31h1v1h-1zM237 31h3v1h-3zM294 31h1v1h-1zM297 31h1v1h-1zM310 31h3v1h-3zM341 31h1v1h-1zM418 31h1v1h-1zM552 31h1v1h-1zM19 32h1v1h-1zM21 32h1v1h-1zM34 32h1v1h-1zM46 32h1v1h-1zM53 32h1v1h-1zM61 32h2v1h-2zM101 32h1v1h-1zM113 32h1v1h-1zM205 32h1v1h-1zM234 32h1v1h-1zM258 32h1v1h-1zM267 32h1v1h-1zM287 32h1v1h-1zM289 32h1v1h-1zM291 32h1v1h-1zM294 32h2v1h-2zM297 32h4v1h-4zM306 32h1v1h-1zM309 32h3v1h-3zM313 32h1v1h-1zM317 32h1v1h-1zM320 32h3v1h-3zM349 32h1v1h-1zM441 32h1v1h-1zM538 32h1v1h-1zM547 32h1v1h-1zM10 33h1v1h-1zM23 33h1v1h-1zM72 33h1v1h-1zM90 33h1v1h-1zM115 33h1v1h-1zM117 33h1v1h-1zM126 33h1v1h-1zM204 33h1v1h-1zM206 33h1v1h-1zM223 33h1v1h-1zM237 33h3v1h-3zM270 33h1v1h-1zM284 33h1v1h-1zM287 33h4v1h-4zM292 33h1v1h-1zM294 33h2v1h-2zM298 33h2v1h-2zM302 33h5v1h-5zM308 33h1v1h-1zM315 33h3v1h-3zM319 33h1v1h-1zM321 33h3v1h-3zM326 33h1v1h-1zM329 33h1v1h-1zM389 33h1v1h-1zM410 33h1v1h-1zM456 33h1v1h-1zM492 33h1v1h-1zM546 33h1v1h-1zM51 34h1v1h-1zM54 34h1v1h-1zM84 34h1v1h-1zM89 34h1v1h-1zM103 34h1v1h-1zM120 34h1v1h-1zM147 34h1v1h-1zM169 34h1v1h-1zM181 34h1v1h-1zM186 34h1v1h-1zM194 34h1v1h-1zM202 34h1v1h-1zM204 34h2v1h-2zM242 34h1v1h-1zM280 34h3v1h-3zM285 34h4v1h-4zM290 34h1v1h-1zM299 34h1v1h-1zM315 34h4v1h-4zM322 34h2v1h-2zM327 34h1v1h-1zM330 34h3v1h-3zM335 34h1v1h-1zM338 34h1v1h-1zM360 34h1v1h-1zM444 34h1v1h-1zM2 35h1v1h-1zM81 35h1v1h-1zM94 35h1v1h-1zM139 35h1v1h-1zM190 35h1v1h-1zM202 35h1v1h-1zM205 35h1v1h-1zM210 35h1v1h-1zM214 35h1v1h-1zM242 35h1v1h-1zM245 35h1v1h-1zM266 35h1v1h-1zM273 35h3v1h-3zM277 35h1v1h-1zM279 35h1v1h-1zM281 35h1v1h-1zM284 35h1v1h-1zM295 35h1v1h-1zM310 35h1v1h-1zM322 35h1v1h-1zM330 35h1v1h-1zM334 35h2v1h-2zM349 35h1v1h-1zM528 35h1v1h-1zM4 36h1v1h-1zM32 36h1v1h-1zM50 36h2v1h-2zM59 36h1v1h-1zM136 36h1v1h-1zM153 36h1v1h-1zM169 36h1v1h-1zM171 36h1v1h-1zM203 36h1v1h-1zM234 36h1v1h-1zM244 36h1v1h-1zM272 36h1v1h-1zM275 36h1v1h-1zM278 36h1v1h-1zM331 36h2v1h-2zM335 36h2v1h-2zM338 36h1v1h-1zM340 36h1v1h-1zM384 36h1v1h-1zM460 36h1v1h-1zM549 36h1v1h-1zM9 37h1v1h-1zM31 37h1v1h-1zM38 37h1v1h-1zM50 37h1v1h-1zM62 37h1v1h-1zM71 37h1v1h-1zM111 37h1v1h-1zM128 37h1v1h-1zM141 37h1v1h-1zM147 37h1v1h-1zM162 37h1v1h-1zM201 37h2v1h-2zM235 37h1v1h-1zM245 37h1v1h-1zM247 37h1v1h-1zM265 37h1v1h-1zM267 37h2v1h-2zM280 37h1v1h-1zM327 37h1v1h-1zM332 37h5v1h-5zM338 37h1v1h-1zM344 37h1v1h-1zM357 37h2v1h-2zM369 37h1v1h-1zM444 37h1v1h-1zM45 38h1v1h-1zM85 38h1v1h-1zM87 38h1v1h-1zM120 38h1v1h-1zM133 38h2v1h-2zM172 38h1v1h-1zM177 38h1v1h-1zM198 38h1v1h-1zM200 38h3v1h-3zM257 38h1v1h-1zM266 38h6v1h-6zM277 38h1v1h-1zM311 38h1v1h-1zM335 38h1v1h-1zM338 38h2v1h-2zM341 38h1v1h-1zM343 38h2v1h-2zM346 38h1v1h-1zM371 38h1v1h-1zM400 38h1v1h-1zM403 38h1v1h-1zM528 38h1v1h-1zM32 39h1v1h-1zM36 39h1v1h-1zM40 39h1v1h-1zM51 39h1v1h-1zM72 39h1v1h-1zM78 39h1v1h-1zM93 39h1v1h-1zM131 39h1v1h-1zM138 39h1v1h-1zM156 39h1v1h-1zM162 39h1v1h-1zM173 39h1v1h-1zM186 39h1v1h-1zM190 39h1v1h-1zM197 39h1v1h-1zM222 39h1v1h-1zM245 39h1v1h-1zM249 39h1v1h-1zM253 39h1v1h-1zM263 39h6v1h-6zM305 39h1v1h-1zM340 39h2v1h-2zM343 39h1v1h-1zM346 39h1v1h-1zM441 39h1v1h-1zM446 39h1v1h-1zM479 39h1v1h-1zM493 39h1v1h-1zM540 39h1v1h-1zM31 40h1v1h-1zM38 40h1v1h-1zM81 40h1v1h-1zM140 40h1v1h-1zM150 40h1v1h-1zM163 40h1v1h-1zM187 40h1v1h-1zM227 40h1v1h-1zM234 40h1v1h-1zM240 40h1v1h-1zM248 40h1v1h-1zM250 40h1v1h-1zM252 40h1v1h-1zM260 40h2v1h-2zM263 40h4v1h-4zM307 40h1v1h-1zM336 40h1v1h-1zM347 40h3v1h-3zM387 40h1v1h-1zM437 40h1v1h-1zM487 40h1v1h-1zM37 41h1v1h-1zM71 41h1v1h-1zM108 41h2v1h-2zM125 41h1v1h-1zM186 41h1v1h-1zM192 41h1v1h-1zM196 41h1v1h-1zM213 41h1v1h-1zM218 41h1v1h-1zM228 41h1v1h-1zM232 41h1v1h-1zM246 41h1v1h-1zM258 41h1v1h-1zM262 41h1v1h-1zM319 41h1v1h-1zM322 41h1v1h-1zM337 41h1v1h-1zM344 41h2v1h-2zM347 41h3v1h-3zM427 41h1v1h-1zM42 42h1v1h-1zM87 42h1v1h-1zM98 42h1v1h-1zM123 42h1v1h-1zM185 42h2v1h-2zM194 42h1v1h-1zM241 42h1v1h-1zM254 42h4v1h-4zM263 42h1v1h-1zM280 42h1v1h-1zM307 42h1v1h-1zM312 42h1v1h-1zM317 42h1v1h-1zM325 42h1v1h-1zM347 42h1v1h-1zM350 42h1v1h-1zM352 42h2v1h-2zM355 42h1v1h-1zM370 42h1v1h-1zM410 42h1v1h-1zM479 42h1v1h-1zM563 42h1v1h-1zM17 43h1v1h-1zM29 43h1v1h-1zM46 43h1v1h-1zM90 43h1v1h-1zM118 43h1v1h-1zM127 43h1v1h-1zM161 43h1v1h-1zM172 43h1v1h-1zM185 43h1v1h-1zM187 43h1v1h-1zM193 43h3v1h-3zM210 43h1v1h-1zM216 43h1v1h-1zM228 43h1v1h-1zM254 43h2v1h-2zM258 43h2v1h-2zM273 43h1v1h-1zM280 43h1v1h-1zM290 43h1v1h-1zM347 43h3v1h-3zM351 43h1v1h-1zM353 43h1v1h-1zM355 43h1v1h-1zM381 43h2v1h-2zM407 43h1v1h-1zM493 43h1v1h-1zM504 43h1v1h-1zM1 44h1v1h-1zM18 44h1v1h-1zM47 44h1v1h-1zM64 44h1v1h-1zM89 44h1v1h-1zM95 44h1v1h-1zM108 44h1v1h-1zM116 44h1v1h-1zM185 44h2v1h-2zM195 44h1v1h-1zM224 44h1v1h-1zM242 44h1v1h-1zM251 44h1v1h-1zM265 44h1v1h-1zM273 44h1v1h-1zM353 44h1v1h-1zM393 44h1v1h-1zM421 44h1v1h-1zM492 44h1v1h-1zM502 44h1v1h-1zM556 44h1v1h-1zM559 44h1v1h-1zM18 45h1v1h-1zM52 45h1v1h-1zM102 45h1v1h-1zM111 45h1v1h-1zM125 45h1v1h-1zM208 45h1v1h-1zM251 45h1v1h-1zM253 45h1v1h-1zM255 45h2v1h-2zM286 45h1v1h-1zM301 45h2v1h-2zM308 45h1v1h-1zM354 45h4v1h-4zM359 45h1v1h-1zM467 45h1v1h-1zM8 46h1v1h-1zM16 46h1v1h-1zM29 46h1v1h-1zM72 46h1v1h-1zM77 46h1v1h-1zM89 46h1v1h-1zM163 46h1v1h-1zM170 46h1v1h-1zM173 46h1v1h-1zM177 46h1v1h-1zM185 46h1v1h-1zM192 46h1v1h-1zM238 46h1v1h-1zM248 46h3v1h-3zM252 46h1v1h-1zM318 46h1v1h-1zM355 46h3v1h-3zM359 46h2v1h-2zM374 46h1v1h-1zM410 46h1v1h-1zM425 46h1v1h-1zM2 47h1v1h-1zM28 47h1v1h-1zM61 47h1v1h-1zM116 47h1v1h-1zM123 47h1v1h-1zM152 47h1v1h-1zM165 47h1v1h-1zM180 47h1v1h-1zM185 47h2v1h-2zM199 47h1v1h-1zM211 47h1v1h-1zM226 47h1v1h-1zM244 47h1v1h-1zM246 47h2v1h-2zM250 47h2v1h-2zM254 47h1v1h-1zM265 47h1v1h-1zM337 47h1v1h-1zM340 47h1v1h-1zM358 47h2v1h-2zM361 47h1v1h-1zM411 47h1v1h-1zM498 47h1v1h-1zM546 47h1v1h-1zM1 48h1v1h-1zM35 48h1v1h-1zM63 48h1v1h-1zM65 48h1v1h-1zM74 48h1v1h-1zM184 48h4v1h-4zM231 48h1v1h-1zM245 48h1v1h-1zM249 48h1v1h-1zM256 48h1v1h-1zM258 48h1v1h-1zM317 48h1v1h-1zM319 48h1v1h-1zM341 48h1v1h-1zM359 48h1v1h-1zM363 48h2v1h-2zM408 48h1v1h-1zM543 48h1v1h-1zM547 48h1v1h-1zM32 49h1v1h-1zM38 49h1v1h-1zM66 49h1v1h-1zM73 49h1v1h-1zM102 49h2v1h-2zM116 49h1v1h-1zM135 49h1v1h-1zM174 49h1v1h-1zM179 49h1v1h-1zM185 49h1v1h-1zM187 49h1v1h-1zM195 49h1v1h-1zM202 49h1v1h-1zM222 49h1v1h-1zM243 49h5v1h-5zM284 49h1v1h-1zM303 49h1v1h-1zM361 49h1v1h-1zM365 49h1v1h-1zM405 49h1v1h-1zM451 49h1v1h-1zM491 49h1v1h-1zM0 50h1v1h-1zM7 50h1v1h-1zM36 50h1v1h-1zM63 50h1v1h-1zM86 50h1v1h-1zM107 50h1v1h-1zM130 50h1v1h-1zM134 50h1v1h-1zM144 50h1v1h-1zM162 50h1v1h-1zM166 50h1v1h-1zM187 50h1v1h-1zM199 50h1v1h-1zM243 50h1v1h-1zM245 50h3v1h-3zM263 50h1v1h-1zM273 50h1v1h-1zM289 50h1v1h-1zM327 50h1v1h-1zM331 50h1v1h-1zM356 50h1v1h-1zM358 50h1v1h-1zM363 50h3v1h-3zM367 50h1v1h-1zM415 50h1v1h-1zM419 50h1v1h-1zM423 50h1v1h-1zM6 51h1v1h-1zM47 51h1v1h-1zM54 51h1v1h-1zM64 51h1v1h-1zM83 51h1v1h-1zM100 51h1v1h-1zM159 51h1v1h-1zM178 51h1v1h-1zM187 51h1v1h-1zM234 51h1v1h-1zM268 51h1v1h-1zM299 51h1v1h-1zM304 51h1v1h-1zM366 51h2v1h-2zM429 51h1v1h-1zM1 52h1v1h-1zM37 52h1v1h-1zM59 52h1v1h-1zM94 52h1v1h-1zM100 52h1v1h-1zM160 52h1v1h-1zM186 52h2v1h-2zM197 52h1v1h-1zM237 52h1v1h-1zM260 52h1v1h-1zM274 52h1v1h-1zM298 52h1v1h-1zM310 52h1v1h-1zM352 52h1v1h-1zM367 52h3v1h-3zM527 52h1v1h-1zM562 52h1v1h-1zM33 53h1v1h-1zM41 53h1v1h-1zM66 53h1v1h-1zM68 53h1v1h-1zM89 53h1v1h-1zM174 53h1v1h-1zM185 53h1v1h-1zM187 53h1v1h-1zM237 53h1v1h-1zM249 53h1v1h-1zM258 53h3v1h-3zM264 53h1v1h-1zM266 53h1v1h-1zM283 53h2v1h-2zM288 53h1v1h-1zM303 53h1v1h-1zM324 53h1v1h-1zM329 53h1v1h-1zM340 53h1v1h-1zM369 53h1v1h-1zM371 53h1v1h-1zM376 53h1v1h-1zM388 53h2v1h-2zM444 53h1v1h-1zM500 53h1v1h-1zM9 54h1v1h-1zM11 54h1v1h-1zM34 54h2v1h-2zM48 54h1v1h-1zM117 54h1v1h-1zM130 54h1v1h-1zM160 54h1v1h-1zM181 54h1v1h-1zM185 54h1v1h-1zM187 54h1v1h-1zM196 54h1v1h-1zM209 54h1v1h-1zM267 54h2v1h-2zM270 54h1v1h-1zM273 54h2v1h-2zM277 54h1v1h-1zM280 54h1v1h-1zM282 54h2v1h-2zM291 54h1v1h-1zM295 54h1v1h-1zM297 54h1v1h-1zM371 54h1v1h-1zM389 54h1v1h-1zM495 54h1v1h-1zM24 55h1v1h-1zM33 55h1v1h-1zM40 55h1v1h-1zM123 55h1v1h-1zM174 55h1v1h-1zM180 55h1v1h-1zM186 55h1v1h-1zM188 55h1v1h-1zM190 55h1v1h-1zM203 55h1v1h-1zM220 55h1v1h-1zM283 55h1v1h-1zM285 55h3v1h-3zM289 55h2v1h-2zM292 55h1v1h-1zM295 55h1v1h-1zM310 55h1v1h-1zM370 55h2v1h-2zM373 55h1v1h-1zM418 55h1v1h-1zM421 55h1v1h-1zM445 55h1v1h-1zM492 55h1v1h-1zM497 55h1v1h-1zM534 55h1v1h-1zM8 56h1v1h-1zM22 56h1v1h-1zM77 56h1v1h-1zM169 56h1v1h-1zM186 56h3v1h-3zM247 56h1v1h-1zM280 56h1v1h-1zM287 56h1v1h-1zM290 56h1v1h-1zM294 56h3v1h-3zM299 56h1v1h-1zM301 56h1v1h-1zM303 56h1v1h-1zM311 56h1v1h-1zM324 56h1v1h-1zM326 56h1v1h-1zM329 56h1v1h-1zM331 56h1v1h-1zM338 56h1v1h-1zM366 56h3v1h-3zM373 56h1v1h-1zM375 56h1v1h-1zM504 56h1v1h-1zM33 57h1v1h-1zM68 57h1v1h-1zM82 57h2v1h-2zM107 57h1v1h-1zM113 57h1v1h-1zM186 57h3v1h-3zM211 57h1v1h-1zM220 57h1v1h-1zM268 57h1v1h-1zM270 57h1v1h-1zM281 57h1v1h-1zM292 57h1v1h-1zM300 57h1v1h-1zM303 57h1v1h-1zM307 57h3v1h-3zM314 57h1v1h-1zM322 57h1v1h-1zM364 57h1v1h-1zM374 57h2v1h-2zM443 57h1v1h-1zM480 57h1v1h-1zM560 57h1v1h-1zM1 58h1v1h-1zM7 58h1v1h-1zM9 58h2v1h-2zM39 58h1v1h-1zM43 58h1v1h-1zM161 58h1v1h-1zM186 58h2v1h-2zM239 58h1v1h-1zM251 58h1v1h-1zM272 58h1v1h-1zM285 58h1v1h-1zM322 58h1v1h-1zM325 58h1v1h-1zM330 58h1v1h-1zM367 58h2v1h-2zM375 58h2v1h-2zM404 58h1v1h-1zM417 58h1v1h-1zM452 58h1v1h-1zM471 58h1v1h-1zM484 58h1v1h-1zM117 59h1v1h-1zM129 59h1v1h-1zM186 59h1v1h-1zM205 59h1v1h-1zM218 59h1v1h-1zM284 59h1v1h-1zM301 59h1v1h-1zM305 59h1v1h-1zM310 59h1v1h-1zM317 59h1v1h-1zM319 59h2v1h-2zM335 59h1v1h-1zM339 59h1v1h-1zM358 59h1v1h-1zM364 59h1v1h-1zM368 59h1v1h-1zM375 59h1v1h-1zM378 59h1v1h-1zM384 59h1v1h-1zM389 59h1v1h-1zM511 59h1v1h-1zM559 59h1v1h-1zM11 60h1v1h-1zM21 60h1v1h-1zM60 60h1v1h-1zM82 60h1v1h-1zM90 60h1v1h-1zM187 60h1v1h-1zM255 60h1v1h-1zM286 60h1v1h-1zM290 60h1v1h-1zM301 60h1v1h-1zM316 60h2v1h-2zM321 60h1v1h-1zM323 60h2v1h-2zM326 60h1v1h-1zM335 60h1v1h-1zM352 60h1v1h-1zM366 60h1v1h-1zM370 60h1v1h-1zM373 60h2v1h-2zM396 60h1v1h-1zM516 60h1v1h-1zM7 61h1v1h-1zM37 61h1v1h-1zM43 61h1v1h-1zM74 61h1v1h-1zM111 61h1v1h-1zM136 61h1v1h-1zM139 61h2v1h-2zM161 61h1v1h-1zM165 61h1v1h-1zM192 61h1v1h-1zM203 61h1v1h-1zM258 61h1v1h-1zM260 61h2v1h-2zM263 61h2v1h-2zM267 61h1v1h-1zM292 61h1v1h-1zM301 61h1v1h-1zM305 61h1v1h-1zM313 61h1v1h-1zM327 61h4v1h-4zM335 61h1v1h-1zM367 61h1v1h-1zM379 61h2v1h-2zM424 61h1v1h-1zM497 61h1v1h-1zM10 62h1v1h-1zM32 62h1v1h-1zM37 62h1v1h-1zM84 62h1v1h-1zM206 62h1v1h-1zM240 62h1v1h-1zM251 62h1v1h-1zM273 62h4v1h-4zM282 62h1v1h-1zM287 62h1v1h-1zM301 62h1v1h-1zM318 62h1v1h-1zM324 62h2v1h-2zM329 62h1v1h-1zM331 62h1v1h-1zM338 62h1v1h-1zM352 62h1v1h-1zM358 62h1v1h-1zM363 62h1v1h-1zM368 62h1v1h-1zM378 62h2v1h-2zM390 62h1v1h-1zM410 62h1v1h-1zM470 62h1v1h-1zM31 63h2v1h-2zM77 63h1v1h-1zM131 63h1v1h-1zM217 63h1v1h-1zM220 63h1v1h-1zM268 63h1v1h-1zM279 63h1v1h-1zM284 63h2v1h-2zM288 63h1v1h-1zM291 63h1v1h-1zM294 63h1v1h-1zM300 63h1v1h-1zM309 63h2v1h-2zM313 63h1v1h-1zM316 63h1v1h-1zM339 63h1v1h-1zM346 63h1v1h-1zM368 63h2v1h-2zM379 63h1v1h-1zM390 63h1v1h-1zM546 63h1v1h-1zM60 64h1v1h-1zM108 64h1v1h-1zM148 64h1v1h-1zM154 64h1v1h-1zM265 64h1v1h-1zM276 64h1v1h-1zM279 64h3v1h-3zM295 64h2v1h-2zM298 64h2v1h-2zM301 64h1v1h-1zM303 64h1v1h-1zM314 64h1v1h-1zM337 64h1v1h-1zM339 64h1v1h-1zM341 64h1v1h-1zM348 64h1v1h-1zM368 64h2v1h-2zM382 64h1v1h-1zM422 64h1v1h-1zM494 64h1v1h-1zM525 64h1v1h-1zM1 65h1v1h-1zM129 65h1v1h-1zM137 65h1v1h-1zM169 65h1v1h-1zM181 65h1v1h-1zM210 65h1v1h-1zM215 65h1v1h-1zM280 65h1v1h-1zM284 65h1v1h-1zM303 65h2v1h-2zM309 65h1v1h-1zM318 65h1v1h-1zM344 65h3v1h-3zM371 65h1v1h-1zM383 65h1v1h-1zM431 65h1v1h-1zM522 65h1v1h-1zM556 65h1v1h-1zM41 66h1v1h-1zM110 66h1v1h-1zM122 66h1v1h-1zM131 66h2v1h-2zM141 66h1v1h-1zM204 66h1v1h-1zM212 66h1v1h-1zM255 66h1v1h-1zM290 66h1v1h-1zM305 66h2v1h-2zM309 66h1v1h-1zM311 66h1v1h-1zM313 66h2v1h-2zM326 66h1v1h-1zM338 66h1v1h-1zM340 66h2v1h-2zM349 66h1v1h-1zM351 66h1v1h-1zM359 66h1v1h-1zM382 66h1v1h-1zM503 66h1v1h-1zM520 66h1v1h-1zM532 66h1v1h-1zM63 67h1v1h-1zM71 67h1v1h-1zM110 67h1v1h-1zM117 67h1v1h-1zM155 67h1v1h-1zM205 67h1v1h-1zM233 67h1v1h-1zM238 67h1v1h-1zM291 67h1v1h-1zM310 67h1v1h-1zM315 67h1v1h-1zM318 67h1v1h-1zM321 67h1v1h-1zM327 67h1v1h-1zM330 67h1v1h-1zM350 67h3v1h-3zM355 67h1v1h-1zM383 67h3v1h-3zM398 67h1v1h-1zM409 67h1v1h-1zM10 68h1v1h-1zM16 68h1v1h-1zM61 68h1v1h-1zM85 68h1v1h-1zM87 68h1v1h-1zM102 68h2v1h-2zM128 68h1v1h-1zM134 68h1v1h-1zM164 68h1v1h-1zM166 68h1v1h-1zM199 68h1v1h-1zM221 68h1v1h-1zM226 68h1v1h-1zM236 68h1v1h-1zM266 68h1v1h-1zM283 68h1v1h-1zM287 68h1v1h-1zM303 68h2v1h-2zM327 68h2v1h-2zM331 68h1v1h-1zM341 68h1v1h-1zM349 68h1v1h-1zM356 68h1v1h-1zM359 68h1v1h-1zM363 68h1v1h-1zM371 68h3v1h-3zM385 68h1v1h-1zM421 68h1v1h-1zM431 68h1v1h-1zM433 68h1v1h-1zM455 68h1v1h-1zM522 68h1v1h-1zM95 69h1v1h-1zM122 69h1v1h-1zM230 69h1v1h-1zM258 69h1v1h-1zM260 69h2v1h-2zM265 69h1v1h-1zM279 69h1v1h-1zM289 69h1v1h-1zM304 69h1v1h-1zM312 69h1v1h-1zM323 69h1v1h-1zM325 69h1v1h-1zM327 69h1v1h-1zM335 69h1v1h-1zM339 69h1v1h-1zM342 69h1v1h-1zM356 69h1v1h-1zM359 69h1v1h-1zM361 69h3v1h-3zM368 69h1v1h-1zM371 69h1v1h-1zM373 69h1v1h-1zM381 69h1v1h-1zM385 69h2v1h-2zM390 69h1v1h-1zM502 69h1v1h-1zM41 70h1v1h-1zM75 70h1v1h-1zM259 70h1v1h-1zM267 70h1v1h-1zM272 70h1v1h-1zM275 70h1v1h-1zM278 70h1v1h-1zM280 70h2v1h-2zM283 70h2v1h-2zM312 70h1v1h-1zM321 70h1v1h-1zM328 70h1v1h-1zM339 70h1v1h-1zM345 70h1v1h-1zM359 70h1v1h-1zM366 70h1v1h-1zM370 70h4v1h-4zM445 70h1v1h-1zM554 70h1v1h-1zM65 71h1v1h-1zM72 71h1v1h-1zM142 71h1v1h-1zM227 71h1v1h-1zM249 71h1v1h-1zM284 71h2v1h-2zM287 71h4v1h-4zM300 71h1v1h-1zM305 71h1v1h-1zM307 71h1v1h-1zM313 71h1v1h-1zM316 71h1v1h-1zM334 71h2v1h-2zM363 71h1v1h-1zM372 71h2v1h-2zM380 71h1v1h-1zM385 71h2v1h-2zM388 71h2v1h-2zM391 71h1v1h-1zM29 72h1v1h-1zM111 72h1v1h-1zM127 72h1v1h-1zM129 72h1v1h-1zM161 72h1v1h-1zM191 72h1v1h-1zM267 72h1v1h-1zM269 72h1v1h-1zM272 72h1v1h-1zM297 72h3v1h-3zM313 72h1v1h-1zM324 72h1v1h-1zM329 72h1v1h-1zM342 72h1v1h-1zM350 72h1v1h-1zM356 72h1v1h-1zM364 72h1v1h-1zM372 72h1v1h-1zM374 72h2v1h-2zM386 72h2v1h-2zM389 72h3v1h-3zM427 72h1v1h-1zM472 72h2v1h-2zM493 72h1v1h-1zM535 72h1v1h-1zM566 72h1v1h-1zM24 73h1v1h-1zM44 73h1v1h-1zM122 73h1v1h-1zM128 73h1v1h-1zM164 73h1v1h-1zM174 73h1v1h-1zM213 73h1v1h-1zM216 73h1v1h-1zM240 73h1v1h-1zM303 73h1v1h-1zM306 73h1v1h-1zM308 73h1v1h-1zM331 73h1v1h-1zM337 73h1v1h-1zM343 73h1v1h-1zM360 73h2v1h-2zM373 73h1v1h-1zM375 73h1v1h-1zM389 73h1v1h-1zM394 73h1v1h-1zM444 73h1v1h-1zM516 73h1v1h-1zM518 73h1v1h-1zM18 74h1v1h-1zM150 74h1v1h-1zM157 74h1v1h-1zM195 74h1v1h-1zM255 74h1v1h-1zM306 74h1v1h-1zM315 74h1v1h-1zM317 74h1v1h-1zM329 74h1v1h-1zM344 74h2v1h-2zM352 74h1v1h-1zM370 74h1v1h-1zM375 74h2v1h-2zM390 74h1v1h-1zM472 74h1v1h-1zM530 74h1v1h-1zM14 75h1v1h-1zM31 75h1v1h-1zM124 75h1v1h-1zM143 75h1v1h-1zM223 75h1v1h-1zM288 75h1v1h-1zM315 75h1v1h-1zM318 75h1v1h-1zM326 75h1v1h-1zM330 75h1v1h-1zM332 75h1v1h-1zM348 75h2v1h-2zM353 75h2v1h-2zM365 75h1v1h-1zM377 75h1v1h-1zM379 75h1v1h-1zM438 75h1v1h-1zM541 75h1v1h-1zM77 76h1v1h-1zM138 76h1v1h-1zM188 76h1v1h-1zM210 76h1v1h-1zM267 76h1v1h-1zM272 76h1v1h-1zM281 76h1v1h-1zM287 76h1v1h-1zM296 76h1v1h-1zM304 76h1v1h-1zM306 76h1v1h-1zM309 76h1v1h-1zM320 76h1v1h-1zM322 76h1v1h-1zM345 76h1v1h-1zM354 76h1v1h-1zM375 76h3v1h-3zM390 76h1v1h-1zM393 76h1v1h-1zM445 76h1v1h-1zM448 76h1v1h-1zM470 76h1v1h-1zM541 76h1v1h-1zM5 77h1v1h-1zM49 77h1v1h-1zM91 77h1v1h-1zM100 77h1v1h-1zM120 77h1v1h-1zM205 77h1v1h-1zM221 77h1v1h-1zM228 77h1v1h-1zM284 77h1v1h-1zM300 77h1v1h-1zM307 77h1v1h-1zM316 77h1v1h-1zM326 77h1v1h-1zM330 77h1v1h-1zM332 77h1v1h-1zM346 77h2v1h-2zM355 77h1v1h-1zM366 77h1v1h-1zM394 77h1v1h-1zM426 77h1v1h-1zM470 77h1v1h-1zM24 78h1v1h-1zM194 78h1v1h-1zM196 78h1v1h-1zM214 78h1v1h-1zM240 78h1v1h-1zM260 78h3v1h-3zM265 78h1v1h-1zM305 78h1v1h-1zM328 78h1v1h-1zM330 78h1v1h-1zM334 78h1v1h-1zM350 78h1v1h-1zM354 78h2v1h-2zM364 78h1v1h-1zM377 78h2v1h-2zM394 78h1v1h-1zM32 79h1v1h-1zM267 79h2v1h-2zM272 79h1v1h-1zM274 79h1v1h-1zM279 79h2v1h-2zM296 79h1v1h-1zM317 79h1v1h-1zM319 79h1v1h-1zM321 79h1v1h-1zM329 79h1v1h-1zM331 79h1v1h-1zM357 79h1v1h-1zM364 79h2v1h-2zM378 79h1v1h-1zM393 79h1v1h-1zM395 79h1v1h-1zM454 79h1v1h-1zM508 79h1v1h-1zM548 79h1v1h-1zM179 80h1v1h-1zM182 80h1v1h-1zM187 80h1v1h-1zM253 80h1v1h-1zM256 80h1v1h-1zM268 80h1v1h-1zM283 80h1v1h-1zM286 80h1v1h-1zM290 80h1v1h-1zM292 80h3v1h-3zM297 80h2v1h-2zM302 80h1v1h-1zM309 80h1v1h-1zM318 80h1v1h-1zM320 80h1v1h-1zM334 80h2v1h-2zM338 80h1v1h-1zM347 80h1v1h-1zM378 80h2v1h-2zM393 80h4v1h-4zM448 80h1v1h-1zM543 80h1v1h-1zM94 81h1v1h-1zM130 81h1v1h-1zM165 81h1v1h-1zM210 81h2v1h-2zM239 81h1v1h-1zM248 81h1v1h-1zM266 81h1v1h-1zM270 81h1v1h-1zM274 81h1v1h-1zM296 81h2v1h-2zM299 81h3v1h-3zM303 81h1v1h-1zM305 81h1v1h-1zM335 81h1v1h-1zM340 81h3v1h-3zM348 81h1v1h-1zM350 81h1v1h-1zM356 81h1v1h-1zM368 81h1v1h-1zM377 81h1v1h-1zM394 81h2v1h-2zM438 81h1v1h-1zM462 81h1v1h-1zM471 81h1v1h-1zM37 82h1v1h-1zM132 82h1v1h-1zM202 82h1v1h-1zM223 82h1v1h-1zM229 82h1v1h-1zM303 82h5v1h-5zM311 82h1v1h-1zM318 82h2v1h-2zM331 82h1v1h-1zM342 82h2v1h-2zM345 82h1v1h-1zM357 82h1v1h-1zM361 82h1v1h-1zM365 82h2v1h-2zM377 82h2v1h-2zM380 82h1v1h-1zM394 82h1v1h-1zM396 82h2v1h-2zM473 82h1v1h-1zM535 82h1v1h-1zM542 82h1v1h-1zM2 83h1v1h-1zM4 83h1v1h-1zM24 83h1v1h-1zM135 83h1v1h-1zM179 83h1v1h-1zM208 83h1v1h-1zM225 83h1v1h-1zM256 83h1v1h-1zM264 83h1v1h-1zM309 83h1v1h-1zM311 83h1v1h-1zM314 83h1v1h-1zM319 83h1v1h-1zM322 83h1v1h-1zM328 83h2v1h-2zM332 83h1v1h-1zM336 83h1v1h-1zM344 83h1v1h-1zM347 83h2v1h-2zM361 83h2v1h-2zM379 83h2v1h-2zM396 83h1v1h-1zM443 83h1v1h-1zM468 83h1v1h-1zM497 83h1v1h-1zM139 84h1v1h-1zM190 84h1v1h-1zM236 84h1v1h-1zM240 84h1v1h-1zM256 84h2v1h-2zM276 84h1v1h-1zM297 84h1v1h-1zM309 84h1v1h-1zM320 84h1v1h-1zM336 84h1v1h-1zM341 84h1v1h-1zM345 84h1v1h-1zM349 84h1v1h-1zM363 84h1v1h-1zM378 84h2v1h-2zM396 84h1v1h-1zM426 84h1v1h-1zM456 84h1v1h-1zM549 84h1v1h-1zM553 84h1v1h-1zM133 85h1v1h-1zM252 85h1v1h-1zM267 85h1v1h-1zM269 85h1v1h-1zM309 85h1v1h-1zM320 85h3v1h-3zM333 85h1v1h-1zM345 85h1v1h-1zM349 85h1v1h-1zM354 85h1v1h-1zM368 85h1v1h-1zM379 85h1v1h-1zM396 85h1v1h-1zM403 85h1v1h-1zM453 85h1v1h-1zM520 85h1v1h-1zM522 85h1v1h-1zM561 85h1v1h-1zM5 86h1v1h-1zM109 86h1v1h-1zM161 86h1v1h-1zM175 86h1v1h-1zM234 86h1v1h-1zM278 86h1v1h-1zM305 86h1v1h-1zM316 86h1v1h-1zM321 86h1v1h-1zM324 86h1v1h-1zM327 86h1v1h-1zM332 86h1v1h-1zM350 86h1v1h-1zM358 86h3v1h-3zM379 86h1v1h-1zM382 86h1v1h-1zM391 86h1v1h-1zM397 86h1v1h-1zM399 86h1v1h-1zM445 86h1v1h-1zM448 86h1v1h-1zM553 86h1v1h-1zM25 87h1v1h-1zM31 87h1v1h-1zM44 87h1v1h-1zM82 87h1v1h-1zM100 87h1v1h-1zM179 87h1v1h-1zM260 87h1v1h-1zM263 87h1v1h-1zM265 87h1v1h-1zM287 87h1v1h-1zM294 87h1v1h-1zM314 87h1v1h-1zM318 87h1v1h-1zM322 87h1v1h-1zM329 87h1v1h-1zM334 87h1v1h-1zM336 87h1v1h-1zM345 87h2v1h-2zM357 87h2v1h-2zM360 87h1v1h-1zM363 87h1v1h-1zM380 87h3v1h-3zM389 87h1v1h-1zM395 87h1v1h-1zM398 87h1v1h-1zM161 88h1v1h-1zM235 88h1v1h-1zM243 88h1v1h-1zM271 88h1v1h-1zM275 88h3v1h-3zM282 88h1v1h-1zM286 88h1v1h-1zM297 88h2v1h-2zM310 88h1v1h-1zM322 88h1v1h-1zM332 88h1v1h-1zM334 88h2v1h-2zM338 88h1v1h-1zM343 88h1v1h-1zM351 88h1v1h-1zM355 88h1v1h-1zM358 88h2v1h-2zM361 88h1v1h-1zM364 88h1v1h-1zM366 88h1v1h-1zM369 88h1v1h-1zM371 88h1v1h-1zM375 88h1v1h-1zM383 88h1v1h-1zM386 88h1v1h-1zM393 88h1v1h-1zM399 88h2v1h-2zM418 88h1v1h-1zM429 88h1v1h-1zM502 88h1v1h-1zM515 88h1v1h-1zM523 88h1v1h-1zM40 89h1v1h-1zM203 89h1v1h-1zM238 89h1v1h-1zM255 89h1v1h-1zM275 89h1v1h-1zM283 89h2v1h-2zM289 89h1v1h-1zM291 89h1v1h-1zM294 89h1v1h-1zM308 89h1v1h-1zM326 89h1v1h-1zM328 89h1v1h-1zM344 89h1v1h-1zM351 89h1v1h-1zM398 89h3v1h-3zM415 89h1v1h-1zM471 89h1v1h-1zM506 89h1v1h-1zM534 89h1v1h-1zM538 89h1v1h-1zM19 90h1v1h-1zM96 90h1v1h-1zM226 90h1v1h-1zM231 90h1v1h-1zM242 90h1v1h-1zM275 90h1v1h-1zM293 90h1v1h-1zM295 90h1v1h-1zM297 90h1v1h-1zM300 90h2v1h-2zM303 90h1v1h-1zM305 90h1v1h-1zM327 90h1v1h-1zM334 90h1v1h-1zM339 90h2v1h-2zM342 90h3v1h-3zM346 90h1v1h-1zM359 90h1v1h-1zM381 90h1v1h-1zM383 90h1v1h-1zM399 90h3v1h-3zM551 90h1v1h-1zM559 90h1v1h-1zM4 91h1v1h-1zM46 91h1v1h-1zM185 91h1v1h-1zM201 91h1v1h-1zM228 91h1v1h-1zM252 91h1v1h-1zM301 91h1v1h-1zM304 91h1v1h-1zM306 91h1v1h-1zM342 91h1v1h-1zM344 91h1v1h-1zM346 91h1v1h-1zM348 91h1v1h-1zM352 91h1v1h-1zM365 91h1v1h-1zM368 91h1v1h-1zM370 91h2v1h-2zM399 91h1v1h-1zM495 91h1v1h-1zM498 91h1v1h-1zM529 91h1v1h-1zM83 92h1v1h-1zM107 92h1v1h-1zM187 92h1v1h-1zM202 92h1v1h-1zM245 92h1v1h-1zM261 92h1v1h-1zM276 92h1v1h-1zM295 92h1v1h-1zM301 92h1v1h-1zM309 92h1v1h-1zM311 92h1v1h-1zM319 92h1v1h-1zM323 92h2v1h-2zM335 92h1v1h-1zM347 92h1v1h-1zM353 92h1v1h-1zM356 92h1v1h-1zM383 92h2v1h-2zM401 92h1v1h-1zM531 92h1v1h-1zM32 93h1v1h-1zM50 93h1v1h-1zM80 93h1v1h-1zM114 93h1v1h-1zM145 93h1v1h-1zM166 93h1v1h-1zM184 93h1v1h-1zM281 93h1v1h-1zM285 93h1v1h-1zM317 93h2v1h-2zM327 93h1v1h-1zM332 93h1v1h-1zM352 93h3v1h-3zM356 93h1v1h-1zM369 93h1v1h-1zM371 93h2v1h-2zM384 93h1v1h-1zM393 93h1v1h-1zM400 93h2v1h-2zM14 94h1v1h-1zM26 94h1v1h-1zM75 94h1v1h-1zM146 94h1v1h-1zM191 94h1v1h-1zM216 94h1v1h-1zM219 94h1v1h-1zM237 94h1v1h-1zM288 94h1v1h-1zM308 94h1v1h-1zM312 94h1v1h-1zM323 94h2v1h-2zM335 94h1v1h-1zM339 94h3v1h-3zM360 94h1v1h-1zM366 94h1v1h-1zM370 94h1v1h-1zM385 94h1v1h-1zM402 94h1v1h-1zM433 94h1v1h-1zM514 94h1v1h-1zM527 94h1v1h-1zM549 94h1v1h-1zM553 94h1v1h-1zM185 95h1v1h-1zM207 95h1v1h-1zM232 95h1v1h-1zM260 95h1v1h-1zM281 95h1v1h-1zM296 95h1v1h-1zM312 95h1v1h-1zM315 95h1v1h-1zM324 95h2v1h-2zM336 95h1v1h-1zM354 95h1v1h-1zM360 95h1v1h-1zM362 95h2v1h-2zM373 95h1v1h-1zM381 95h1v1h-1zM385 95h1v1h-1zM397 95h1v1h-1zM403 95h1v1h-1zM447 95h1v1h-1zM482 95h1v1h-1zM15 96h1v1h-1zM47 96h2v1h-2zM157 96h1v1h-1zM196 96h1v1h-1zM213 96h2v1h-2zM221 96h1v1h-1zM231 96h1v1h-1zM247 96h1v1h-1zM261 96h1v1h-1zM293 96h1v1h-1zM299 96h1v1h-1zM316 96h1v1h-1zM320 96h1v1h-1zM324 96h1v1h-1zM333 96h1v1h-1zM336 96h1v1h-1zM352 96h1v1h-1zM354 96h1v1h-1zM365 96h1v1h-1zM372 96h2v1h-2zM385 96h2v1h-2zM402 96h1v1h-1zM436 96h1v1h-1zM454 96h1v1h-1zM142 97h1v1h-1zM145 97h1v1h-1zM149 97h1v1h-1zM167 97h1v1h-1zM202 97h1v1h-1zM253 97h1v1h-1zM255 97h1v1h-1zM258 97h1v1h-1zM265 97h1v1h-1zM291 97h1v1h-1zM307 97h1v1h-1zM309 97h1v1h-1zM312 97h1v1h-1zM336 97h3v1h-3zM355 97h1v1h-1zM361 97h1v1h-1zM372 97h2v1h-2zM379 97h1v1h-1zM387 97h1v1h-1zM391 97h1v1h-1zM398 97h1v1h-1zM433 97h1v1h-1zM440 97h1v1h-1zM450 97h1v1h-1zM516 97h1v1h-1zM523 97h1v1h-1zM564 97h1v1h-1zM254 98h1v1h-1zM260 98h1v1h-1zM329 98h1v1h-1zM332 98h1v1h-1zM338 98h1v1h-1zM340 98h2v1h-2zM349 98h1v1h-1zM364 98h1v1h-1zM373 98h1v1h-1zM381 98h1v1h-1zM385 98h1v1h-1zM387 98h2v1h-2zM402 98h1v1h-1zM453 98h1v1h-1zM477 98h1v1h-1zM480 98h1v1h-1zM486 98h1v1h-1zM128 99h1v1h-1zM161 99h1v1h-1zM196 99h1v1h-1zM287 99h1v1h-1zM292 99h1v1h-1zM296 99h1v1h-1zM319 99h1v1h-1zM324 99h1v1h-1zM335 99h1v1h-1zM337 99h1v1h-1zM344 99h1v1h-1zM349 99h1v1h-1zM360 99h1v1h-1zM379 99h3v1h-3zM386 99h3v1h-3zM404 99h2v1h-2zM407 99h1v1h-1zM425 99h1v1h-1zM529 99h1v1h-1zM23 100h1v1h-1zM198 100h1v1h-1zM246 100h2v1h-2zM250 100h1v1h-1zM272 100h1v1h-1zM282 100h1v1h-1zM303 100h1v1h-1zM315 100h1v1h-1zM325 100h1v1h-1zM327 100h1v1h-1zM331 100h2v1h-2zM343 100h1v1h-1zM348 100h1v1h-1zM350 100h1v1h-1zM361 100h1v1h-1zM363 100h1v1h-1zM374 100h2v1h-2zM386 100h1v1h-1zM388 100h2v1h-2zM391 100h2v1h-2zM397 100h1v1h-1zM407 100h1v1h-1zM488 100h1v1h-1zM227 101h1v1h-1zM241 101h1v1h-1zM252 101h1v1h-1zM273 101h1v1h-1zM290 101h1v1h-1zM327 101h1v1h-1zM353 101h3v1h-3zM361 101h1v1h-1zM374 101h1v1h-1zM376 101h1v1h-1zM387 101h1v1h-1zM389 101h1v1h-1zM402 101h1v1h-1zM437 101h1v1h-1zM463 101h1v1h-1zM65 102h1v1h-1zM90 102h1v1h-1zM150 102h1v1h-1zM237 102h1v1h-1zM263 102h1v1h-1zM315 102h1v1h-1zM328 102h2v1h-2zM338 102h1v1h-1zM349 102h2v1h-2zM356 102h5v1h-5zM364 102h1v1h-1zM375 102h1v1h-1zM380 102h1v1h-1zM382 102h1v1h-1zM389 102h1v1h-1zM405 102h1v1h-1zM509 102h1v1h-1zM514 102h1v1h-1zM553 102h1v1h-1zM90 103h1v1h-1zM96 103h1v1h-1zM110 103h1v1h-1zM165 103h1v1h-1zM179 103h1v1h-1zM211 103h1v1h-1zM215 103h1v1h-1zM231 103h2v1h-2zM250 103h1v1h-1zM260 103h1v1h-1zM265 103h1v1h-1zM308 103h1v1h-1zM314 103h1v1h-1zM320 103h1v1h-1zM328 103h1v1h-1zM339 103h1v1h-1zM344 103h1v1h-1zM359 103h1v1h-1zM362 103h2v1h-2zM373 103h1v1h-1zM376 103h1v1h-1zM383 103h1v1h-1zM389 103h1v1h-1zM405 103h2v1h-2zM420 103h1v1h-1zM482 103h1v1h-1zM488 103h1v1h-1zM557 103h1v1h-1zM185 104h1v1h-1zM262 104h2v1h-2zM265 104h1v1h-1zM267 104h1v1h-1zM269 104h2v1h-2zM272 104h1v1h-1zM288 104h1v1h-1zM315 104h2v1h-2zM323 104h1v1h-1zM326 104h1v1h-1zM338 104h1v1h-1zM344 104h2v1h-2zM360 104h1v1h-1zM362 104h1v1h-1zM364 104h1v1h-1zM366 104h1v1h-1zM376 104h1v1h-1zM384 104h1v1h-1zM390 104h2v1h-2zM404 104h1v1h-1zM471 104h1v1h-1zM530 104h1v1h-1zM39 105h1v1h-1zM62 105h1v1h-1zM175 105h1v1h-1zM209 105h1v1h-1zM220 105h1v1h-1zM224 105h1v1h-1zM243 105h1v1h-1zM263 105h2v1h-2zM270 105h2v1h-2zM274 105h2v1h-2zM278 105h1v1h-1zM280 105h1v1h-1zM326 105h1v1h-1zM329 105h1v1h-1zM339 105h1v1h-1zM350 105h1v1h-1zM356 105h2v1h-2zM359 105h1v1h-1zM362 105h1v1h-1zM383 105h1v1h-1zM389 105h3v1h-3zM399 105h1v1h-1zM406 105h1v1h-1zM507 105h1v1h-1zM57 106h1v1h-1zM143 106h1v1h-1zM173 106h1v1h-1zM190 106h1v1h-1zM271 106h1v1h-1zM274 106h2v1h-2zM278 106h1v1h-1zM299 106h2v1h-2zM315 106h2v1h-2zM322 106h1v1h-1zM326 106h1v1h-1zM345 106h1v1h-1zM350 106h1v1h-1zM375 106h4v1h-4zM382 106h4v1h-4zM389 106h1v1h-1zM392 106h1v1h-1zM395 106h1v1h-1zM443 106h1v1h-1zM470 106h1v1h-1zM482 106h1v1h-1zM17 107h1v1h-1zM107 107h1v1h-1zM161 107h1v1h-1zM237 107h1v1h-1zM247 107h1v1h-1zM266 107h1v1h-1zM270 107h1v1h-1zM276 107h2v1h-2zM280 107h4v1h-4zM285 107h1v1h-1zM295 107h1v1h-1zM310 107h1v1h-1zM327 107h1v1h-1zM364 107h1v1h-1zM369 107h1v1h-1zM377 107h2v1h-2zM405 107h2v1h-2zM443 107h1v1h-1zM493 107h1v1h-1zM517 107h1v1h-1zM92 108h1v1h-1zM100 108h1v1h-1zM133 108h1v1h-1zM144 108h1v1h-1zM178 108h1v1h-1zM209 108h1v1h-1zM224 108h1v1h-1zM229 108h1v1h-1zM278 108h2v1h-2zM281 108h1v1h-1zM283 108h1v1h-1zM286 108h2v1h-2zM289 108h1v1h-1zM296 108h1v1h-1zM309 108h1v1h-1zM318 108h1v1h-1zM323 108h1v1h-1zM330 108h1v1h-1zM351 108h1v1h-1zM379 108h1v1h-1zM393 108h1v1h-1zM407 108h1v1h-1zM435 108h1v1h-1zM79 109h1v1h-1zM136 109h1v1h-1zM138 109h1v1h-1zM285 109h1v1h-1zM287 109h1v1h-1zM289 109h2v1h-2zM292 109h1v1h-1zM294 109h1v1h-1zM346 109h1v1h-1zM354 109h1v1h-1zM368 109h1v1h-1zM378 109h1v1h-1zM393 109h1v1h-1zM426 109h1v1h-1zM436 109h1v1h-1zM449 109h1v1h-1zM477 109h1v1h-1zM535 109h1v1h-1zM132 110h1v1h-1zM173 110h1v1h-1zM177 110h1v1h-1zM186 110h1v1h-1zM242 110h1v1h-1zM291 110h4v1h-4zM296 110h1v1h-1zM299 110h2v1h-2zM314 110h1v1h-1zM321 110h1v1h-1zM328 110h1v1h-1zM330 110h1v1h-1zM358 110h1v1h-1zM379 110h1v1h-1zM385 110h2v1h-2zM390 110h2v1h-2zM415 110h1v1h-1zM434 110h1v1h-1zM454 110h1v1h-1zM468 110h1v1h-1zM513 110h1v1h-1zM2 111h1v1h-1zM108 111h1v1h-1zM150 111h1v1h-1zM225 111h1v1h-1zM230 111h1v1h-1zM293 111h1v1h-1zM296 111h4v1h-4zM302 111h2v1h-2zM346 111h1v1h-1zM358 111h1v1h-1zM364 111h1v1h-1zM386 111h2v1h-2zM394 111h1v1h-1zM545 111h1v1h-1zM3 112h1v1h-1zM38 112h1v1h-1zM47 112h1v1h-1zM83 112h1v1h-1zM91 112h1v1h-1zM151 112h1v1h-1zM199 112h1v1h-1zM210 112h1v1h-1zM217 112h1v1h-1zM235 112h1v1h-1zM250 112h1v1h-1zM261 112h2v1h-2zM270 112h1v1h-1zM275 112h1v1h-1zM289 112h1v1h-1zM291 112h1v1h-1zM297 112h2v1h-2zM301 112h3v1h-3zM306 112h1v1h-1zM316 112h1v1h-1zM321 112h1v1h-1zM331 112h1v1h-1zM370 112h1v1h-1zM386 112h2v1h-2zM392 112h2v1h-2zM407 112h1v1h-1zM502 112h1v1h-1zM507 112h1v1h-1zM129 113h1v1h-1zM144 113h1v1h-1zM170 113h1v1h-1zM243 113h1v1h-1zM247 113h1v1h-1zM259 113h1v1h-1zM261 113h2v1h-2zM265 113h2v1h-2zM287 113h1v1h-1zM304 113h1v1h-1zM307 113h2v1h-2zM310 113h1v1h-1zM316 113h1v1h-1zM352 113h1v1h-1zM359 113h1v1h-1zM367 113h1v1h-1zM380 113h1v1h-1zM393 113h3v1h-3zM406 113h2v1h-2zM414 113h1v1h-1zM418 113h1v1h-1zM429 113h1v1h-1zM458 113h1v1h-1zM462 113h1v1h-1zM478 113h1v1h-1zM105 114h1v1h-1zM150 114h1v1h-1zM184 114h1v1h-1zM190 114h1v1h-1zM248 114h1v1h-1zM260 114h1v1h-1zM262 114h6v1h-6zM269 114h1v1h-1zM301 114h1v1h-1zM308 114h2v1h-2zM312 114h1v1h-1zM316 114h1v1h-1zM332 114h1v1h-1zM336 114h1v1h-1zM340 114h1v1h-1zM347 114h1v1h-1zM359 114h1v1h-1zM380 114h1v1h-1zM386 114h1v1h-1zM393 114h3v1h-3zM407 114h1v1h-1zM451 114h1v1h-1zM471 114h1v1h-1zM528 114h1v1h-1zM551 114h1v1h-1zM69 115h1v1h-1zM178 115h1v1h-1zM212 115h1v1h-1zM237 115h1v1h-1zM249 115h1v1h-1zM263 115h2v1h-2zM268 115h1v1h-1zM270 115h6v1h-6zM298 115h1v1h-1zM309 115h1v1h-1zM312 115h2v1h-2zM318 115h1v1h-1zM320 115h1v1h-1zM329 115h1v1h-1zM339 115h1v1h-1zM341 115h1v1h-1zM348 115h1v1h-1zM359 115h1v1h-1zM371 115h1v1h-1zM377 115h1v1h-1zM389 115h1v1h-1zM393 115h1v1h-1zM396 115h1v1h-1zM428 115h1v1h-1zM154 116h1v1h-1zM237 116h1v1h-1zM267 116h2v1h-2zM270 116h1v1h-1zM274 116h6v1h-6zM302 116h1v1h-1zM304 116h1v1h-1zM328 116h2v1h-2zM341 116h1v1h-1zM348 116h1v1h-1zM353 116h1v1h-1zM367 116h1v1h-1zM369 116h1v1h-1zM394 116h1v1h-1zM500 116h1v1h-1zM553 116h1v1h-1zM154 117h1v1h-1zM241 117h1v1h-1zM269 117h1v1h-1zM271 117h6v1h-6zM278 117h1v1h-1zM281 117h1v1h-1zM283 117h2v1h-2zM314 117h1v1h-1zM316 117h2v1h-2zM319 117h4v1h-4zM348 117h1v1h-1zM359 117h1v1h-1zM368 117h2v1h-2zM372 117h1v1h-1zM377 117h1v1h-1zM384 117h1v1h-1zM388 117h3v1h-3zM394 117h3v1h-3zM496 117h1v1h-1zM140 118h1v1h-1zM169 118h1v1h-1zM180 118h1v1h-1zM195 118h1v1h-1zM221 118h2v1h-2zM224 118h1v1h-1zM243 118h1v1h-1zM275 118h3v1h-3zM279 118h2v1h-2zM282 118h3v1h-3zM287 118h2v1h-2zM317 118h1v1h-1zM320 118h1v1h-1zM322 118h1v1h-1zM324 118h2v1h-2zM328 118h2v1h-2zM341 118h1v1h-1zM348 118h1v1h-1zM354 118h1v1h-1zM359 118h1v1h-1zM370 118h2v1h-2zM381 118h1v1h-1zM389 118h1v1h-1zM395 118h2v1h-2zM413 118h1v1h-1zM423 118h1v1h-1zM453 118h1v1h-1zM478 118h1v1h-1zM518 118h1v1h-1zM538 118h1v1h-1zM32 119h1v1h-1zM56 119h1v1h-1zM102 119h1v1h-1zM192 119h1v1h-1zM220 119h1v1h-1zM250 119h1v1h-1zM264 119h1v1h-1zM269 119h1v1h-1zM275 119h1v1h-1zM279 119h9v1h-9zM289 119h2v1h-2zM299 119h1v1h-1zM301 119h1v1h-1zM306 119h3v1h-3zM313 119h1v1h-1zM317 119h1v1h-1zM324 119h2v1h-2zM331 119h1v1h-1zM349 119h2v1h-2zM353 119h2v1h-2zM365 119h1v1h-1zM381 119h1v1h-1zM395 119h3v1h-3zM403 119h1v1h-1zM405 119h1v1h-1zM416 119h1v1h-1zM442 119h1v1h-1zM514 119h1v1h-1zM41 120h1v1h-1zM67 120h1v1h-1zM86 120h1v1h-1zM100 120h1v1h-1zM232 120h1v1h-1zM271 120h1v1h-1zM284 120h4v1h-4zM289 120h1v1h-1zM291 120h2v1h-2zM294 120h2v1h-2zM297 120h1v1h-1zM301 120h1v1h-1zM309 120h1v1h-1zM313 120h1v1h-1zM325 120h1v1h-1zM329 120h3v1h-3zM333 120h1v1h-1zM335 120h1v1h-1zM339 120h1v1h-1zM364 120h1v1h-1zM371 120h1v1h-1zM389 120h1v1h-1zM396 120h1v1h-1zM510 120h1v1h-1zM20 121h1v1h-1zM40 121h1v1h-1zM112 121h1v1h-1zM121 121h1v1h-1zM133 121h1v1h-1zM181 121h1v1h-1zM221 121h1v1h-1zM231 121h1v1h-1zM249 121h1v1h-1zM261 121h1v1h-1zM284 121h1v1h-1zM289 121h1v1h-1zM291 121h2v1h-2zM294 121h1v1h-1zM296 121h7v1h-7zM314 121h1v1h-1zM318 121h2v1h-2zM330 121h2v1h-2zM334 121h2v1h-2zM349 121h1v1h-1zM354 121h1v1h-1zM362 121h1v1h-1zM378 121h1v1h-1zM382 121h1v1h-1zM398 121h1v1h-1zM400 121h1v1h-1zM404 121h1v1h-1zM407 121h1v1h-1zM494 121h1v1h-1zM544 121h1v1h-1zM10 122h1v1h-1zM97 122h1v1h-1zM219 122h1v1h-1zM224 122h1v1h-1zM233 122h1v1h-1zM253 122h1v1h-1zM263 122h1v1h-1zM290 122h1v1h-1zM293 122h4v1h-4zM299 122h8v1h-8zM308 122h3v1h-3zM314 122h2v1h-2zM321 122h1v1h-1zM330 122h3v1h-3zM338 122h1v1h-1zM341 122h2v1h-2zM350 122h1v1h-1zM354 122h1v1h-1zM378 122h1v1h-1zM382 122h1v1h-1zM400 122h1v1h-1zM406 122h1v1h-1zM560 122h1v1h-1zM32 123h1v1h-1zM121 123h1v1h-1zM133 123h1v1h-1zM163 123h1v1h-1zM196 123h1v1h-1zM257 123h1v1h-1zM264 123h1v1h-1zM299 123h9v1h-9zM309 123h4v1h-4zM314 123h7v1h-7zM330 123h1v1h-1zM334 123h1v1h-1zM337 123h2v1h-2zM341 123h1v1h-1zM343 123h1v1h-1zM350 123h1v1h-1zM354 123h1v1h-1zM357 123h1v1h-1zM362 123h1v1h-1zM367 123h1v1h-1zM392 123h1v1h-1zM397 123h1v1h-1zM405 123h1v1h-1zM477 123h1v1h-1zM491 123h1v1h-1zM515 123h1v1h-1zM526 123h1v1h-1zM42 124h1v1h-1zM46 124h1v1h-1zM129 124h1v1h-1zM190 124h1v1h-1zM211 124h1v1h-1zM226 124h1v1h-1zM263 124h1v1h-1zM267 124h1v1h-1zM273 124h1v1h-1zM288 124h1v1h-1zM294 124h1v1h-1zM300 124h1v1h-1zM303 124h3v1h-3zM309 124h2v1h-2zM312 124h4v1h-4zM317 124h2v1h-2zM320 124h2v1h-2zM323 124h3v1h-3zM330 124h1v1h-1zM334 124h2v1h-2zM338 124h2v1h-2zM342 124h2v1h-2zM346 124h1v1h-1zM349 124h1v1h-1zM368 124h1v1h-1zM373 124h1v1h-1zM375 124h1v1h-1zM382 124h1v1h-1zM387 124h1v1h-1zM391 124h4v1h-4zM397 124h3v1h-3zM405 124h1v1h-1zM467 124h2v1h-2zM552 124h1v1h-1zM0 125h1v1h-1zM102 125h1v1h-1zM142 125h1v1h-1zM177 125h1v1h-1zM222 125h1v1h-1zM227 125h1v1h-1zM256 125h1v1h-1zM273 125h1v1h-1zM284 125h1v1h-1zM290 125h1v1h-1zM293 125h1v1h-1zM295 125h1v1h-1zM297 125h1v1h-1zM299 125h1v1h-1zM304 125h2v1h-2zM307 125h1v1h-1zM309 125h1v1h-1zM311 125h3v1h-3zM315 125h3v1h-3zM319 125h1v1h-1zM322 125h4v1h-4zM327 125h1v1h-1zM330 125h1v1h-1zM335 125h1v1h-1zM338 125h2v1h-2zM342 125h2v1h-2zM347 125h1v1h-1zM351 125h1v1h-1zM361 125h1v1h-1zM374 125h1v1h-1zM378 125h1v1h-1zM382 125h2v1h-2zM386 125h1v1h-1zM393 125h1v1h-1zM397 125h3v1h-3zM411 125h1v1h-1zM541 125h1v1h-1zM140 126h1v1h-1zM169 126h1v1h-1zM194 126h1v1h-1zM210 126h1v1h-1zM215 126h1v1h-1zM251 126h1v1h-1zM258 126h1v1h-1zM283 126h1v1h-1zM292 126h1v1h-1zM294 126h1v1h-1zM301 126h1v1h-1zM304 126h2v1h-2zM308 126h1v1h-1zM310 126h1v1h-1zM312 126h1v1h-1zM316 126h1v1h-1zM318 126h1v1h-1zM320 126h6v1h-6zM335 126h1v1h-1zM338 126h1v1h-1zM342 126h1v1h-1zM344 126h1v1h-1zM346 126h1v1h-1zM353 126h1v1h-1zM357 126h1v1h-1zM372 126h3v1h-3zM378 126h1v1h-1zM392 126h1v1h-1zM395 126h1v1h-1zM397 126h1v1h-1zM399 126h1v1h-1zM401 126h1v1h-1zM488 126h1v1h-1zM531 126h1v1h-1zM45 127h1v1h-1zM72 127h1v1h-1zM232 127h1v1h-1zM239 127h2v1h-2zM299 127h1v1h-1zM301 127h1v1h-1zM303 127h1v1h-1zM307 127h1v1h-1zM309 127h4v1h-4zM315 127h5v1h-5zM322 127h1v1h-1zM326 127h1v1h-1zM331 127h1v1h-1zM333 127h1v1h-1zM337 127h1v1h-1zM350 127h1v1h-1zM358 127h1v1h-1zM363 127h1v1h-1zM373 127h1v1h-1zM400 127h1v1h-1zM464 127h1v1h-1zM58 128h1v1h-1zM258 128h1v1h-1zM279 128h1v1h-1zM299 128h1v1h-1zM302 128h1v1h-1zM304 128h7v1h-7zM317 128h1v1h-1zM319 128h1v1h-1zM331 128h1v1h-1zM343 128h1v1h-1zM355 128h1v1h-1zM362 128h1v1h-1zM373 128h1v1h-1zM379 128h1v1h-1zM395 128h1v1h-1zM398 128h1v1h-1zM400 128h1v1h-1zM404 128h1v1h-1zM437 128h1v1h-1zM441 128h1v1h-1zM465 128h1v1h-1zM496 128h1v1h-1zM528 128h1v1h-1zM61 129h1v1h-1zM87 129h1v1h-1zM97 129h1v1h-1zM129 129h1v1h-1zM166 129h1v1h-1zM187 129h1v1h-1zM191 129h1v1h-1zM200 129h1v1h-1zM218 129h1v1h-1zM239 129h1v1h-1zM250 129h1v1h-1zM252 129h1v1h-1zM277 129h1v1h-1zM297 129h1v1h-1zM300 129h8v1h-8zM309 129h1v1h-1zM312 129h1v1h-1zM314 129h2v1h-2zM318 129h1v1h-1zM323 129h1v1h-1zM326 129h1v1h-1zM341 129h1v1h-1zM343 129h1v1h-1zM355 129h1v1h-1zM374 129h2v1h-2zM387 129h1v1h-1zM395 129h1v1h-1zM400 129h1v1h-1zM432 129h1v1h-1zM458 129h1v1h-1zM491 129h1v1h-1zM507 129h1v1h-1zM516 129h1v1h-1zM175 130h1v1h-1zM184 130h1v1h-1zM205 130h1v1h-1zM225 130h1v1h-1zM235 130h1v1h-1zM269 130h1v1h-1zM280 130h1v1h-1zM284 130h1v1h-1zM292 130h1v1h-1zM299 130h2v1h-2zM305 130h1v1h-1zM307 130h5v1h-5zM313 130h4v1h-4zM319 130h1v1h-1zM331 130h1v1h-1zM355 130h1v1h-1zM361 130h2v1h-2zM367 130h1v1h-1zM374 130h1v1h-1zM389 130h1v1h-1zM394 130h1v1h-1zM396 130h2v1h-2zM399 130h1v1h-1zM431 130h1v1h-1zM445 130h1v1h-1zM478 130h1v1h-1zM18 131h1v1h-1zM21 131h1v1h-1zM51 131h1v1h-1zM142 131h1v1h-1zM155 131h1v1h-1zM190 131h1v1h-1zM195 131h1v1h-1zM226 131h1v1h-1zM247 131h1v1h-1zM249 131h1v1h-1zM272 131h2v1h-2zM280 131h1v1h-1zM285 131h1v1h-1zM296 131h1v1h-1zM298 131h1v1h-1zM301 131h1v1h-1zM303 131h2v1h-2zM307 131h4v1h-4zM312 131h4v1h-4zM331 131h1v1h-1zM343 131h3v1h-3zM379 131h1v1h-1zM395 131h1v1h-1zM397 131h1v1h-1zM399 131h1v1h-1zM401 131h1v1h-1zM424 131h1v1h-1zM434 131h1v1h-1zM84 132h2v1h-2zM139 132h1v1h-1zM184 132h1v1h-1zM250 132h1v1h-1zM281 132h1v1h-1zM300 132h1v1h-1zM302 132h1v1h-1zM304 132h2v1h-2zM307 132h1v1h-1zM309 132h1v1h-1zM311 132h1v1h-1zM314 132h2v1h-2zM331 132h1v1h-1zM338 132h1v1h-1zM343 132h1v1h-1zM367 132h1v1h-1zM375 132h2v1h-2zM378 132h1v1h-1zM386 132h2v1h-2zM397 132h2v1h-2zM400 132h2v1h-2zM427 132h1v1h-1zM536 132h1v1h-1zM85 133h1v1h-1zM216 133h1v1h-1zM220 133h1v1h-1zM225 133h1v1h-1zM240 133h1v1h-1zM286 133h1v1h-1zM298 133h1v1h-1zM305 133h1v1h-1zM309 133h3v1h-3zM319 133h1v1h-1zM328 133h1v1h-1zM355 133h1v1h-1zM358 133h1v1h-1zM389 133h1v1h-1zM399 133h2v1h-2zM455 133h1v1h-1zM475 133h1v1h-1zM490 133h1v1h-1zM102 134h1v1h-1zM128 134h1v1h-1zM250 134h2v1h-2zM299 134h1v1h-1zM302 134h1v1h-1zM310 134h1v1h-1zM312 134h1v1h-1zM318 134h1v1h-1zM335 134h1v1h-1zM343 134h2v1h-2zM346 134h1v1h-1zM358 134h1v1h-1zM360 134h1v1h-1zM367 134h2v1h-2zM379 134h2v1h-2zM385 134h1v1h-1zM388 134h1v1h-1zM397 134h2v1h-2zM400 134h1v1h-1zM425 134h1v1h-1zM454 134h1v1h-1zM522 134h1v1h-1zM554 134h1v1h-1zM151 135h1v1h-1zM203 135h1v1h-1zM254 135h1v1h-1zM264 135h1v1h-1zM271 135h1v1h-1zM301 135h1v1h-1zM303 135h5v1h-5zM309 135h3v1h-3zM315 135h1v1h-1zM319 135h1v1h-1zM328 135h1v1h-1zM341 135h1v1h-1zM345 135h1v1h-1zM368 135h1v1h-1zM380 135h1v1h-1zM398 135h5v1h-5zM424 135h1v1h-1zM459 135h1v1h-1zM177 136h1v1h-1zM222 136h1v1h-1zM262 136h1v1h-1zM291 136h1v1h-1zM299 136h1v1h-1zM301 136h1v1h-1zM303 136h6v1h-6zM311 136h1v1h-1zM313 136h1v1h-1zM320 136h1v1h-1zM344 136h1v1h-1zM353 136h1v1h-1zM356 136h1v1h-1zM363 136h1v1h-1zM377 136h1v1h-1zM380 136h1v1h-1zM393 136h1v1h-1zM400 136h1v1h-1zM402 136h1v1h-1zM518 136h1v1h-1zM535 136h1v1h-1zM30 137h1v1h-1zM158 137h1v1h-1zM191 137h1v1h-1zM207 137h1v1h-1zM239 137h1v1h-1zM303 137h1v1h-1zM305 137h2v1h-2zM308 137h1v1h-1zM310 137h1v1h-1zM315 137h2v1h-2zM332 137h1v1h-1zM344 137h1v1h-1zM359 137h1v1h-1zM380 137h1v1h-1zM385 137h1v1h-1zM400 137h3v1h-3zM426 137h1v1h-1zM439 137h1v1h-1zM565 137h1v1h-1zM99 138h1v1h-1zM110 138h1v1h-1zM189 138h1v1h-1zM208 138h2v1h-2zM211 138h1v1h-1zM219 138h1v1h-1zM268 138h1v1h-1zM278 138h1v1h-1zM292 138h1v1h-1zM305 138h1v1h-1zM307 138h1v1h-1zM319 138h1v1h-1zM323 138h1v1h-1zM325 138h1v1h-1zM368 138h1v1h-1zM379 138h1v1h-1zM381 138h1v1h-1zM400 138h3v1h-3zM411 138h1v1h-1zM434 138h1v1h-1zM446 138h1v1h-1zM448 138h1v1h-1zM179 139h1v1h-1zM206 139h1v1h-1zM216 139h1v1h-1zM296 139h1v1h-1zM303 139h1v1h-1zM314 139h1v1h-1zM330 139h1v1h-1zM378 139h3v1h-3zM401 139h1v1h-1zM421 139h1v1h-1zM426 139h1v1h-1zM432 139h1v1h-1zM536 139h1v1h-1zM159 140h1v1h-1zM165 140h1v1h-1zM171 140h1v1h-1zM178 140h1v1h-1zM230 140h1v1h-1zM239 140h1v1h-1zM300 140h1v1h-1zM310 140h1v1h-1zM316 140h1v1h-1zM331 140h2v1h-2zM336 140h1v1h-1zM356 140h1v1h-1zM399 140h1v1h-1zM401 140h2v1h-2zM406 140h1v1h-1zM421 140h1v1h-1zM479 140h1v1h-1zM492 140h1v1h-1zM504 140h1v1h-1zM50 141h1v1h-1zM57 141h1v1h-1zM77 141h1v1h-1zM91 141h1v1h-1zM202 141h1v1h-1zM237 141h1v1h-1zM254 141h1v1h-1zM280 141h1v1h-1zM296 141h1v1h-1zM309 141h2v1h-2zM312 141h1v1h-1zM319 141h1v1h-1zM381 141h2v1h-2zM397 141h1v1h-1zM401 141h1v1h-1zM450 141h1v1h-1zM452 141h1v1h-1zM513 141h1v1h-1zM123 142h1v1h-1zM182 142h1v1h-1zM232 142h1v1h-1zM246 142h1v1h-1zM273 142h1v1h-1zM281 142h1v1h-1zM296 142h1v1h-1zM304 142h1v1h-1zM306 142h1v1h-1zM314 142h1v1h-1zM345 142h1v1h-1zM359 142h1v1h-1zM369 142h1v1h-1zM371 142h1v1h-1zM382 142h1v1h-1zM401 142h2v1h-2zM42 143h1v1h-1zM65 143h1v1h-1zM70 143h1v1h-1zM190 143h1v1h-1zM227 143h1v1h-1zM245 143h1v1h-1zM266 143h1v1h-1zM303 143h1v1h-1zM330 143h1v1h-1zM358 143h1v1h-1zM366 143h1v1h-1zM381 143h3v1h-3zM396 143h1v1h-1zM401 143h1v1h-1zM403 143h2v1h-2zM451 143h1v1h-1zM508 143h1v1h-1zM517 143h1v1h-1zM531 143h1v1h-1zM54 144h1v1h-1zM58 144h1v1h-1zM128 144h1v1h-1zM193 144h1v1h-1zM219 144h1v1h-1zM237 144h1v1h-1zM255 144h1v1h-1zM301 144h1v1h-1zM311 144h1v1h-1zM337 144h1v1h-1zM351 144h1v1h-1zM402 144h3v1h-3zM487 144h1v1h-1zM531 144h1v1h-1zM61 145h1v1h-1zM222 145h1v1h-1zM238 145h1v1h-1zM257 145h1v1h-1zM288 145h1v1h-1zM329 145h1v1h-1zM332 145h1v1h-1zM336 145h1v1h-1zM344 145h1v1h-1zM383 145h1v1h-1zM402 145h3v1h-3zM406 145h1v1h-1zM27 146h1v1h-1zM115 146h1v1h-1zM152 146h1v1h-1zM193 146h1v1h-1zM218 146h1v1h-1zM223 146h1v1h-1zM237 146h1v1h-1zM242 146h1v1h-1zM247 146h1v1h-1zM259 146h1v1h-1zM269 146h1v1h-1zM283 146h1v1h-1zM310 146h1v1h-1zM317 146h1v1h-1zM377 146h1v1h-1zM382 146h1v1h-1zM384 146h1v1h-1zM404 146h2v1h-2zM407 146h1v1h-1zM417 146h1v1h-1zM432 146h1v1h-1zM438 146h1v1h-1zM461 146h1v1h-1zM536 146h1v1h-1zM34 147h1v1h-1zM134 147h1v1h-1zM203 147h1v1h-1zM208 147h1v1h-1zM217 147h1v1h-1zM295 147h1v1h-1zM298 147h1v1h-1zM300 147h1v1h-1zM309 147h1v1h-1zM326 147h1v1h-1zM337 147h1v1h-1zM383 147h1v1h-1zM403 147h1v1h-1zM467 147h1v1h-1zM537 147h1v1h-1zM146 148h1v1h-1zM187 148h1v1h-1zM234 148h1v1h-1zM287 148h1v1h-1zM310 148h1v1h-1zM321 148h1v1h-1zM340 148h1v1h-1zM350 148h1v1h-1zM355 148h1v1h-1zM357 148h1v1h-1zM370 148h1v1h-1zM384 148h1v1h-1zM397 148h1v1h-1zM403 148h1v1h-1zM436 148h2v1h-2zM476 148h1v1h-1zM4 149h1v1h-1zM55 149h1v1h-1zM185 149h1v1h-1zM202 149h1v1h-1zM221 149h1v1h-1zM268 149h1v1h-1zM315 149h1v1h-1zM321 149h1v1h-1zM324 149h1v1h-1zM341 149h1v1h-1zM345 149h1v1h-1zM351 149h1v1h-1zM370 149h1v1h-1zM372 149h1v1h-1zM385 149h2v1h-2zM403 149h1v1h-1zM426 149h1v1h-1zM515 149h1v1h-1zM4 150h1v1h-1zM94 150h1v1h-1zM177 150h1v1h-1zM208 150h1v1h-1zM216 150h1v1h-1zM229 150h1v1h-1zM256 150h1v1h-1zM272 150h1v1h-1zM330 150h1v1h-1zM363 150h1v1h-1zM369 150h1v1h-1zM396 150h1v1h-1zM404 150h2v1h-2zM437 150h1v1h-1zM440 150h1v1h-1zM458 150h1v1h-1zM8 151h1v1h-1zM191 151h1v1h-1zM262 151h1v1h-1zM305 151h2v1h-2zM311 151h1v1h-1zM345 151h1v1h-1zM382 151h1v1h-1zM404 151h1v1h-1zM406 151h1v1h-1zM462 151h1v1h-1zM34 152h1v1h-1zM111 152h1v1h-1zM292 152h1v1h-1zM299 152h1v1h-1zM354 152h1v1h-1zM404 152h3v1h-3zM107 153h1v1h-1zM161 153h1v1h-1zM190 153h1v1h-1zM202 153h1v1h-1zM256 153h1v1h-1zM270 153h1v1h-1zM272 153h1v1h-1zM276 153h1v1h-1zM297 153h1v1h-1zM305 153h1v1h-1zM328 153h1v1h-1zM345 153h1v1h-1zM348 153h1v1h-1zM386 153h1v1h-1zM404 153h1v1h-1zM479 153h1v1h-1zM47 154h1v1h-1zM117 154h1v1h-1zM126 154h1v1h-1zM151 154h1v1h-1zM184 154h1v1h-1zM231 154h1v1h-1zM246 154h1v1h-1zM266 154h1v1h-1zM304 154h1v1h-1zM306 154h1v1h-1zM327 154h1v1h-1zM336 154h1v1h-1zM381 154h1v1h-1zM387 154h1v1h-1zM389 154h1v1h-1zM400 154h1v1h-1zM403 154h1v1h-1zM409 154h1v1h-1zM417 154h1v1h-1zM434 154h1v1h-1zM442 154h1v1h-1zM450 154h1v1h-1zM564 154h1v1h-1zM88 155h1v1h-1zM168 155h1v1h-1zM198 155h1v1h-1zM215 155h1v1h-1zM224 155h1v1h-1zM274 155h1v1h-1zM278 155h1v1h-1zM335 155h2v1h-2zM338 155h1v1h-1zM345 155h1v1h-1zM347 155h1v1h-1zM388 155h2v1h-2zM392 155h1v1h-1zM406 155h1v1h-1zM409 155h1v1h-1zM475 155h1v1h-1zM33 156h1v1h-1zM76 156h1v1h-1zM86 156h1v1h-1zM142 156h1v1h-1zM207 156h1v1h-1zM277 156h1v1h-1zM279 156h1v1h-1zM292 156h1v1h-1zM295 156h1v1h-1zM301 156h1v1h-1zM313 156h1v1h-1zM318 156h2v1h-2zM336 156h1v1h-1zM348 156h1v1h-1zM387 156h3v1h-3zM400 156h1v1h-1zM405 156h1v1h-1zM407 156h2v1h-2zM458 156h1v1h-1zM488 156h1v1h-1zM538 156h1v1h-1zM22 157h1v1h-1zM71 157h1v1h-1zM113 157h1v1h-1zM169 157h1v1h-1zM206 157h1v1h-1zM218 157h1v1h-1zM223 157h1v1h-1zM246 157h1v1h-1zM278 157h1v1h-1zM302 157h1v1h-1zM321 157h1v1h-1zM375 157h1v1h-1zM388 157h3v1h-3zM405 157h1v1h-1zM407 157h2v1h-2zM420 157h1v1h-1zM499 157h1v1h-1zM562 157h1v1h-1zM4 158h1v1h-1zM140 158h1v1h-1zM153 158h1v1h-1zM163 158h2v1h-2zM168 158h1v1h-1zM171 158h1v1h-1zM221 158h1v1h-1zM289 158h1v1h-1zM311 158h1v1h-1zM329 158h1v1h-1zM350 158h2v1h-2zM372 158h1v1h-1zM423 158h1v1h-1zM510 158h1v1h-1zM517 158h1v1h-1zM524 158h1v1h-1zM546 158h1v1h-1zM17 159h1v1h-1zM284 159h1v1h-1zM307 159h1v1h-1zM330 159h1v1h-1zM335 159h1v1h-1zM352 159h1v1h-1zM389 159h1v1h-1zM26 160h1v1h-1zM54 160h1v1h-1zM131 160h1v1h-1zM205 160h1v1h-1zM209 160h1v1h-1zM231 160h1v1h-1zM271 160h1v1h-1zM282 160h1v1h-1zM285 160h1v1h-1zM294 160h1v1h-1zM320 160h1v1h-1zM348 160h1v1h-1zM355 160h1v1h-1zM423 160h1v1h-1zM451 160h1v1h-1zM517 160h1v1h-1zM546 160h1v1h-1zM552 160h1v1h-1zM61 161h1v1h-1zM127 161h1v1h-1zM181 161h1v1h-1zM188 161h1v1h-1zM190 161h1v1h-1zM210 161h1v1h-1zM219 161h1v1h-1zM245 161h1v1h-1zM253 161h1v1h-1zM268 161h1v1h-1zM274 161h1v1h-1zM281 161h1v1h-1zM296 161h2v1h-2zM312 161h1v1h-1zM315 161h1v1h-1zM320 161h1v1h-1zM337 161h1v1h-1zM357 161h1v1h-1zM413 161h1v1h-1zM481 161h1v1h-1zM508 161h1v1h-1zM548 161h1v1h-1zM69 162h1v1h-1zM113 162h1v1h-1zM216 162h1v1h-1zM244 162h1v1h-1zM264 162h1v1h-1zM267 162h1v1h-1zM280 162h2v1h-2zM313 162h1v1h-1zM319 162h1v1h-1zM322 162h1v1h-1zM354 162h1v1h-1zM366 162h1v1h-1zM378 162h1v1h-1zM389 162h1v1h-1zM391 162h2v1h-2zM513 162h1v1h-1zM80 163h1v1h-1zM160 163h1v1h-1zM182 163h1v1h-1zM187 163h1v1h-1zM192 163h1v1h-1zM235 163h1v1h-1zM308 163h1v1h-1zM326 163h1v1h-1zM329 163h1v1h-1zM342 163h1v1h-1zM346 163h1v1h-1zM392 163h1v1h-1zM432 163h1v1h-1zM442 163h1v1h-1zM557 163h1v1h-1zM10 164h1v1h-1zM139 164h1v1h-1zM167 164h1v1h-1zM178 164h1v1h-1zM225 164h1v1h-1zM230 164h1v1h-1zM244 164h1v1h-1zM304 164h1v1h-1zM392 164h1v1h-1zM394 164h1v1h-1zM400 164h1v1h-1zM412 164h1v1h-1zM502 164h1v1h-1zM44 165h1v1h-1zM85 165h1v1h-1zM91 165h1v1h-1zM123 165h1v1h-1zM142 165h1v1h-1zM148 165h2v1h-2zM200 165h1v1h-1zM254 165h1v1h-1zM271 165h1v1h-1zM289 165h1v1h-1zM292 165h1v1h-1zM300 165h1v1h-1zM304 165h1v1h-1zM310 165h1v1h-1zM313 165h1v1h-1zM335 165h1v1h-1zM341 165h1v1h-1zM347 165h1v1h-1zM349 165h1v1h-1zM359 165h2v1h-2zM362 165h1v1h-1zM394 165h1v1h-1zM414 165h1v1h-1zM25 166h1v1h-1zM140 166h1v1h-1zM190 166h1v1h-1zM230 166h1v1h-1zM287 166h1v1h-1zM360 166h1v1h-1zM364 166h1v1h-1zM392 166h2v1h-2zM419 166h1v1h-1zM2 167h1v1h-1zM105 167h1v1h-1zM132 167h1v1h-1zM189 167h1v1h-1zM290 167h1v1h-1zM297 167h1v1h-1zM308 167h1v1h-1zM317 167h1v1h-1zM326 167h1v1h-1zM365 167h2v1h-2zM395 167h1v1h-1zM462 167h1v1h-1zM551 167h1v1h-1zM32 168h1v1h-1zM112 168h1v1h-1zM198 168h1v1h-1zM238 168h1v1h-1zM252 168h1v1h-1zM255 168h1v1h-1zM294 168h1v1h-1zM296 168h1v1h-1zM329 168h1v1h-1zM353 168h1v1h-1zM365 168h3v1h-3zM382 168h1v1h-1zM393 168h3v1h-3zM429 168h1v1h-1zM457 168h1v1h-1zM488 168h1v1h-1zM43 169h1v1h-1zM95 169h1v1h-1zM209 169h1v1h-1zM225 169h1v1h-1zM255 169h1v1h-1zM272 169h1v1h-1zM290 169h1v1h-1zM316 169h1v1h-1zM365 169h1v1h-1zM382 169h1v1h-1zM396 169h1v1h-1zM403 169h1v1h-1zM406 169h1v1h-1zM434 169h1v1h-1zM208 170h1v1h-1zM252 170h1v1h-1zM262 170h1v1h-1zM367 170h1v1h-1zM369 170h1v1h-1zM373 170h2v1h-2zM384 170h1v1h-1zM395 170h3v1h-3zM413 170h1v1h-1zM429 170h1v1h-1zM453 170h1v1h-1zM467 170h1v1h-1zM56 171h1v1h-1zM148 171h1v1h-1zM259 171h1v1h-1zM273 171h1v1h-1zM278 171h1v1h-1zM289 171h1v1h-1zM314 171h2v1h-2zM326 171h1v1h-1zM332 171h1v1h-1zM365 171h1v1h-1zM369 171h1v1h-1zM372 171h1v1h-1zM379 171h1v1h-1zM395 171h2v1h-2zM400 171h1v1h-1zM422 171h1v1h-1zM449 171h1v1h-1zM453 171h1v1h-1zM464 171h1v1h-1zM470 171h1v1h-1zM125 172h1v1h-1zM149 172h1v1h-1zM199 172h1v1h-1zM233 172h1v1h-1zM269 172h1v1h-1zM281 172h1v1h-1zM301 172h1v1h-1zM354 172h1v1h-1zM367 172h1v1h-1zM391 172h1v1h-1zM395 172h1v1h-1zM397 172h1v1h-1zM421 172h1v1h-1zM442 172h1v1h-1zM454 172h1v1h-1zM504 172h1v1h-1zM539 172h1v1h-1zM88 173h1v1h-1zM120 173h1v1h-1zM184 173h1v1h-1zM247 173h1v1h-1zM255 173h1v1h-1zM261 173h1v1h-1zM301 173h1v1h-1zM306 173h1v1h-1zM309 173h2v1h-2zM321 173h1v1h-1zM342 173h1v1h-1zM351 173h1v1h-1zM355 173h1v1h-1zM389 173h1v1h-1zM396 173h1v1h-1zM398 173h1v1h-1zM407 173h1v1h-1zM486 173h1v1h-1zM225 174h1v1h-1zM256 174h1v1h-1zM293 174h1v1h-1zM302 174h1v1h-1zM335 174h1v1h-1zM345 174h1v1h-1zM360 174h1v1h-1zM396 174h1v1h-1zM399 174h1v1h-1zM451 174h1v1h-1zM99 175h1v1h-1zM174 175h1v1h-1zM203 175h1v1h-1zM240 175h1v1h-1zM257 175h1v1h-1zM290 175h1v1h-1zM296 175h1v1h-1zM303 175h1v1h-1zM309 175h1v1h-1zM347 175h1v1h-1zM354 175h1v1h-1zM373 175h1v1h-1zM375 175h1v1h-1zM378 175h1v1h-1zM380 175h1v1h-1zM395 175h1v1h-1zM428 175h1v1h-1zM564 175h1v1h-1zM41 176h1v1h-1zM48 176h1v1h-1zM97 176h1v1h-1zM175 176h1v1h-1zM302 176h1v1h-1zM364 176h1v1h-1zM376 176h1v1h-1zM378 176h2v1h-2zM398 176h1v1h-1zM459 176h1v1h-1zM480 176h1v1h-1zM501 176h1v1h-1zM510 176h1v1h-1zM54 177h1v1h-1zM59 177h1v1h-1zM81 177h1v1h-1zM134 177h1v1h-1zM208 177h1v1h-1zM245 177h1v1h-1zM254 177h1v1h-1zM260 177h1v1h-1zM265 177h1v1h-1zM292 177h1v1h-1zM295 177h1v1h-1zM298 177h2v1h-2zM315 177h1v1h-1zM343 177h1v1h-1zM377 177h1v1h-1zM381 177h1v1h-1zM391 177h1v1h-1zM400 177h1v1h-1zM487 177h1v1h-1zM175 178h1v1h-1zM190 178h1v1h-1zM197 178h1v1h-1zM247 178h1v1h-1zM301 178h2v1h-2zM314 178h1v1h-1zM322 178h1v1h-1zM329 178h1v1h-1zM332 178h1v1h-1zM367 178h1v1h-1zM371 178h1v1h-1zM380 178h1v1h-1zM399 178h1v1h-1zM404 178h1v1h-1zM426 178h1v1h-1zM440 178h1v1h-1zM483 178h1v1h-1zM504 178h1v1h-1zM159 179h1v1h-1zM229 179h1v1h-1zM268 179h1v1h-1zM275 179h1v1h-1zM280 179h1v1h-1zM284 179h1v1h-1zM292 179h2v1h-2zM321 179h1v1h-1zM353 179h1v1h-1zM369 179h1v1h-1zM378 179h1v1h-1zM380 179h1v1h-1zM382 179h1v1h-1zM404 179h1v1h-1zM422 179h1v1h-1zM442 179h1v1h-1zM455 179h1v1h-1zM457 179h1v1h-1zM529 179h1v1h-1zM70 180h1v1h-1zM265 180h1v1h-1zM278 180h1v1h-1zM288 180h1v1h-1zM291 180h1v1h-1zM313 180h1v1h-1zM316 180h1v1h-1zM325 180h1v1h-1zM343 180h1v1h-1zM383 180h1v1h-1zM385 180h1v1h-1zM393 180h1v1h-1zM417 180h1v1h-1zM435 180h1v1h-1zM452 180h1v1h-1zM456 180h2v1h-2zM488 180h1v1h-1zM46 181h1v1h-1zM124 181h1v1h-1zM144 181h1v1h-1zM177 181h1v1h-1zM215 181h1v1h-1zM243 181h1v1h-1zM257 181h1v1h-1zM270 181h1v1h-1zM272 181h1v1h-1zM302 181h1v1h-1zM306 181h1v1h-1zM315 181h1v1h-1zM330 181h1v1h-1zM334 181h1v1h-1zM338 181h1v1h-1zM360 181h1v1h-1zM384 181h2v1h-2zM388 181h1v1h-1zM408 181h1v1h-1zM448 181h1v1h-1zM451 181h1v1h-1zM453 181h1v1h-1zM455 181h2v1h-2zM145 182h1v1h-1zM151 182h1v1h-1zM155 182h1v1h-1zM208 182h1v1h-1zM246 182h1v1h-1zM254 182h1v1h-1zM293 182h1v1h-1zM304 182h1v1h-1zM344 182h1v1h-1zM376 182h1v1h-1zM379 182h1v1h-1zM386 182h1v1h-1zM389 182h2v1h-2zM406 182h1v1h-1zM408 182h1v1h-1zM444 182h1v1h-1zM446 182h3v1h-3zM450 182h4v1h-4zM455 182h1v1h-1zM540 182h1v1h-1zM121 183h1v1h-1zM155 183h1v1h-1zM199 183h1v1h-1zM221 183h1v1h-1zM273 183h1v1h-1zM291 183h1v1h-1zM293 183h1v1h-1zM306 183h1v1h-1zM310 183h1v1h-1zM343 183h1v1h-1zM352 183h1v1h-1zM386 183h1v1h-1zM390 183h1v1h-1zM408 183h1v1h-1zM416 183h1v1h-1zM440 183h2v1h-2zM444 183h1v1h-1zM446 183h1v1h-1zM448 183h1v1h-1zM451 183h1v1h-1zM485 183h1v1h-1zM47 184h1v1h-1zM114 184h1v1h-1zM225 184h1v1h-1zM238 184h1v1h-1zM257 184h1v1h-1zM271 184h1v1h-1zM273 184h1v1h-1zM285 184h1v1h-1zM295 184h1v1h-1zM302 184h1v1h-1zM304 184h1v1h-1zM307 184h1v1h-1zM310 184h1v1h-1zM319 184h1v1h-1zM328 184h1v1h-1zM351 184h1v1h-1zM355 184h1v1h-1zM383 184h1v1h-1zM390 184h1v1h-1zM436 184h2v1h-2zM439 184h1v1h-1zM441 184h3v1h-3zM445 184h2v1h-2zM509 184h1v1h-1zM0 185h1v1h-1zM88 185h1v1h-1zM222 185h1v1h-1zM230 185h1v1h-1zM252 185h1v1h-1zM261 185h1v1h-1zM270 185h1v1h-1zM322 185h1v1h-1zM326 185h1v1h-1zM330 185h1v1h-1zM334 185h1v1h-1zM341 185h1v1h-1zM351 185h1v1h-1zM357 185h1v1h-1zM359 185h1v1h-1zM365 185h2v1h-2zM380 185h1v1h-1zM395 185h1v1h-1zM431 185h4v1h-4zM439 185h1v1h-1zM441 185h4v1h-4zM489 185h1v1h-1zM543 185h1v1h-1zM31 186h1v1h-1zM122 186h1v1h-1zM147 186h1v1h-1zM232 186h1v1h-1zM236 186h1v1h-1zM257 186h1v1h-1zM264 186h1v1h-1zM276 186h2v1h-2zM282 186h1v1h-1zM301 186h1v1h-1zM309 186h1v1h-1zM314 186h1v1h-1zM351 186h1v1h-1zM369 186h1v1h-1zM391 186h3v1h-3zM424 186h1v1h-1zM427 186h1v1h-1zM430 186h2v1h-2zM434 186h1v1h-1zM436 186h1v1h-1zM438 186h2v1h-2zM474 186h1v1h-1zM139 187h1v1h-1zM160 187h1v1h-1zM172 187h1v1h-1zM191 187h1v1h-1zM224 187h1v1h-1zM279 187h1v1h-1zM289 187h1v1h-1zM296 187h1v1h-1zM315 187h1v1h-1zM337 187h1v1h-1zM340 187h1v1h-1zM395 187h1v1h-1zM409 187h1v1h-1zM423 187h5v1h-5zM429 187h1v1h-1zM433 187h3v1h-3zM470 187h1v1h-1zM475 187h1v1h-1zM478 187h1v1h-1zM43 188h1v1h-1zM53 188h1v1h-1zM79 188h1v1h-1zM143 188h1v1h-1zM156 188h1v1h-1zM193 188h1v1h-1zM248 188h1v1h-1zM275 188h1v1h-1zM284 188h1v1h-1zM304 188h1v1h-1zM306 188h1v1h-1zM310 188h1v1h-1zM317 188h1v1h-1zM404 188h1v1h-1zM420 188h2v1h-2zM423 188h3v1h-3zM427 188h1v1h-1zM430 188h1v1h-1zM545 188h1v1h-1zM547 188h1v1h-1zM56 189h1v1h-1zM98 189h1v1h-1zM100 189h1v1h-1zM244 189h1v1h-1zM248 189h1v1h-1zM256 189h1v1h-1zM264 189h1v1h-1zM277 189h1v1h-1zM290 189h2v1h-2zM296 189h1v1h-1zM298 189h1v1h-1zM310 189h1v1h-1zM317 189h1v1h-1zM352 189h1v1h-1zM370 189h1v1h-1zM382 189h1v1h-1zM397 189h1v1h-1zM421 189h3v1h-3zM54 190h1v1h-1zM172 190h1v1h-1zM217 190h1v1h-1zM254 190h1v1h-1zM273 190h1v1h-1zM292 190h3v1h-3zM308 190h1v1h-1zM324 190h2v1h-2zM337 190h1v1h-1zM356 190h1v1h-1zM397 190h1v1h-1zM400 190h2v1h-2zM433 190h1v1h-1zM442 190h1v1h-1zM34 191h1v1h-1zM208 191h2v1h-2zM223 191h1v1h-1zM230 191h1v1h-1zM245 191h1v1h-1zM262 191h1v1h-1zM333 191h2v1h-2zM399 191h2v1h-2zM556 191h1v1h-1zM114 192h1v1h-1zM213 192h1v1h-1zM225 192h1v1h-1zM253 192h1v1h-1zM282 192h1v1h-1zM286 192h1v1h-1zM349 192h1v1h-1zM359 192h1v1h-1zM368 192h1v1h-1zM399 192h1v1h-1zM402 192h1v1h-1zM408 192h1v1h-1zM12 193h1v1h-1zM110 193h1v1h-1zM116 193h1v1h-1zM233 193h1v1h-1zM250 193h1v1h-1zM266 193h1v1h-1zM276 193h1v1h-1zM284 193h1v1h-1zM318 193h1v1h-1zM334 193h1v1h-1zM350 193h1v1h-1zM352 193h1v1h-1zM356 193h1v1h-1zM391 193h1v1h-1zM401 193h1v1h-1zM403 193h1v1h-1zM405 193h1v1h-1zM565 193h1v1h-1zM146 194h1v1h-1zM219 194h1v1h-1zM244 194h1v1h-1zM285 194h1v1h-1zM299 194h1v1h-1zM318 194h1v1h-1zM321 194h1v1h-1zM339 194h1v1h-1zM374 194h1v1h-1zM388 194h1v1h-1zM397 194h1v1h-1zM403 194h1v1h-1zM415 194h1v1h-1zM468 194h1v1h-1zM495 194h1v1h-1zM512 194h1v1h-1zM566 194h1v1h-1zM171 195h1v1h-1zM200 195h1v1h-1zM218 195h1v1h-1zM248 195h1v1h-1zM262 195h1v1h-1zM271 195h1v1h-1zM293 195h1v1h-1zM299 195h1v1h-1zM305 195h1v1h-1zM334 195h1v1h-1zM382 195h1v1h-1zM446 195h1v1h-1zM37 196h1v1h-1zM47 196h1v1h-1zM211 196h1v1h-1zM228 196h1v1h-1zM282 196h1v1h-1zM330 196h2v1h-2zM406 196h3v1h-3zM483 196h1v1h-1zM500 196h1v1h-1zM526 196h1v1h-1zM546 196h1v1h-1zM43 197h1v1h-1zM173 197h1v1h-1zM207 197h1v1h-1zM249 197h1v1h-1zM277 197h1v1h-1zM285 197h1v1h-1zM287 197h1v1h-1zM294 197h2v1h-2zM36 198h1v1h-1zM101 198h1v1h-1zM115 198h1v1h-1zM139 198h1v1h-1zM265 198h1v1h-1zM413 198h1v1h-1zM459 198h1v1h-1zM531 198h1v1h-1zM563 198h1v1h-1zM5 199h1v1h-1zM38 199h1v1h-1zM42 199h1v1h-1zM63 199h1v1h-1zM103 199h1v1h-1zM116 199h1v1h-1zM207 199h1v1h-1zM221 199h1v1h-1zM225 199h1v1h-1zM230 199h1v1h-1zM233 199h1v1h-1zM250 199h1v1h-1zM278 199h1v1h-1zM291 199h2v1h-2zM320 199h1v1h-1zM322 199h1v1h-1zM357 199h1v1h-1zM368 199h1v1h-1zM425 199h1v1h-1zM85 200h1v1h-1zM96 200h1v1h-1zM106 200h1v1h-1zM202 200h1v1h-1zM231 200h4v1h-4zM253 200h1v1h-1zM269 200h1v1h-1zM278 200h1v1h-1zM280 200h1v1h-1zM286 200h1v1h-1zM318 200h1v1h-1zM409 200h1v1h-1zM412 200h1v1h-1zM415 200h1v1h-1zM421 200h1v1h-1zM27 201h1v1h-1zM53 201h1v1h-1zM136 201h1v1h-1zM146 201h1v1h-1zM180 201h1v1h-1zM207 201h1v1h-1zM211 201h1v1h-1zM232 201h1v1h-1zM234 201h2v1h-2zM311 201h1v1h-1zM321 201h1v1h-1zM386 201h1v1h-1zM402 201h1v1h-1zM414 201h3v1h-3zM504 201h1v1h-1zM555 201h1v1h-1zM195 202h1v1h-1zM213 202h1v1h-1zM217 202h1v1h-1zM233 202h3v1h-3zM237 202h1v1h-1zM286 202h1v1h-1zM293 202h1v1h-1zM322 202h1v1h-1zM331 202h1v1h-1zM340 202h1v1h-1zM413 202h2v1h-2zM427 202h1v1h-1zM438 202h1v1h-1zM505 202h1v1h-1zM1 203h1v1h-1zM119 203h1v1h-1zM194 203h1v1h-1zM235 203h3v1h-3zM248 203h1v1h-1zM256 203h1v1h-1zM332 203h1v1h-1zM343 203h1v1h-1zM356 203h1v1h-1zM373 203h1v1h-1zM413 203h3v1h-3zM418 203h1v1h-1zM530 203h2v1h-2zM46 204h1v1h-1zM61 204h1v1h-1zM220 204h1v1h-1zM233 204h1v1h-1zM236 204h1v1h-1zM238 204h2v1h-2zM260 204h1v1h-1zM300 204h1v1h-1zM304 204h1v1h-1zM320 204h2v1h-2zM324 204h1v1h-1zM379 204h1v1h-1zM384 204h1v1h-1zM413 204h1v1h-1zM434 204h1v1h-1zM516 204h1v1h-1zM191 205h1v1h-1zM237 205h3v1h-3zM253 205h1v1h-1zM295 205h1v1h-1zM299 205h1v1h-1zM306 205h1v1h-1zM316 205h1v1h-1zM320 205h1v1h-1zM351 205h1v1h-1zM403 205h1v1h-1zM411 205h2v1h-2zM454 205h1v1h-1zM110 206h1v1h-1zM127 206h1v1h-1zM232 206h1v1h-1zM239 206h2v1h-2zM251 206h1v1h-1zM263 206h1v1h-1zM265 206h1v1h-1zM269 206h1v1h-1zM294 206h1v1h-1zM326 206h1v1h-1zM383 206h2v1h-2zM393 206h2v1h-2zM412 206h1v1h-1zM428 206h1v1h-1zM448 206h1v1h-1zM44 207h1v1h-1zM76 207h1v1h-1zM150 207h1v1h-1zM171 207h1v1h-1zM199 207h1v1h-1zM214 207h1v1h-1zM218 207h1v1h-1zM239 207h5v1h-5zM246 207h2v1h-2zM273 207h1v1h-1zM337 207h1v1h-1zM347 207h1v1h-1zM384 207h2v1h-2zM399 207h1v1h-1zM409 207h1v1h-1zM416 207h1v1h-1zM508 207h1v1h-1zM59 208h1v1h-1zM133 208h1v1h-1zM174 208h1v1h-1zM241 208h2v1h-2zM244 208h1v1h-1zM266 208h1v1h-1zM278 208h1v1h-1zM314 208h1v1h-1zM328 208h1v1h-1zM346 208h1v1h-1zM368 208h1v1h-1zM384 208h3v1h-3zM391 208h2v1h-2zM395 208h1v1h-1zM409 208h1v1h-1zM412 208h1v1h-1zM152 209h1v1h-1zM176 209h1v1h-1zM190 209h1v1h-1zM231 209h1v1h-1zM245 209h1v1h-1zM264 209h1v1h-1zM269 209h1v1h-1zM281 209h1v1h-1zM369 209h1v1h-1zM385 209h2v1h-2zM389 209h3v1h-3zM393 209h2v1h-2zM406 209h1v1h-1zM408 209h1v1h-1zM420 209h1v1h-1zM468 209h1v1h-1zM25 210h1v1h-1zM148 210h1v1h-1zM167 210h1v1h-1zM191 210h1v1h-1zM238 210h1v1h-1zM244 210h2v1h-2zM324 210h1v1h-1zM360 210h1v1h-1zM385 210h2v1h-2zM388 210h2v1h-2zM392 210h1v1h-1zM402 210h1v1h-1zM406 210h3v1h-3zM7 211h1v1h-1zM26 211h1v1h-1zM28 211h1v1h-1zM55 211h1v1h-1zM243 211h1v1h-1zM245 211h3v1h-3zM303 211h1v1h-1zM317 211h1v1h-1zM324 211h1v1h-1zM333 211h1v1h-1zM369 211h1v1h-1zM388 211h3v1h-3zM403 211h3v1h-3zM407 211h1v1h-1zM491 211h1v1h-1zM497 211h1v1h-1zM525 211h1v1h-1zM533 211h1v1h-1zM556 211h1v1h-1zM128 212h1v1h-1zM158 212h1v1h-1zM247 212h1v1h-1zM250 212h1v1h-1zM270 212h1v1h-1zM288 212h1v1h-1zM315 212h1v1h-1zM337 212h1v1h-1zM342 212h1v1h-1zM380 212h1v1h-1zM385 212h1v1h-1zM388 212h3v1h-3zM401 212h3v1h-3zM406 212h1v1h-1zM515 212h1v1h-1zM559 212h1v1h-1zM49 213h1v1h-1zM162 213h1v1h-1zM236 213h1v1h-1zM248 213h1v1h-1zM282 213h1v1h-1zM287 213h1v1h-1zM295 213h1v1h-1zM301 213h1v1h-1zM365 213h1v1h-1zM368 213h1v1h-1zM385 213h1v1h-1zM387 213h2v1h-2zM390 213h1v1h-1zM392 213h1v1h-1zM394 213h2v1h-2zM397 213h3v1h-3zM401 213h4v1h-4zM438 213h1v1h-1zM482 213h1v1h-1zM194 214h1v1h-1zM228 214h1v1h-1zM248 214h1v1h-1zM251 214h2v1h-2zM283 214h1v1h-1zM291 214h1v1h-1zM304 214h1v1h-1zM322 214h1v1h-1zM333 214h1v1h-1zM383 214h1v1h-1zM385 214h2v1h-2zM392 214h2v1h-2zM398 214h2v1h-2zM419 214h1v1h-1zM443 214h1v1h-1zM445 214h1v1h-1zM470 214h1v1h-1zM527 214h1v1h-1zM79 215h1v1h-1zM180 215h1v1h-1zM190 215h1v1h-1zM235 215h1v1h-1zM251 215h1v1h-1zM299 215h1v1h-1zM303 215h1v1h-1zM313 215h1v1h-1zM341 215h1v1h-1zM344 215h1v1h-1zM363 215h1v1h-1zM381 215h1v1h-1zM384 215h1v1h-1zM394 215h2v1h-2zM400 215h1v1h-1zM416 215h1v1h-1zM455 215h1v1h-1zM458 215h1v1h-1zM480 215h1v1h-1zM527 215h1v1h-1zM23 216h1v1h-1zM37 216h1v1h-1zM88 216h1v1h-1zM159 216h1v1h-1zM240 216h1v1h-1zM251 216h1v1h-1zM253 216h4v1h-4zM268 216h1v1h-1zM277 216h1v1h-1zM279 216h1v1h-1zM284 216h1v1h-1zM307 216h1v1h-1zM322 216h1v1h-1zM346 216h1v1h-1zM354 216h1v1h-1zM370 216h1v1h-1zM380 216h2v1h-2zM455 216h1v1h-1zM491 216h1v1h-1zM493 216h1v1h-1zM547 216h1v1h-1zM556 216h1v1h-1zM218 217h1v1h-1zM254 217h5v1h-5zM335 217h1v1h-1zM373 217h1v1h-1zM378 217h2v1h-2zM381 217h1v1h-1zM407 217h1v1h-1zM412 217h1v1h-1zM431 217h2v1h-2zM434 217h1v1h-1zM454 217h1v1h-1zM539 217h1v1h-1zM200 218h1v1h-1zM218 218h1v1h-1zM257 218h1v1h-1zM259 218h1v1h-1zM267 218h1v1h-1zM307 218h1v1h-1zM310 218h1v1h-1zM315 218h1v1h-1zM353 218h1v1h-1zM377 218h1v1h-1zM379 218h1v1h-1zM436 218h1v1h-1zM454 218h1v1h-1zM506 218h1v1h-1zM508 218h1v1h-1zM185 219h1v1h-1zM227 219h1v1h-1zM256 219h2v1h-2zM260 219h2v1h-2zM347 219h1v1h-1zM374 219h2v1h-2zM377 219h3v1h-3zM387 219h1v1h-1zM393 219h1v1h-1zM437 219h1v1h-1zM463 219h1v1h-1zM522 219h1v1h-1zM51 220h1v1h-1zM61 220h1v1h-1zM89 220h1v1h-1zM133 220h1v1h-1zM145 220h1v1h-1zM199 220h1v1h-1zM208 220h1v1h-1zM237 220h1v1h-1zM253 220h1v1h-1zM259 220h1v1h-1zM262 220h2v1h-2zM277 220h1v1h-1zM317 220h1v1h-1zM324 220h1v1h-1zM372 220h4v1h-4zM407 220h1v1h-1zM429 220h1v1h-1zM157 221h2v1h-2zM188 221h1v1h-1zM208 221h1v1h-1zM238 221h1v1h-1zM260 221h1v1h-1zM262 221h1v1h-1zM266 221h1v1h-1zM319 221h1v1h-1zM370 221h2v1h-2zM373 221h2v1h-2zM415 221h1v1h-1zM432 221h1v1h-1zM441 221h1v1h-1zM455 221h1v1h-1zM30 222h1v1h-1zM217 222h1v1h-1zM246 222h2v1h-2zM259 222h1v1h-1zM262 222h1v1h-1zM264 222h7v1h-7zM280 222h1v1h-1zM290 222h1v1h-1zM301 222h1v1h-1zM368 222h2v1h-2zM374 222h1v1h-1zM395 222h1v1h-1zM416 222h1v1h-1zM553 222h1v1h-1zM119 223h1v1h-1zM204 223h1v1h-1zM243 223h1v1h-1zM265 223h2v1h-2zM268 223h4v1h-4zM324 223h1v1h-1zM339 223h1v1h-1zM366 223h1v1h-1zM368 223h3v1h-3zM387 223h1v1h-1zM391 223h1v1h-1zM398 223h1v1h-1zM480 223h1v1h-1zM68 224h1v1h-1zM71 224h1v1h-1zM108 224h1v1h-1zM143 224h1v1h-1zM176 224h1v1h-1zM181 224h1v1h-1zM232 224h1v1h-1zM237 224h1v1h-1zM268 224h1v1h-1zM270 224h3v1h-3zM274 224h1v1h-1zM281 224h1v1h-1zM308 224h1v1h-1zM365 224h4v1h-4zM423 224h1v1h-1zM466 224h1v1h-1zM522 224h2v1h-2zM152 225h1v1h-1zM169 225h1v1h-1zM265 225h1v1h-1zM269 225h1v1h-1zM272 225h2v1h-2zM277 225h1v1h-1zM280 225h1v1h-1zM300 225h1v1h-1zM311 225h1v1h-1zM324 225h1v1h-1zM353 225h1v1h-1zM361 225h3v1h-3zM365 225h3v1h-3zM32 226h1v1h-1zM208 226h1v1h-1zM273 226h2v1h-2zM276 226h1v1h-1zM278 226h3v1h-3zM337 226h1v1h-1zM348 226h1v1h-1zM359 226h1v1h-1zM361 226h1v1h-1zM366 226h1v1h-1zM475 226h1v1h-1zM566 226h1v1h-1zM135 227h1v1h-1zM204 227h1v1h-1zM275 227h1v1h-1zM277 227h2v1h-2zM281 227h1v1h-1zM350 227h1v1h-1zM356 227h1v1h-1zM358 227h2v1h-2zM361 227h1v1h-1zM376 227h1v1h-1zM385 227h1v1h-1zM417 227h1v1h-1zM511 227h1v1h-1zM557 227h1v1h-1zM7 228h2v1h-2zM65 228h1v1h-1zM110 228h1v1h-1zM155 228h1v1h-1zM158 228h1v1h-1zM178 228h1v1h-1zM217 228h1v1h-1zM262 228h1v1h-1zM278 228h2v1h-2zM284 228h1v1h-1zM326 228h1v1h-1zM352 228h1v1h-1zM354 228h1v1h-1zM356 228h3v1h-3zM360 228h1v1h-1zM67 229h1v1h-1zM230 229h2v1h-2zM282 229h1v1h-1zM285 229h1v1h-1zM288 229h1v1h-1zM290 229h1v1h-1zM293 229h1v1h-1zM309 229h1v1h-1zM318 229h1v1h-1zM342 229h2v1h-2zM349 229h1v1h-1zM352 229h2v1h-2zM385 229h1v1h-1zM425 229h1v1h-1zM429 229h2v1h-2zM453 229h1v1h-1zM471 229h1v1h-1zM157 230h1v1h-1zM285 230h5v1h-5zM326 230h1v1h-1zM331 230h1v1h-1zM346 230h2v1h-2zM349 230h1v1h-1zM351 230h3v1h-3zM355 230h1v1h-1zM365 230h1v1h-1zM134 231h1v1h-1zM182 231h2v1h-2zM188 231h1v1h-1zM199 231h1v1h-1zM227 231h1v1h-1zM287 231h3v1h-3zM292 231h1v1h-1zM294 231h1v1h-1zM296 231h1v1h-1zM340 231h3v1h-3zM345 231h3v1h-3zM349 231h2v1h-2zM492 231h1v1h-1zM564 231h1v1h-1zM152 232h1v1h-1zM244 232h1v1h-1zM263 232h1v1h-1zM270 232h1v1h-1zM292 232h4v1h-4zM297 232h3v1h-3zM303 232h1v1h-1zM308 232h1v1h-1zM333 232h2v1h-2zM336 232h3v1h-3zM340 232h1v1h-1zM343 232h2v1h-2zM346 232h3v1h-3zM435 232h1v1h-1zM450 232h1v1h-1zM560 232h1v1h-1zM64 233h1v1h-1zM82 233h1v1h-1zM92 233h1v1h-1zM169 233h1v1h-1zM246 233h1v1h-1zM251 233h1v1h-1zM264 233h1v1h-1zM290 233h1v1h-1zM294 233h2v1h-2zM299 233h4v1h-4zM304 233h3v1h-3zM310 233h1v1h-1zM313 233h1v1h-1zM325 233h3v1h-3zM338 233h6v1h-6zM414 233h1v1h-1zM430 233h1v1h-1zM443 233h1v1h-1zM494 233h1v1h-1zM557 233h1v1h-1zM57 234h1v1h-1zM85 234h1v1h-1zM191 234h1v1h-1zM257 234h1v1h-1zM272 234h1v1h-1zM299 234h2v1h-2zM302 234h4v1h-4zM308 234h3v1h-3zM313 234h1v1h-1zM315 234h2v1h-2zM318 234h1v1h-1zM320 234h3v1h-3zM324 234h3v1h-3zM328 234h3v1h-3zM332 234h1v1h-1zM334 234h2v1h-2zM339 234h1v1h-1zM355 234h1v1h-1zM359 234h1v1h-1zM378 234h1v1h-1zM385 234h2v1h-2zM505 234h1v1h-1zM213 235h1v1h-1zM258 235h1v1h-1zM268 235h1v1h-1zM281 235h1v1h-1zM304 235h2v1h-2zM307 235h2v1h-2zM310 235h2v1h-2zM315 235h2v1h-2zM318 235h2v1h-2zM321 235h3v1h-3zM325 235h1v1h-1zM327 235h1v1h-1zM329 235h2v1h-2zM332 235h1v1h-1zM371 235h1v1h-1zM385 235h3v1h-3zM532 235h1v1h-1zM11 236h1v1h-1zM40 236h1v1h-1zM50 236h1v1h-1zM88 236h1v1h-1zM153 236h1v1h-1zM252 236h1v1h-1zM272 236h1v1h-1zM310 236h1v1h-1zM312 236h3v1h-3zM316 236h2v1h-2zM320 236h1v1h-1zM322 236h1v1h-1zM345 236h1v1h-1zM371 236h1v1h-1zM384 236h2v1h-2zM400 236h1v1h-1zM405 236h1v1h-1zM408 236h1v1h-1zM492 236h1v1h-1zM516 236h1v1h-1zM132 237h1v1h-1zM158 237h1v1h-1zM183 237h1v1h-1zM189 237h1v1h-1zM215 237h1v1h-1zM221 237h1v1h-1zM253 237h1v1h-1zM290 237h1v1h-1zM314 237h1v1h-1zM366 237h1v1h-1zM381 237h1v1h-1zM383 237h3v1h-3zM395 237h1v1h-1zM418 237h1v1h-1zM423 237h1v1h-1zM513 237h1v1h-1zM43 238h1v1h-1zM58 238h1v1h-1zM218 238h1v1h-1zM268 238h1v1h-1zM298 238h2v1h-2zM308 238h1v1h-1zM335 238h1v1h-1zM379 238h1v1h-1zM381 238h2v1h-2zM419 238h1v1h-1zM514 238h1v1h-1zM74 239h1v1h-1zM115 239h1v1h-1zM133 239h1v1h-1zM289 239h1v1h-1zM301 239h1v1h-1zM319 239h1v1h-1zM321 239h1v1h-1zM343 239h1v1h-1zM372 239h1v1h-1zM377 239h4v1h-4zM382 239h1v1h-1zM402 239h1v1h-1zM436 239h1v1h-1zM32 240h1v1h-1zM178 240h1v1h-1zM191 240h1v1h-1zM200 240h1v1h-1zM255 240h1v1h-1zM309 240h1v1h-1zM354 240h1v1h-1zM375 240h1v1h-1zM377 240h1v1h-1zM380 240h1v1h-1zM400 240h1v1h-1zM519 240h1v1h-1zM25 241h1v1h-1zM183 241h2v1h-2zM207 241h1v1h-1zM209 241h1v1h-1zM249 241h1v1h-1zM255 241h1v1h-1zM345 241h1v1h-1zM374 241h3v1h-3zM378 241h1v1h-1zM408 241h1v1h-1zM426 241h1v1h-1zM461 241h1v1h-1zM508 241h1v1h-1zM41 242h1v1h-1zM143 242h1v1h-1zM171 242h1v1h-1zM227 242h1v1h-1zM301 242h2v1h-2zM342 242h1v1h-1zM371 242h1v1h-1zM374 242h2v1h-2zM393 242h1v1h-1zM410 242h1v1h-1zM444 242h1v1h-1zM519 242h1v1h-1zM9 243h1v1h-1zM40 243h1v1h-1zM57 243h1v1h-1zM128 243h1v1h-1zM141 243h1v1h-1zM146 243h1v1h-1zM174 243h1v1h-1zM209 243h1v1h-1zM259 243h1v1h-1zM299 243h1v1h-1zM315 243h1v1h-1zM356 243h1v1h-1zM362 243h1v1h-1zM373 243h1v1h-1zM421 243h1v1h-1zM45 244h1v1h-1zM80 244h1v1h-1zM175 244h1v1h-1zM246 244h1v1h-1zM290 244h1v1h-1zM321 244h1v1h-1zM353 244h1v1h-1zM367 244h3v1h-3zM371 244h1v1h-1zM374 244h1v1h-1zM61 245h1v1h-1zM248 245h1v1h-1zM305 245h1v1h-1zM355 245h1v1h-1zM365 245h1v1h-1zM544 245h1v1h-1zM41 246h1v1h-1zM109 246h1v1h-1zM122 246h1v1h-1zM276 246h1v1h-1zM295 246h1v1h-1zM312 246h1v1h-1zM365 246h1v1h-1zM367 246h1v1h-1zM369 246h1v1h-1zM382 246h1v1h-1zM385 246h1v1h-1zM455 246h1v1h-1zM493 246h1v1h-1zM542 246h1v1h-1zM64 247h1v1h-1zM72 247h1v1h-1zM99 247h1v1h-1zM117 247h1v1h-1zM144 247h1v1h-1zM159 247h1v1h-1zM161 247h1v1h-1zM211 247h1v1h-1zM272 247h1v1h-1zM294 247h1v1h-1zM298 247h1v1h-1zM361 247h2v1h-2zM364 247h2v1h-2zM367 247h1v1h-1zM377 247h1v1h-1zM397 247h1v1h-1zM418 247h1v1h-1zM99 248h1v1h-1zM161 248h1v1h-1zM188 248h1v1h-1zM197 248h1v1h-1zM322 248h1v1h-1zM351 248h1v1h-1zM359 248h2v1h-2zM508 248h1v1h-1zM13 249h1v1h-1zM60 249h1v1h-1zM100 249h1v1h-1zM209 249h1v1h-1zM356 249h1v1h-1zM359 249h1v1h-1zM361 249h1v1h-1zM363 249h1v1h-1zM399 249h1v1h-1zM526 249h1v1h-1zM539 249h1v1h-1zM280 250h1v1h-1zM354 250h3v1h-3zM358 250h3v1h-3zM367 250h1v1h-1zM370 250h1v1h-1zM443 250h1v1h-1zM479 250h1v1h-1zM45 251h1v1h-1zM92 251h1v1h-1zM183 251h1v1h-1zM291 251h1v1h-1zM297 251h1v1h-1zM335 251h1v1h-1zM342 251h1v1h-1zM352 251h1v1h-1zM357 251h1v1h-1zM363 251h1v1h-1zM380 251h2v1h-2zM399 251h1v1h-1zM543 251h1v1h-1zM65 252h1v1h-1zM83 252h1v1h-1zM149 252h1v1h-1zM296 252h1v1h-1zM350 252h3v1h-3zM354 252h2v1h-2zM396 252h1v1h-1zM405 252h1v1h-1zM433 252h1v1h-1zM531 252h1v1h-1zM550 252h1v1h-1zM37 253h1v1h-1zM128 253h1v1h-1zM139 253h1v1h-1zM170 253h1v1h-1zM212 253h1v1h-1zM297 253h1v1h-1zM301 253h1v1h-1zM323 253h1v1h-1zM326 253h1v1h-1zM349 253h1v1h-1zM351 253h1v1h-1zM353 253h1v1h-1zM401 253h1v1h-1zM448 253h1v1h-1zM149 254h1v1h-1zM175 254h1v1h-1zM265 254h1v1h-1zM271 254h1v1h-1zM281 254h1v1h-1zM310 254h1v1h-1zM313 254h1v1h-1zM348 254h2v1h-2zM351 254h2v1h-2zM364 254h1v1h-1zM462 254h1v1h-1zM92 255h1v1h-1zM289 255h1v1h-1zM337 255h1v1h-1zM344 255h4v1h-4zM349 255h1v1h-1zM427 255h1v1h-1zM462 255h1v1h-1zM42 256h1v1h-1zM243 256h1v1h-1zM330 256h1v1h-1zM340 256h1v1h-1zM345 256h1v1h-1zM361 256h1v1h-1zM399 256h1v1h-1zM422 256h1v1h-1zM552 256h1v1h-1zM566 256h1v1h-1zM191 257h1v1h-1zM338 257h1v1h-1zM342 257h2v1h-2zM345 257h1v1h-1zM356 257h1v1h-1zM437 257h1v1h-1zM502 257h1v1h-1zM311 258h1v1h-1zM327 258h1v1h-1zM335 258h1v1h-1zM338 258h1v1h-1zM340 258h1v1h-1zM412 258h1v1h-1zM494 258h1v1h-1zM504 258h1v1h-1zM549 258h1v1h-1zM96 259h1v1h-1zM107 259h1v1h-1zM264 259h1v1h-1zM283 259h1v1h-1zM313 259h1v1h-1zM318 259h1v1h-1zM330 259h1v1h-1zM336 259h1v1h-1zM338 259h1v1h-1zM340 259h1v1h-1zM350 259h1v1h-1zM366 259h1v1h-1zM465 259h1v1h-1zM40 260h1v1h-1zM115 260h1v1h-1zM127 260h1v1h-1zM209 260h1v1h-1zM243 260h1v1h-1zM247 260h1v1h-1zM268 260h1v1h-1zM273 260h1v1h-1zM312 260h1v1h-1zM330 260h1v1h-1zM332 260h3v1h-3zM373 260h1v1h-1zM465 260h1v1h-1zM538 260h1v1h-1zM45 261h1v1h-1zM230 261h1v1h-1zM327 261h1v1h-1zM329 261h2v1h-2zM332 261h2v1h-2zM404 261h1v1h-1zM490 261h1v1h-1zM50 262h1v1h-1zM178 262h1v1h-1zM249 262h1v1h-1zM325 262h2v1h-2zM328 262h1v1h-1zM330 262h2v1h-2zM366 262h1v1h-1zM16 263h1v1h-1zM22 263h1v1h-1zM194 263h1v1h-1zM211 263h1v1h-1zM237 263h1v1h-1zM261 263h1v1h-1zM271 263h1v1h-1zM321 263h8v1h-8zM330 263h1v1h-1zM340 263h1v1h-1zM378 263h1v1h-1zM411 263h1v1h-1zM413 263h1v1h-1zM450 263h1v1h-1zM460 263h1v1h-1zM539 263h1v1h-1zM126 264h1v1h-1zM235 264h1v1h-1zM317 264h1v1h-1zM319 264h1v1h-1zM323 264h4v1h-4zM400 264h1v1h-1zM442 264h1v1h-1zM460 264h1v1h-1zM497 264h1v1h-1zM38 265h1v1h-1zM135 265h1v1h-1zM259 265h1v1h-1zM265 265h1v1h-1zM281 265h1v1h-1zM290 265h1v1h-1zM296 265h1v1h-1zM314 265h1v1h-1zM317 265h2v1h-2zM321 265h1v1h-1zM436 265h1v1h-1zM32 266h1v1h-1zM194 266h1v1h-1zM204 266h1v1h-1zM243 266h1v1h-1zM310 266h1v1h-1zM312 266h3v1h-3zM316 266h3v1h-3zM320 266h1v1h-1zM344 266h1v1h-1zM380 266h1v1h-1zM411 266h1v1h-1zM480 266h1v1h-1zM509 266h1v1h-1zM564 266h1v1h-1zM191 267h1v1h-1zM193 267h1v1h-1zM239 267h1v1h-1zM306 267h2v1h-2zM311 267h3v1h-3zM316 267h1v1h-1zM327 267h1v1h-1zM336 267h1v1h-1zM419 267h1v1h-1zM440 267h1v1h-1zM447 267h1v1h-1zM528 267h1v1h-1zM268 268h1v1h-1zM302 268h2v1h-2zM308 268h1v1h-1zM310 268h3v1h-3zM386 268h1v1h-1zM429 268h1v1h-1zM505 268h1v1h-1zM516 268h1v1h-1zM524 268h1v1h-1zM544 268h1v1h-1zM89 269h1v1h-1zM130 269h1v1h-1zM181 269h1v1h-1zM200 269h1v1h-1zM259 269h1v1h-1zM270 269h1v1h-1zM284 269h1v1h-1zM298 269h1v1h-1zM301 269h1v1h-1zM303 269h3v1h-3zM307 269h3v1h-3zM312 269h1v1h-1zM354 269h1v1h-1zM362 269h1v1h-1zM407 269h1v1h-1zM473 269h1v1h-1zM502 269h1v1h-1zM517 269h1v1h-1zM29 270h1v1h-1zM214 270h1v1h-1zM246 270h1v1h-1zM298 270h1v1h-1zM300 270h1v1h-1zM302 270h1v1h-1zM305 270h1v1h-1zM323 270h2v1h-2zM364 270h1v1h-1zM372 270h1v1h-1zM429 270h1v1h-1zM447 270h1v1h-1zM189 271h1v1h-1zM263 271h1v1h-1zM266 271h1v1h-1zM288 271h1v1h-1zM295 271h1v1h-1zM297 271h3v1h-3zM301 271h1v1h-1zM305 271h1v1h-1zM351 271h1v1h-1zM445 271h1v1h-1zM520 271h1v1h-1zM524 271h1v1h-1zM47 272h1v1h-1zM73 272h1v1h-1zM126 272h1v1h-1zM175 272h1v1h-1zM257 272h1v1h-1zM260 272h1v1h-1zM278 272h1v1h-1zM286 272h1v1h-1zM296 272h1v1h-1zM298 272h1v1h-1zM320 272h1v1h-1zM456 272h1v1h-1zM566 272h1v1h-1zM75 273h1v1h-1zM111 273h1v1h-1zM253 273h1v1h-1zM266 273h1v1h-1zM309 273h1v1h-1zM382 273h1v1h-1zM410 273h1v1h-1zM524 273h1v1h-1zM65 274h1v1h-1zM128 274h1v1h-1zM216 274h1v1h-1zM292 274h2v1h-2zM343 274h1v1h-1zM375 274h1v1h-1zM379 274h1v1h-1zM396 274h1v1h-1zM65 275h1v1h-1zM121 275h1v1h-1zM280 275h1v1h-1zM345 275h1v1h-1zM374 275h1v1h-1zM381 275h1v1h-1zM413 275h1v1h-1zM453 275h1v1h-1zM501 275h1v1h-1zM22 276h1v1h-1zM120 276h1v1h-1zM246 276h1v1h-1zM288 276h1v1h-1zM291 276h1v1h-1zM458 276h1v1h-1zM86 277h1v1h-1zM111 277h1v1h-1zM133 277h1v1h-1zM196 277h1v1h-1zM230 277h1v1h-1zM283 277h1v1h-1zM333 277h1v1h-1zM421 277h1v1h-1zM444 277h1v1h-1zM487 277h1v1h-1zM531 277h1v1h-1zM565 277h1v1h-1zM118 278h1v1h-1zM134 278h1v1h-1zM283 278h1v1h-1zM369 278h1v1h-1zM379 278h1v1h-1zM421 278h1v1h-1zM448 278h1v1h-1zM470 278h1v1h-1zM524 278h1v1h-1zM39 279h1v1h-1zM116 279h1v1h-1zM168 279h1v1h-1zM278 279h1v1h-1zM346 279h1v1h-1zM516 279h1v1h-1zM95 280h1v1h-1zM119 280h1v1h-1zM208 280h1v1h-1zM222 280h1v1h-1zM299 280h1v1h-1zM421 280h1v1h-1zM51 281h1v1h-1zM79 281h1v1h-1zM142 281h1v1h-1zM247 281h1v1h-1zM313 281h1v1h-1zM317 281h1v1h-1zM82 282h1v1h-1zM165 282h1v1h-1zM219 282h1v1h-1zM560 282h1v1h-1zM12 283h1v1h-1zM76 283h1v1h-1zM188 283h1v1h-1zM206 283h1v1h-1zM247 283h1v1h-1zM291 283h1v1h-1zM307 283h1v1h-1zM391 283h1v1h-1zM492 283h1v1h-1zM500 283h1v1h-1zM525 283h1v1h-1zM556 283h1v1h-1zM150 284h1v1h-1zM181 284h1v1h-1zM188 284h1v1h-1zM208 284h1v1h-1zM220 284h1v1h-1zM268 284h1v1h-1zM433 284h2v1h-2zM41 285h1v1h-1zM192 285h1v1h-1zM266 285h1v1h-1zM277 285h1v1h-1zM295 285h1v1h-1zM368 285h1v1h-1zM371 285h1v1h-1zM408 285h1v1h-1zM532 285h1v1h-1zM555 285h1v1h-1zM264 286h1v1h-1zM344 286h1v1h-1zM349 286h1v1h-1zM477 286h1v1h-1zM510 286h1v1h-1zM532 286h1v1h-1zM537 286h1v1h-1zM184 287h1v1h-1zM200 287h1v1h-1zM221 287h1v1h-1zM266 287h1v1h-1zM283 287h1v1h-1zM364 287h1v1h-1zM499 287h1v1h-1zM502 287h1v1h-1zM59 288h1v1h-1zM156 288h1v1h-1zM245 288h1v1h-1zM282 288h1v1h-1zM325 288h1v1h-1zM362 288h1v1h-1zM442 288h1v1h-1zM198 289h1v1h-1zM287 289h1v1h-1zM352 289h1v1h-1zM501 289h1v1h-1zM92 290h2v1h-2zM133 290h1v1h-1zM136 290h1v1h-1zM242 290h1v1h-1zM257 290h1v1h-1zM261 290h1v1h-1zM359 290h1v1h-1zM493 290h1v1h-1zM495 290h1v1h-1zM517 290h1v1h-1zM80 291h1v1h-1zM149 291h1v1h-1zM266 291h1v1h-1zM353 291h1v1h-1zM162 292h1v1h-1zM206 292h1v1h-1zM283 292h1v1h-1zM344 292h1v1h-1zM367 292h1v1h-1zM457 292h1v1h-1zM557 292h1v1h-1zM89 293h1v1h-1zM100 293h1v1h-1zM184 293h1v1h-1zM264 293h1v1h-1zM278 293h1v1h-1zM283 293h1v1h-1zM303 293h1v1h-1zM316 293h1v1h-1zM357 293h1v1h-1zM565 293h1v1h-1zM75 294h1v1h-1zM87 294h1v1h-1zM188 294h1v1h-1zM257 294h1v1h-1zM266 294h1v1h-1zM337 294h1v1h-1zM404 294h1v1h-1zM553 294h1v1h-1zM123 295h2v1h-2zM137 295h1v1h-1zM342 295h1v1h-1zM506 295h1v1h-1zM125 296h1v1h-1zM162 296h1v1h-1zM197 296h1v1h-1zM227 296h1v1h-1zM264 296h1v1h-1zM352 296h1v1h-1zM362 296h1v1h-1zM384 296h1v1h-1zM428 296h1v1h-1zM4 297h1v1h-1zM114 297h1v1h-1zM214 297h1v1h-1zM285 297h1v1h-1zM346 297h1v1h-1zM383 297h1v1h-1zM477 297h1v1h-1zM26 298h1v1h-1zM76 298h1v1h-1zM102 298h1v1h-1zM225 298h1v1h-1zM252 298h1v1h-1zM312 298h1v1h-1zM324 298h1v1h-1zM333 298h1v1h-1zM335 298h1v1h-1zM37 299h1v1h-1zM98 299h1v1h-1zM101 299h1v1h-1zM142 299h1v1h-1zM170 299h1v1h-1zM235 299h1v1h-1zM277 299h1v1h-1zM353 299h1v1h-1zM406 299h1v1h-1zM38 300h1v1h-1zM97 300h1v1h-1zM235 300h1v1h-1zM292 300h1v1h-1zM396 300h1v1h-1zM438 300h1v1h-1zM450 300h1v1h-1zM462 300h1v1h-1zM27 301h1v1h-1zM43 301h1v1h-1zM344 301h1v1h-1zM418 301h1v1h-1zM462 301h1v1h-1zM510 301h1v1h-1zM17 302h1v1h-1zM88 302h1v1h-1zM90 302h1v1h-1zM240 302h1v1h-1zM400 302h1v1h-1zM70 303h1v1h-1zM171 303h1v1h-1zM177 303h1v1h-1zM191 303h1v1h-1zM231 303h1v1h-1zM233 303h1v1h-1zM242 303h1v1h-1zM388 303h1v1h-1zM541 303h1v1h-1zM212 304h1v1h-1zM370 304h1v1h-1zM432 304h1v1h-1zM508 304h1v1h-1zM543 304h1v1h-1zM121 305h1v1h-1zM161 305h1v1h-1zM195 305h1v1h-1zM242 305h1v1h-1zM434 305h1v1h-1zM436 305h1v1h-1zM163 306h1v1h-1zM265 306h1v1h-1zM329 306h1v1h-1zM450 306h1v1h-1zM459 306h1v1h-1zM242 307h1v1h-1zM250 307h1v1h-1zM316 307h1v1h-1zM357 307h1v1h-1zM474 307h1v1h-1zM105 308h1v1h-1zM170 308h1v1h-1zM174 308h1v1h-1zM377 308h1v1h-1zM488 308h1v1h-1zM506 308h1v1h-1zM50 309h1v1h-1zM78 309h1v1h-1zM227 309h1v1h-1zM336 309h1v1h-1zM151 310h1v1h-1zM212 310h1v1h-1zM234 310h1v1h-1zM250 310h1v1h-1zM301 310h1v1h-1zM35 311h1v1h-1zM124 311h1v1h-1zM488 311h1v1h-1zM507 311h1v1h-1zM228 312h1v1h-1zM203 313h1v1h-1zM394 313h1v1h-1zM63 314h1v1h-1zM172 314h1v1h-1zM242 314h1v1h-1zM324 314h1v1h-1zM348 314h1v1h-1zM361 314h1v1h-1zM402 314h1v1h-1zM530 314h1v1h-1zM540 314h1v1h-1zM45 315h1v1h-1zM129 315h1v1h-1zM137 315h1v1h-1zM149 315h1v1h-1zM165 315h1v1h-1zM214 315h1v1h-1zM447 315h1v1h-1zM31 316h1v1h-1zM145 316h1v1h-1zM209 316h1v1h-1zM360 316h1v1h-1zM401 316h1v1h-1zM536 316h1v1h-1zM91 317h1v1h-1zM143 317h1v1h-1zM165 317h1v1h-1zM296 317h1v1h-1zM304 317h1v1h-1zM340 317h1v1h-1zM351 317h1v1h-1zM456 317h1v1h-1zM555 317h1v1h-1zM70 318h1v1h-1zM315 318h1v1h-1zM384 318h1v1h-1zM512 318h1v1h-1zM550 318h1v1h-1zM43 319h1v1h-1zM169 319h1v1h-1zM373 319h1v1h-1zM408 319h1v1h-1zM427 319h1v1h-1z"/></svg></div>
    <!-- controls -->
    <svg class="abs" style="left:0;top:440px" width="609" height="80" viewBox="374 499 609 80">
      <g fill="#6a6a6a">
        <rect x="407" y="523.9" width="19" height="13.8" rx="0.8" fill="none" stroke="#6a6a6a" stroke-width="1.8"/>
        <rect x="414.5" y="538" width="4" height="1.8"/>
        <rect x="413" y="539.3" width="7" height="1.8" rx="0.8"/>
        <path d="M415.6 533.2V528.3H418.2M415.6 530.6H417.6" stroke="#8a8a8a" stroke-width="0.8" fill="none"/>
      </g>
      <rect x="456" y="512" width="2" height="39" fill="#8c9aa2"/>
      <rect x="572" y="512" width="2" height="39" fill="#8c9aa2"/>
      <circle cx="515" cy="532" r="9" fill="none" stroke="#6a6a6a" stroke-width="1.8"/>
      <circle cx="515" cy="532" r="6" fill="#6a6a6a"/>
      <g fill="#6a6a6a" stroke="#6a6a6a" stroke-width="2.2" stroke-linejoin="round">
        <path d="M612 526.6L603.2 532L612 537.4Z M620.3 526.6L612 532L620.3 537.4Z"/>
        <path d="M657.6 525V539L670.6 532Z"/>
        <rect x="704.5" y="523.5" width="17" height="17" stroke-width="1"/>
        <path d="M756.3 526.6L764 532L756.3 537.4Z M764 526.6L772.8 532L764 537.4Z"/>
      </g>
      <g fill="none" stroke="#6a6a6a" stroke-width="1.8">
        <path d="M805 532.3V527.4Q805 526 806.4 526H816.5M820.8 531.2V536.1Q820.8 537.5 819.4 537.5H809.5"/>
        <path d="M816 523.4L819.8 526L816 528.6Z M810 534.9L806.2 537.5L810 540.1Z" fill="#6a6a6a" stroke-width="0.8" stroke-linejoin="round"/>
      </g>
      <g fill="none" stroke="#6a6a6a" stroke-width="1.8">
        <path d="M934 527.5H937.5M943.5 527.5H954M934 536H944M950 536H954"/>
        <circle cx="940.5" cy="527.5" r="3"/>
        <circle cx="947" cy="536" r="3"/>
      </g>
    </svg>
    <div class="abs" style="left:343px;top:505px;font-size:17px;color:#8a8a8a;line-height:20px;letter-spacing:-0.17px">00:10:551136/00:19:025057</div>
    <div class="abs" style="left:18px;top:534px;width:572px;height:10px;background:#034a6a;border-radius:5px"></div>
    <div class="abs" style="left:20px;top:528px;width:22px;height:22px;border-radius:50%;background:#fff;border:2.6px solid #054b6b"></div>
  </div>
  <!-- dialog -->
  <div class="abs" style="left:327px;top:201px;width:326px;height:230px;background:#fff;border-radius:8px;box-shadow:0 14px 40px rgba(0,0,0,.33),0 0 1px rgba(0,0,0,.45)">
    <div class="abs" style="left:12px;top:16px;font-size:18px;color:#0f4a6a;line-height:20px;letter-spacing:0.45px;-webkit-text-stroke:0.35px #0f4a6a">Cut Recording</div>
    <svg class="abs" style="left:293px;top:17px" width="14" height="14" viewBox="0 0 14 14"><path d="M1 1L13 13M13 1L1 13" stroke="#0b4a6a" stroke-width="2"/></svg>
    <div class="abs" style="left:11px;top:47px;width:304px;height:2px;background:#0b3f70"></div>
    <div class="lbl" style="top:64px">Start Time</div>
    <div class="lbl" style="top:100px">End Time</div>
    <div class="lbl" style="top:136px;letter-spacing:-0.2px">Save File Path</div>
    <div class="lbl" style="top:172px">File Name</div>
    <div class="inp" style="top:55px"><div class="num">10551136</div>
      <svg class="abs" style="left:5px;top:8px" width="190" height="12" viewBox="0 0 190 12"><path d="M1.5 6H9.5M180 6H190M185 1V11" stroke="#0b4a6a" stroke-width="2.3" stroke-linecap="round"/></svg></div>
    <div class="inp" style="top:91px"><div class="num">19025057</div>
      <svg class="abs" style="left:5px;top:8px" width="190" height="12" viewBox="0 0 190 12"><path d="M1.5 6H9.5M180 6H190M185 1V11" stroke="#0b4a6a" stroke-width="2.3" stroke-linecap="round"/></svg></div>
    <div class="inp" style="top:127px"><div class="abs" style="right:41px;top:8.5px;font-size:12.5px;color:#444;line-height:15px;white-space:nowrap">VC2022_64bit-Release/Data</div>
      <svg class="abs" style="left:170px;top:9px" width="16" height="12" viewBox="607 339 16 12"><path d="M609 349.3V340.6Q609 339.6 610 339.6H613L614.5 341.4H618.6Q619.6 341.4 619.6 342.4V343.6M609.4 349.4L611.9 344.6Q612.3 343.9 613 343.9H620.6Q621.6 343.9 621.3 344.8L619.8 348.6Q619.5 349.4 618.7 349.4Z" fill="none" stroke="#5e5e5e" stroke-width="1.1" stroke-linejoin="round"/></svg></div>
    <div class="inp" style="top:163px"><div class="abs" style="left:3px;top:8px;font-size:12.5px;color:#444;line-height:15px;white-space:nowrap">20250402_144338.raw</div></div>
    <div class="btn" style="left:166px;width:60px;border:1.2px solid #0b4a6a;color:#174a68;-webkit-text-stroke:0.25px #174a68;line-height:19px">Cancel</div>
    <div class="btn" style="left:246px;width:60px;background:#054b6b;color:#fff;-webkit-text-stroke:0.2px #fff;line-height:20.5px;font-size:11.5px">Cut</div>
  </div>
</div>
</body></html>
